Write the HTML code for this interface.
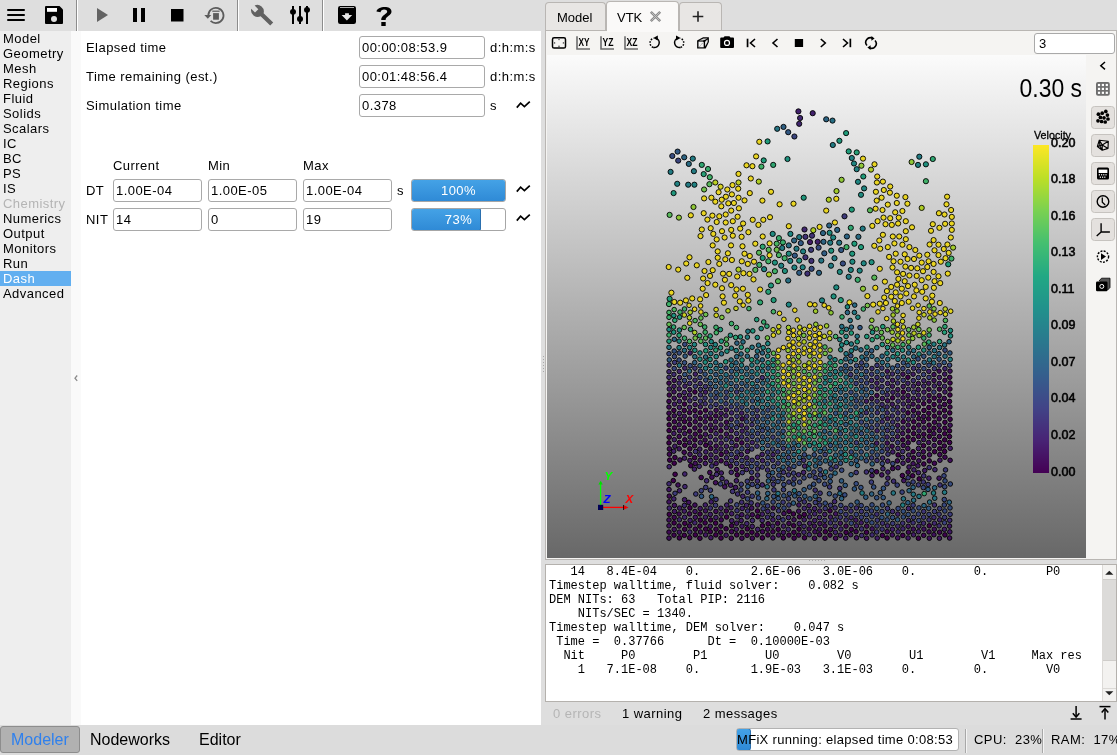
<!DOCTYPE html>
<html><head><meta charset="utf-8">
<style>
*{box-sizing:border-box;margin:0;padding:0}
html,body{width:1117px;height:755px;overflow:hidden;background:#dedede;font-family:"Liberation Sans",sans-serif;font-size:13px;color:#000;letter-spacing:0.45px}
svg,pre{letter-spacing:0}
.a{position:absolute}
#tb{left:0;top:0;width:545px;height:31px;background:#dedede}
.sep{position:absolute;top:0;width:2px;height:31px;border-left:1px solid #8c8c8c;border-right:1px solid #fff}
#nav{left:0;top:31px;width:71px;height:694px;background:#eeeeee}
#nav div{position:absolute;left:3px;height:15px;line-height:15px;white-space:nowrap}
#strip{left:71px;top:31px;width:10px;height:694px;background:#fafafa}
#panel{left:81px;top:31px;width:460px;height:694px;background:#fff}
.lbl{position:absolute;white-space:nowrap;line-height:15px}
.inp{position:absolute;height:23px;border:1px solid #a9a9a9;border-radius:3px;background:#fff;padding-left:2px;line-height:21px;white-space:nowrap}
.pb{position:absolute;height:23px;border:1px solid #a6a6a6;border-radius:3px;background:#fff;overflow:hidden}
.pbf{position:absolute;left:0;top:0;height:21px;background:linear-gradient(#44a2e6,#2f8ad6);border:1px solid #2a6fae;border-radius:2px}
.pbt{position:absolute;left:0;top:0;width:100%;height:21px;line-height:21px;text-align:center;color:#fff}
</style></head><body><div id="root" style="position:absolute;left:0;top:0;width:1117px;height:755px;will-change:transform">
<!-- main toolbar -->
<div id="tb" class="a">
<svg class="a" style="left:0;top:0" width="545" height="31" viewBox="0 0 545 31">
<g fill="#000">
<rect x="7" y="9" width="18" height="2" rx="1"/><rect x="7" y="14" width="18" height="2" rx="1"/><rect x="7" y="19" width="18" height="2" rx="1"/>
</g>
<path d="M46,6 H59.5 L63,9.5 V23 a1,1 0 0 1 -1,1 H46 a1,1 0 0 1 -1,-1 V7 a1,1 0 0 1 1,-1z" fill="#000"/>
<rect x="47" y="8" width="10" height="3.8" fill="#fff"/>
<circle cx="54" cy="18.9" r="3" fill="#dedede"/>
<path d="M97,8 L108,15 L97,22z" fill="#636363"/>
<rect x="133" y="8" width="4" height="14" fill="#000"/><rect x="141" y="8" width="4" height="14" fill="#000"/>
<rect x="171" y="9" width="12.5" height="12.5" fill="#000"/>
<path d="M210.6,20.9 A7.6,7.6 0 1 0 208.3,15.4" fill="none" stroke="#5c5c5c" stroke-width="1.8"/>
<path d="M204.3,15.1 L211.3,15.1 L207.8,18.7z" fill="#5c5c5c"/>
<rect x="213.1" y="13.1" width="5.8" height="6.6" fill="#5c5c5c"/>
<rect x="212.3" y="10.6" width="7.3" height="1.2" fill="#5c5c5c"/>
<path d="M251.2,8.8 L255,12.4 L258.3,9.2 L254.6,5.4 A6.6,6.6 0 0 1 263.6,13.2 L273.2,22.4 L270.2,25.6 L260.6,16.2 A6.6,6.6 0 0 1 251.2,8.8z" fill="#616161"/>
<g fill="#000"><rect x="292" y="6" width="2" height="18"/><rect x="299" y="6" width="2" height="18"/><rect x="306" y="6" width="2" height="18"/>
<ellipse cx="293" cy="11.8" rx="3" ry="2.9"/><ellipse cx="300" cy="18.9" rx="3" ry="2.9"/><ellipse cx="307" cy="9.8" rx="3" ry="2.9"/></g>
<rect x="338" y="6" width="18" height="18" rx="2.2" fill="#000"/>
<rect x="340" y="7.2" width="14" height="0.8" fill="#dedede"/>
<path d="M345.1,13.2 H348.9 V15.1 H352.2 L346.9,20.4 L341.6,15.1 H345.1z" fill="#e6e6e6"/>
<path d="M376.5,11.6 C376.4,6.4 391.5,4.5 391.5,11.6 C391.5,16 385.8,16 385.6,20 L381.2,20 C381.1,15 387.2,14.2 387.2,11.8 C387.2,8.6 380.6,8.8 380.6,12.2z" fill="#000"/>
<rect x="381.3" y="22" width="4.4" height="4" fill="#000"/>
</svg>
</div>
<div class="sep" style="left:76px"></div>
<div class="sep" style="left:237px"></div>
<div class="sep" style="left:322px"></div>

<!-- nav -->
<div id="nav" class="a">
<div style="top:0">Model</div>
<div style="top:15px">Geometry</div>
<div style="top:30px">Mesh</div>
<div style="top:45px">Regions</div>
<div style="top:60px">Fluid</div>
<div style="top:75px">Solids</div>
<div style="top:90px">Scalars</div>
<div style="top:105px">IC</div>
<div style="top:120px">BC</div>
<div style="top:135px">PS</div>
<div style="top:150px">IS</div>
<div style="top:165px;color:#b4b4b4">Chemistry</div>
<div style="top:180px">Numerics</div>
<div style="top:195px">Output</div>
<div style="top:210px">Monitors</div>
<div style="top:225px">Run</div>
<div style="top:240px;left:0;width:71px;padding-left:3px;background:#62aff0;color:#fff">Dash</div>
<div style="top:255px">Advanced</div>
</div>
<div id="strip" class="a"></div>
<div id="panel" class="a"></div>
<div class="lbl" style="left:86px;top:40px">Elapsed time</div>
<div class="lbl" style="left:86px;top:69px">Time remaining (est.)</div>
<div class="lbl" style="left:86px;top:98px">Simulation time</div>
<div class="inp" style="left:359px;top:36px;width:126px">00:00:08:53.9</div>
<div class="inp" style="left:359px;top:65px;width:126px">00:01:48:56.4</div>
<div class="inp" style="left:359px;top:94px;width:126px">0.378</div>
<div class="lbl" style="left:490px;top:40px">d:h:m:s</div>
<div class="lbl" style="left:490px;top:69px">d:h:m:s</div>
<div class="lbl" style="left:490px;top:98px">s</div>
<svg class="a" style="left:516px;top:100px" width="15" height="9" viewBox="0 0 15 9"><path d="M0.8,7.6 L4.6,3.2 L8.4,6.6 L13.8,1.6" fill="none" stroke="#000" stroke-width="1.7"/></svg>
<div class="lbl" style="left:113px;top:158px">Current</div>
<div class="lbl" style="left:208px;top:158px">Min</div>
<div class="lbl" style="left:303px;top:158px">Max</div>
<div class="lbl" style="left:86px;top:183px">DT</div>
<div class="lbl" style="left:86px;top:212px">NIT</div>
<div class="inp" style="left:113px;top:179px;width:89px">1.00E-04</div>
<div class="inp" style="left:208px;top:179px;width:89px">1.00E-05</div>
<div class="inp" style="left:303px;top:179px;width:89px">1.00E-04</div>
<div class="inp" style="left:113px;top:208px;width:89px">14</div>
<div class="inp" style="left:208px;top:208px;width:89px">0</div>
<div class="inp" style="left:303px;top:208px;width:89px">19</div>
<div class="lbl" style="left:397px;top:183px">s</div>
<div class="pb" style="left:411px;top:179px;width:95px"><div class="pbf" style="width:95px;left:-1px;top:-1px;height:23px"></div><div class="pbt">100%</div></div>
<div class="pb" style="left:411px;top:208px;width:95px"><div class="pbf" style="width:70px;left:-1px;top:-1px;height:23px"></div><div class="pbt">73%</div></div>
<svg class="a" style="left:516px;top:184px" width="15" height="9" viewBox="0 0 15 9"><path d="M0.8,7.6 L4.6,3.2 L8.4,6.6 L13.8,1.6" fill="none" stroke="#000" stroke-width="1.7"/></svg><svg class="a" style="left:516px;top:213px" width="15" height="9" viewBox="0 0 15 9"><path d="M0.8,7.6 L4.6,3.2 L8.4,6.6 L13.8,1.6" fill="none" stroke="#000" stroke-width="1.7"/></svg>


<svg class="a" style="left:70px;top:370px" width="12" height="16" viewBox="70 370 12 16"><path d="M77.2,375.5 L75,378.2 L77.2,380.8" fill="none" stroke="#8a8a8a" stroke-width="1.3"/></svg>
<svg class="a" style="left:541px;top:354px" width="5" height="20" viewBox="541 354 5 20"><g fill="#a8a8a8"><rect x="543" y="356" width="1" height="1"/><rect x="543" y="359" width="1" height="1"/><rect x="543" y="362" width="1" height="1"/><rect x="543" y="365" width="1" height="1"/><rect x="543" y="368" width="1" height="1"/><rect x="543" y="371" width="1" height="1"/></g></svg>
<!-- tabs -->
<div class="a" style="left:545px;top:2px;width:61px;height:29px;background:#e8e6e4;border:1px solid #b9b6b3;border-bottom:none;border-radius:4px 4px 0 0"></div>
<div class="lbl" style="left:557px;top:10px;letter-spacing:0">Model</div>
<div class="a" style="left:606px;top:1px;width:73px;height:31px;background:#faf9f8;border:1px solid #b9b6b3;border-bottom:none;border-radius:4px 4px 0 0"></div>
<div class="lbl" style="left:617px;top:10px;letter-spacing:0">VTK</div>
<svg class="a" style="left:649px;top:10px" width="13" height="13" viewBox="0 0 13 13"><path d="M1.8,1.8 L11.2,11.2 M11.2,1.8 L1.8,11.2" stroke="#8c8c8c" stroke-width="2.6" fill="none"/><path d="M2.5,2.5 L10.5,10.5 M10.5,2.5 L2.5,10.5" stroke="#c4c4c4" stroke-width="0.9" fill="none"/></svg>
<div class="a" style="left:679px;top:2px;width:43px;height:29px;background:#e8e6e4;border:1px solid #b9b6b3;border-bottom:none;border-radius:4px 4px 0 0"></div>
<svg class="a" style="left:692px;top:11px" width="12" height="11" viewBox="0 0 12 11"><path d="M0.7,5.5 H11.3 M6,0.2 V10.8" stroke="#222" stroke-width="1.6"/></svg>
<!-- tab frame -->
<div class="a" style="left:545px;top:30px;width:572px;height:530px;border:1px solid #b9b6b3;background:#f5f4f2"></div>
<div class="a" style="left:607px;top:30px;width:71px;height:2px;background:#faf9f8"></div>
<!-- viewport -->
<div id="vp" class="a" style="left:547px;top:55px;width:539px;height:503px;background:linear-gradient(#fbfbfb,#686868);overflow:hidden"></div>
<!-- overlays -->
<svg class="a" style="left:547px;top:55px" width="539" height="503" viewBox="547 55 539 503">
<g id="particles"><g stroke="#000" stroke-width="0.9"><circle cx="759.3" cy="141.8" r="2.6" fill="#e9d522"/><circle cx="677.6" cy="151.6" r="2.6" fill="#315782"/><circle cx="672.3" cy="156.0" r="2.6" fill="#364b7f"/><circle cx="684.2" cy="157.3" r="2.6" fill="#2c6382"/><circle cx="678.2" cy="160.6" r="2.6" fill="#3a447d"/><circle cx="692.8" cy="158.6" r="2.6" fill="#227a82"/><circle cx="688.8" cy="163.9" r="2.6" fill="#296a82"/><circle cx="701.8" cy="164.9" r="2.6" fill="#2fa570"/><circle cx="708.0" cy="169.0" r="2.6" fill="#38ab6b"/><circle cx="693.9" cy="171.2" r="2.6" fill="#227a82"/><circle cx="670.6" cy="171.9" r="2.6" fill="#227a82"/><circle cx="703.7" cy="174.1" r="2.6" fill="#269f76"/><circle cx="709.8" cy="177.2" r="2.6" fill="#3fb067"/><circle cx="677.2" cy="183.8" r="2.6" fill="#208181"/><circle cx="688.2" cy="184.7" r="2.6" fill="#227a82"/><circle cx="694.4" cy="184.7" r="2.6" fill="#208181"/><circle cx="673.6" cy="193.1" r="2.6" fill="#1f967b"/><circle cx="709.4" cy="184.2" r="2.6" fill="#57b859"/><circle cx="715.3" cy="182.5" r="2.6" fill="#bacf23"/><circle cx="720.6" cy="186.7" r="2.6" fill="#d7d222"/><circle cx="704.1" cy="189.5" r="2.6" fill="#70c04b"/><circle cx="727.3" cy="189.5" r="2.6" fill="#e9d522"/><circle cx="718.6" cy="192.2" r="2.6" fill="#e9d522"/><circle cx="732.5" cy="185.1" r="2.6" fill="#e9d522"/><circle cx="738.5" cy="173.9" r="2.6" fill="#e9d522"/><circle cx="738.5" cy="182.5" r="2.6" fill="#c0cf23"/><circle cx="738.2" cy="188.7" r="2.6" fill="#e9d522"/><circle cx="731.9" cy="194.4" r="2.6" fill="#e9d522"/><circle cx="725.9" cy="196.7" r="2.6" fill="#e9d522"/><circle cx="721.7" cy="199.7" r="2.6" fill="#e9d522"/><circle cx="715.3" cy="201.7" r="2.6" fill="#e9d522"/><circle cx="711.4" cy="197.7" r="2.6" fill="#e9d522"/><circle cx="704.1" cy="198.4" r="2.6" fill="#e9d522"/><circle cx="738.5" cy="197.7" r="2.6" fill="#e9d522"/><circle cx="744.5" cy="200.4" r="2.6" fill="#e9d522"/><circle cx="749.8" cy="193.1" r="2.6" fill="#e9d522"/><circle cx="750.8" cy="178.5" r="2.6" fill="#e9d522"/><circle cx="758.8" cy="181.6" r="2.6" fill="#aecd23"/><circle cx="746.5" cy="165.3" r="2.6" fill="#e9d522"/><circle cx="752.4" cy="166.2" r="2.6" fill="#e9d522"/><circle cx="756.1" cy="156.4" r="2.6" fill="#e9d522"/><circle cx="761.4" cy="166.6" r="2.6" fill="#3fb067"/><circle cx="763.7" cy="160.4" r="2.6" fill="#1f9b79"/><circle cx="762.4" cy="200.6" r="2.6" fill="#e9d522"/><circle cx="728.3" cy="203.3" r="2.6" fill="#e9d522"/><circle cx="733.9" cy="203.0" r="2.6" fill="#e9d522"/><circle cx="798.4" cy="111.4" r="2.6" fill="#42216c"/><circle cx="812.7" cy="113.2" r="2.6" fill="#42216c"/><circle cx="800.1" cy="118.0" r="2.6" fill="#41276f"/><circle cx="799.2" cy="123.8" r="2.6" fill="#41276f"/><circle cx="826.2" cy="119.3" r="2.6" fill="#2c6382"/><circle cx="832.5" cy="120.6" r="2.6" fill="#276e83"/><circle cx="777.2" cy="128.8" r="2.6" fill="#257382"/><circle cx="783.5" cy="126.9" r="2.6" fill="#2e5e82"/><circle cx="788.2" cy="132.2" r="2.6" fill="#315782"/><circle cx="794.4" cy="136.5" r="2.6" fill="#3a447d"/><circle cx="767.6" cy="141.4" r="2.6" fill="#1f9b79"/><circle cx="846.1" cy="133.1" r="2.6" fill="#1f9b79"/><circle cx="839.4" cy="140.8" r="2.6" fill="#1f967b"/><circle cx="832.8" cy="145.0" r="2.6" fill="#227a82"/><circle cx="773.2" cy="164.9" r="2.6" fill="#2fa570"/><circle cx="787.5" cy="159.0" r="2.6" fill="#1f907d"/><circle cx="848.7" cy="151.4" r="2.6" fill="#1f9b79"/><circle cx="856.7" cy="152.4" r="2.6" fill="#269f76"/><circle cx="851.8" cy="158.0" r="2.6" fill="#208181"/><circle cx="863.0" cy="158.6" r="2.6" fill="#e9d522"/><circle cx="854.0" cy="163.5" r="2.6" fill="#1e8581"/><circle cx="861.4" cy="165.7" r="2.6" fill="#8fc737"/><circle cx="856.7" cy="169.2" r="2.6" fill="#208181"/><circle cx="863.3" cy="176.5" r="2.6" fill="#1f9b79"/><circle cx="858.0" cy="181.8" r="2.6" fill="#1e8581"/><circle cx="841.6" cy="179.8" r="2.6" fill="#8fc737"/><circle cx="864.1" cy="188.4" r="2.6" fill="#1e8581"/><circle cx="861.0" cy="194.8" r="2.6" fill="#1f8a7f"/><circle cx="836.5" cy="191.1" r="2.6" fill="#a2cb2b"/><circle cx="836.3" cy="198.8" r="2.6" fill="#e9d522"/><circle cx="828.8" cy="199.7" r="2.6" fill="#aecd23"/><circle cx="803.7" cy="197.7" r="2.6" fill="#1f967b"/><circle cx="771.0" cy="191.8" r="2.6" fill="#e9d522"/><circle cx="779.6" cy="204.3" r="2.6" fill="#e9d522"/><circle cx="793.5" cy="203.7" r="2.6" fill="#e9d522"/><circle cx="919.3" cy="156.7" r="2.6" fill="#227a82"/><circle cx="911.6" cy="162.0" r="2.6" fill="#8fc737"/><circle cx="918.0" cy="164.9" r="2.6" fill="#208181"/><circle cx="925.9" cy="164.3" r="2.6" fill="#1f907d"/><circle cx="932.8" cy="159.0" r="2.6" fill="#2fa570"/><circle cx="925.9" cy="181.2" r="2.6" fill="#3fb067"/><circle cx="874.5" cy="164.3" r="2.6" fill="#e9d522"/><circle cx="871.0" cy="169.6" r="2.6" fill="#aecd23"/><circle cx="877.2" cy="176.5" r="2.6" fill="#e9d522"/><circle cx="876.9" cy="182.5" r="2.6" fill="#e9d522"/><circle cx="882.9" cy="181.6" r="2.6" fill="#e9d522"/><circle cx="890.2" cy="186.5" r="2.6" fill="#e9d522"/><circle cx="875.9" cy="191.8" r="2.6" fill="#e9d522"/><circle cx="883.8" cy="190.0" r="2.6" fill="#e9d522"/><circle cx="889.9" cy="192.7" r="2.6" fill="#e9d522"/><circle cx="881.6" cy="197.7" r="2.6" fill="#e9d522"/><circle cx="876.7" cy="200.6" r="2.6" fill="#e9d522"/><circle cx="896.8" cy="195.7" r="2.6" fill="#e9d522"/><circle cx="905.4" cy="197.1" r="2.6" fill="#e9d522"/><circle cx="896.8" cy="203.0" r="2.6" fill="#e9d522"/><circle cx="907.4" cy="203.7" r="2.6" fill="#e9d522"/><circle cx="947.1" cy="196.7" r="2.6" fill="#e9d522"/><circle cx="946.5" cy="204.3" r="2.6" fill="#e9d522"/><circle cx="887.8" cy="204.6" r="2.6" fill="#e9d522"/><circle cx="693.5" cy="207.0" r="2.6" fill="#8fc737"/><circle cx="669.6" cy="214.9" r="2.6" fill="#57b859"/><circle cx="678.9" cy="217.6" r="2.6" fill="#8fc737"/><circle cx="690.8" cy="215.3" r="2.6" fill="#e9d522"/><circle cx="703.7" cy="213.2" r="2.6" fill="#e9d522"/><circle cx="712.4" cy="215.6" r="2.6" fill="#e9d522"/><circle cx="719.3" cy="216.3" r="2.6" fill="#e9d522"/><circle cx="725.7" cy="214.5" r="2.6" fill="#e9d522"/><circle cx="731.2" cy="210.6" r="2.6" fill="#e9d522"/><circle cx="738.9" cy="208.3" r="2.6" fill="#e9d522"/><circle cx="721.3" cy="206.3" r="2.6" fill="#e9d522"/><circle cx="737.6" cy="216.7" r="2.6" fill="#e9d522"/><circle cx="707.4" cy="219.6" r="2.6" fill="#e9d522"/><circle cx="716.7" cy="222.0" r="2.6" fill="#e9d522"/><circle cx="725.7" cy="222.5" r="2.6" fill="#e9d522"/><circle cx="732.8" cy="221.2" r="2.6" fill="#e9d522"/><circle cx="743.1" cy="223.5" r="2.6" fill="#e9d522"/><circle cx="752.7" cy="219.8" r="2.6" fill="#e9d522"/><circle cx="758.4" cy="224.9" r="2.6" fill="#e9d522"/><circle cx="763.3" cy="219.8" r="2.6" fill="#e9d522"/><circle cx="701.8" cy="229.5" r="2.6" fill="#e9d522"/><circle cx="710.7" cy="228.2" r="2.6" fill="#e9d522"/><circle cx="713.3" cy="233.9" r="2.6" fill="#e9d522"/><circle cx="722.0" cy="231.2" r="2.6" fill="#e9d522"/><circle cx="731.2" cy="229.9" r="2.6" fill="#e9d522"/><circle cx="740.2" cy="228.6" r="2.6" fill="#e9d522"/><circle cx="748.4" cy="232.2" r="2.6" fill="#e9d522"/><circle cx="700.5" cy="236.1" r="2.6" fill="#e9d522"/><circle cx="716.7" cy="239.4" r="2.6" fill="#e9d522"/><circle cx="724.6" cy="237.5" r="2.6" fill="#e9d522"/><circle cx="732.8" cy="235.7" r="2.6" fill="#e9d522"/><circle cx="741.6" cy="236.8" r="2.6" fill="#e9d522"/><circle cx="762.7" cy="236.5" r="2.6" fill="#e9d522"/><circle cx="712.7" cy="245.4" r="2.6" fill="#e9d522"/><circle cx="731.0" cy="245.4" r="2.6" fill="#e9d522"/><circle cx="742.5" cy="246.3" r="2.6" fill="#e9d522"/><circle cx="755.3" cy="243.7" r="2.6" fill="#e9d522"/><circle cx="762.7" cy="246.7" r="2.6" fill="#2fa570"/><circle cx="717.7" cy="251.4" r="2.6" fill="#e9d522"/><circle cx="727.9" cy="253.3" r="2.6" fill="#e9d522"/><circle cx="744.5" cy="253.7" r="2.6" fill="#e9d522"/><circle cx="749.8" cy="256.0" r="2.6" fill="#e9d522"/><circle cx="759.0" cy="252.7" r="2.6" fill="#57b859"/><circle cx="762.7" cy="258.0" r="2.6" fill="#1f9b79"/><circle cx="689.5" cy="257.3" r="2.6" fill="#e9d522"/><circle cx="686.2" cy="263.5" r="2.6" fill="#e9d522"/><circle cx="696.8" cy="265.3" r="2.6" fill="#e9d522"/><circle cx="708.4" cy="262.0" r="2.6" fill="#e9d522"/><circle cx="717.7" cy="257.7" r="2.6" fill="#e9d522"/><circle cx="719.3" cy="263.9" r="2.6" fill="#e9d522"/><circle cx="725.3" cy="259.3" r="2.6" fill="#e9d522"/><circle cx="731.9" cy="260.0" r="2.6" fill="#e9d522"/><circle cx="741.8" cy="261.3" r="2.6" fill="#e9d522"/><circle cx="747.8" cy="263.9" r="2.6" fill="#e9d522"/><circle cx="754.0" cy="261.7" r="2.6" fill="#e9d522"/><circle cx="759.3" cy="264.9" r="2.6" fill="#3fb067"/><circle cx="764.1" cy="269.2" r="2.6" fill="#1e8581"/><circle cx="668.7" cy="267.0" r="2.6" fill="#e9d522"/><circle cx="678.2" cy="269.6" r="2.6" fill="#e9d522"/><circle cx="704.5" cy="271.0" r="2.6" fill="#e9d522"/><circle cx="712.7" cy="270.2" r="2.6" fill="#e9d522"/><circle cx="723.0" cy="273.6" r="2.6" fill="#e9d522"/><circle cx="729.2" cy="273.9" r="2.6" fill="#e9d522"/><circle cx="738.5" cy="269.6" r="2.6" fill="#aecd23"/><circle cx="743.4" cy="273.2" r="2.6" fill="#e9d522"/><circle cx="749.5" cy="273.9" r="2.6" fill="#e9d522"/><circle cx="755.3" cy="269.9" r="2.6" fill="#57b859"/><circle cx="737.2" cy="276.5" r="2.6" fill="#e9d522"/><circle cx="687.3" cy="277.8" r="2.6" fill="#e9d522"/><circle cx="703.1" cy="278.5" r="2.6" fill="#e9d522"/><circle cx="710.0" cy="275.9" r="2.6" fill="#e9d522"/><circle cx="724.9" cy="279.8" r="2.6" fill="#e9d522"/><circle cx="753.5" cy="279.4" r="2.6" fill="#e9d522"/><circle cx="707.6" cy="283.1" r="2.6" fill="#e9d522"/><circle cx="715.3" cy="284.7" r="2.6" fill="#e9d522"/><circle cx="722.0" cy="288.2" r="2.6" fill="#e9d522"/><circle cx="731.2" cy="285.1" r="2.6" fill="#e9d522"/><circle cx="736.5" cy="289.5" r="2.6" fill="#e9d522"/><circle cx="742.9" cy="288.7" r="2.6" fill="#e9d522"/><circle cx="702.7" cy="288.7" r="2.6" fill="#e9d522"/><circle cx="760.1" cy="289.5" r="2.6" fill="#e9d522"/><circle cx="671.4" cy="292.7" r="2.6" fill="#e9d522"/><circle cx="706.1" cy="295.1" r="2.6" fill="#e9d522"/><circle cx="722.6" cy="296.4" r="2.6" fill="#e9d522"/><circle cx="735.2" cy="295.7" r="2.6" fill="#e9d522"/><circle cx="747.8" cy="294.8" r="2.6" fill="#e9d522"/><circle cx="669.6" cy="298.8" r="2.6" fill="#1f9b79"/><circle cx="674.3" cy="302.0" r="2.6" fill="#e9d522"/><circle cx="680.2" cy="302.7" r="2.6" fill="#e9d522"/><circle cx="685.9" cy="300.4" r="2.6" fill="#e9d522"/><circle cx="692.2" cy="298.4" r="2.6" fill="#e9d522"/><circle cx="700.1" cy="299.3" r="2.6" fill="#e9d522"/><circle cx="723.9" cy="302.7" r="2.6" fill="#e9d522"/><circle cx="739.8" cy="301.4" r="2.6" fill="#e9d522"/><circle cx="748.4" cy="300.6" r="2.6" fill="#e9d522"/><circle cx="760.1" cy="302.4" r="2.6" fill="#2fa570"/><circle cx="669.0" cy="304.1" r="2.6" fill="#3fb067"/><circle cx="826.2" cy="210.6" r="2.6" fill="#e9d522"/><circle cx="851.8" cy="209.6" r="2.6" fill="#1f9b79"/><circle cx="844.5" cy="216.3" r="2.6" fill="#3d3979"/><circle cx="770.0" cy="217.2" r="2.6" fill="#e9d522"/><circle cx="788.8" cy="226.2" r="2.6" fill="#e9d522"/><circle cx="804.5" cy="229.5" r="2.6" fill="#41276f"/><circle cx="813.3" cy="230.2" r="2.6" fill="#aecd23"/><circle cx="819.6" cy="226.9" r="2.6" fill="#e9d522"/><circle cx="829.2" cy="225.5" r="2.6" fill="#2c6382"/><circle cx="834.9" cy="222.5" r="2.6" fill="#e9d522"/><circle cx="837.2" cy="229.9" r="2.6" fill="#2c6382"/><circle cx="850.8" cy="227.8" r="2.6" fill="#2fa570"/><circle cx="862.7" cy="228.6" r="2.6" fill="#227a82"/><circle cx="772.7" cy="233.9" r="2.6" fill="#1f8a7f"/><circle cx="790.4" cy="233.9" r="2.6" fill="#1e8581"/><circle cx="799.2" cy="237.1" r="2.6" fill="#227a82"/><circle cx="805.4" cy="236.8" r="2.6" fill="#3f3074"/><circle cx="812.0" cy="235.7" r="2.6" fill="#3f3074"/><circle cx="823.0" cy="233.1" r="2.6" fill="#2c6382"/><circle cx="829.6" cy="232.8" r="2.6" fill="#1f8a7f"/><circle cx="833.2" cy="237.5" r="2.6" fill="#1e8581"/><circle cx="846.9" cy="236.5" r="2.6" fill="#2c6382"/><circle cx="858.4" cy="236.8" r="2.6" fill="#296a82"/><circle cx="778.9" cy="238.1" r="2.6" fill="#38ab6b"/><circle cx="769.6" cy="243.4" r="2.6" fill="#e9d522"/><circle cx="776.7" cy="243.7" r="2.6" fill="#48b361"/><circle cx="782.9" cy="242.4" r="2.6" fill="#38ab6b"/><circle cx="794.1" cy="240.5" r="2.6" fill="#2c6382"/><circle cx="800.8" cy="243.1" r="2.6" fill="#315782"/><circle cx="810.0" cy="242.1" r="2.6" fill="#421b66"/><circle cx="817.7" cy="241.8" r="2.6" fill="#42216c"/><circle cx="823.5" cy="241.8" r="2.6" fill="#2c6382"/><circle cx="830.2" cy="242.7" r="2.6" fill="#227a82"/><circle cx="839.2" cy="242.7" r="2.6" fill="#257382"/><circle cx="854.4" cy="243.7" r="2.6" fill="#1f9b79"/><circle cx="861.0" cy="247.1" r="2.6" fill="#1f9b79"/><circle cx="768.7" cy="249.8" r="2.6" fill="#57b859"/><circle cx="776.7" cy="249.8" r="2.6" fill="#70c04b"/><circle cx="782.2" cy="248.0" r="2.6" fill="#227a82"/><circle cx="788.8" cy="245.4" r="2.6" fill="#296a82"/><circle cx="796.5" cy="248.7" r="2.6" fill="#227a82"/><circle cx="803.1" cy="251.4" r="2.6" fill="#208181"/><circle cx="811.1" cy="249.8" r="2.6" fill="#3d3979"/><circle cx="818.6" cy="247.6" r="2.6" fill="#364b7f"/><circle cx="831.2" cy="250.7" r="2.6" fill="#1f907d"/><circle cx="841.2" cy="250.0" r="2.6" fill="#315782"/><circle cx="846.5" cy="247.1" r="2.6" fill="#3fb067"/><circle cx="769.6" cy="255.3" r="2.6" fill="#e9d522"/><circle cx="778.9" cy="255.1" r="2.6" fill="#48b361"/><circle cx="788.8" cy="253.7" r="2.6" fill="#1f8a7f"/><circle cx="794.8" cy="255.6" r="2.6" fill="#315782"/><circle cx="805.4" cy="257.3" r="2.6" fill="#3f3074"/><circle cx="811.4" cy="260.9" r="2.6" fill="#3f3074"/><circle cx="824.3" cy="253.3" r="2.6" fill="#2f5c82"/><circle cx="834.5" cy="258.2" r="2.6" fill="#227a82"/><circle cx="852.2" cy="253.7" r="2.6" fill="#1f967b"/><circle cx="768.3" cy="261.3" r="2.6" fill="#3fb067"/><circle cx="774.9" cy="262.6" r="2.6" fill="#1f907d"/><circle cx="784.6" cy="258.2" r="2.6" fill="#3fb067"/><circle cx="790.2" cy="260.9" r="2.6" fill="#208181"/><circle cx="799.2" cy="260.6" r="2.6" fill="#1f907d"/><circle cx="821.3" cy="260.6" r="2.6" fill="#257382"/><circle cx="842.9" cy="263.5" r="2.6" fill="#364b7f"/><circle cx="852.4" cy="261.7" r="2.6" fill="#1f8a7f"/><circle cx="863.7" cy="263.3" r="2.6" fill="#1e8581"/><circle cx="781.2" cy="265.7" r="2.6" fill="#208181"/><circle cx="794.4" cy="267.5" r="2.6" fill="#1e8581"/><circle cx="802.7" cy="267.3" r="2.6" fill="#208181"/><circle cx="811.6" cy="268.8" r="2.6" fill="#364b7f"/><circle cx="831.0" cy="265.7" r="2.6" fill="#227a82"/><circle cx="850.8" cy="269.9" r="2.6" fill="#1e8581"/><circle cx="859.7" cy="270.6" r="2.6" fill="#1e8581"/><circle cx="769.0" cy="274.5" r="2.6" fill="#aecd23"/><circle cx="774.9" cy="271.2" r="2.6" fill="#3fb067"/><circle cx="784.9" cy="271.0" r="2.6" fill="#1f907d"/><circle cx="799.2" cy="272.8" r="2.6" fill="#2f5c82"/><circle cx="807.4" cy="273.6" r="2.6" fill="#3f3074"/><circle cx="819.0" cy="272.8" r="2.6" fill="#2c6382"/><circle cx="839.8" cy="271.9" r="2.6" fill="#1f8a7f"/><circle cx="848.7" cy="276.8" r="2.6" fill="#227a82"/><circle cx="857.7" cy="279.8" r="2.6" fill="#38ab6b"/><circle cx="778.0" cy="281.2" r="2.6" fill="#57b859"/><circle cx="788.2" cy="280.5" r="2.6" fill="#276e83"/><circle cx="771.0" cy="285.5" r="2.6" fill="#1f967b"/><circle cx="768.3" cy="291.8" r="2.6" fill="#269f76"/><circle cx="836.3" cy="287.4" r="2.6" fill="#1f8a7f"/><circle cx="863.0" cy="288.7" r="2.6" fill="#8fc737"/><circle cx="773.6" cy="300.1" r="2.6" fill="#1f9b79"/><circle cx="822.0" cy="300.4" r="2.6" fill="#1e8581"/><circle cx="833.6" cy="296.4" r="2.6" fill="#1f907d"/><circle cx="840.8" cy="300.1" r="2.6" fill="#1f9b79"/><circle cx="849.5" cy="302.4" r="2.6" fill="#e9d522"/><circle cx="810.0" cy="304.3" r="2.6" fill="#e9d522"/><circle cx="788.8" cy="304.6" r="2.6" fill="#1e8581"/><circle cx="870.0" cy="210.3" r="2.6" fill="#57b859"/><circle cx="875.6" cy="208.7" r="2.6" fill="#e9d522"/><circle cx="882.5" cy="210.0" r="2.6" fill="#e9d522"/><circle cx="895.2" cy="212.3" r="2.6" fill="#e9d522"/><circle cx="902.4" cy="211.0" r="2.6" fill="#e9d522"/><circle cx="921.7" cy="207.9" r="2.6" fill="#aecd23"/><circle cx="951.1" cy="210.0" r="2.6" fill="#e9d522"/><circle cx="938.9" cy="213.2" r="2.6" fill="#e9d522"/><circle cx="944.5" cy="214.5" r="2.6" fill="#e9d522"/><circle cx="951.8" cy="216.9" r="2.6" fill="#e9d522"/><circle cx="877.6" cy="221.2" r="2.6" fill="#e9d522"/><circle cx="883.5" cy="217.6" r="2.6" fill="#e9d522"/><circle cx="890.2" cy="218.2" r="2.6" fill="#e9d522"/><circle cx="898.8" cy="217.6" r="2.6" fill="#e9d522"/><circle cx="905.8" cy="221.2" r="2.6" fill="#e9d522"/><circle cx="872.3" cy="225.9" r="2.6" fill="#e9d522"/><circle cx="885.5" cy="224.2" r="2.6" fill="#e9d522"/><circle cx="891.8" cy="224.9" r="2.6" fill="#e9d522"/><circle cx="898.1" cy="223.5" r="2.6" fill="#e9d522"/><circle cx="912.0" cy="227.3" r="2.6" fill="#e9d522"/><circle cx="932.8" cy="224.2" r="2.6" fill="#e9d522"/><circle cx="939.4" cy="227.8" r="2.6" fill="#e9d522"/><circle cx="945.1" cy="223.8" r="2.6" fill="#e9d522"/><circle cx="951.8" cy="223.5" r="2.6" fill="#e9d522"/><circle cx="931.0" cy="230.8" r="2.6" fill="#e9d522"/><circle cx="951.8" cy="229.9" r="2.6" fill="#e9d522"/><circle cx="882.9" cy="234.8" r="2.6" fill="#e9d522"/><circle cx="892.8" cy="236.5" r="2.6" fill="#e9d522"/><circle cx="899.2" cy="236.5" r="2.6" fill="#e9d522"/><circle cx="905.8" cy="231.2" r="2.6" fill="#e9d522"/><circle cx="950.8" cy="237.5" r="2.6" fill="#e9d522"/><circle cx="879.3" cy="240.5" r="2.6" fill="#e9d522"/><circle cx="905.8" cy="239.2" r="2.6" fill="#e9d522"/><circle cx="933.6" cy="240.1" r="2.6" fill="#e9d522"/><circle cx="874.3" cy="245.8" r="2.6" fill="#e9d522"/><circle cx="880.2" cy="248.7" r="2.6" fill="#e9d522"/><circle cx="887.8" cy="247.1" r="2.6" fill="#e9d522"/><circle cx="894.4" cy="243.4" r="2.6" fill="#e9d522"/><circle cx="902.4" cy="244.7" r="2.6" fill="#e9d522"/><circle cx="909.4" cy="247.1" r="2.6" fill="#e9d522"/><circle cx="915.3" cy="250.0" r="2.6" fill="#e9d522"/><circle cx="929.6" cy="244.5" r="2.6" fill="#e9d522"/><circle cx="938.5" cy="244.7" r="2.6" fill="#e9d522"/><circle cx="947.4" cy="244.5" r="2.6" fill="#e9d522"/><circle cx="953.1" cy="247.6" r="2.6" fill="#a2cb2b"/><circle cx="934.5" cy="250.3" r="2.6" fill="#e9d522"/><circle cx="943.8" cy="249.0" r="2.6" fill="#e9d522"/><circle cx="889.1" cy="256.9" r="2.6" fill="#e9d522"/><circle cx="895.7" cy="253.7" r="2.6" fill="#e9d522"/><circle cx="904.7" cy="254.3" r="2.6" fill="#e9d522"/><circle cx="919.3" cy="255.6" r="2.6" fill="#e9d522"/><circle cx="927.3" cy="254.7" r="2.6" fill="#e9d522"/><circle cx="938.5" cy="255.1" r="2.6" fill="#e9d522"/><circle cx="948.7" cy="252.9" r="2.6" fill="#e9d522"/><circle cx="871.6" cy="262.2" r="2.6" fill="#1f907d"/><circle cx="879.8" cy="268.8" r="2.6" fill="#e9d522"/><circle cx="893.5" cy="261.3" r="2.6" fill="#e9d522"/><circle cx="900.5" cy="261.7" r="2.6" fill="#e9d522"/><circle cx="907.6" cy="259.0" r="2.6" fill="#e9d522"/><circle cx="914.0" cy="259.0" r="2.6" fill="#e9d522"/><circle cx="921.7" cy="262.6" r="2.6" fill="#e9d522"/><circle cx="928.6" cy="261.3" r="2.6" fill="#e9d522"/><circle cx="933.6" cy="263.9" r="2.6" fill="#e9d522"/><circle cx="940.8" cy="261.7" r="2.6" fill="#e9d522"/><circle cx="945.5" cy="258.2" r="2.6" fill="#e9d522"/><circle cx="951.4" cy="258.6" r="2.6" fill="#3fb067"/><circle cx="948.2" cy="264.3" r="2.6" fill="#1f9b79"/><circle cx="874.3" cy="277.6" r="2.6" fill="#57b859"/><circle cx="884.9" cy="281.6" r="2.6" fill="#e9d522"/><circle cx="892.5" cy="267.5" r="2.6" fill="#e9d522"/><circle cx="897.1" cy="272.3" r="2.6" fill="#e9d522"/><circle cx="903.1" cy="273.9" r="2.6" fill="#e9d522"/><circle cx="905.4" cy="266.6" r="2.6" fill="#e9d522"/><circle cx="911.1" cy="267.9" r="2.6" fill="#e9d522"/><circle cx="917.3" cy="268.3" r="2.6" fill="#e9d522"/><circle cx="923.0" cy="271.2" r="2.6" fill="#e9d522"/><circle cx="927.3" cy="267.0" r="2.6" fill="#e9d522"/><circle cx="933.6" cy="271.9" r="2.6" fill="#e9d522"/><circle cx="938.5" cy="276.3" r="2.6" fill="#e9d522"/><circle cx="947.8" cy="273.6" r="2.6" fill="#e9d522"/><circle cx="875.3" cy="287.8" r="2.6" fill="#e9d522"/><circle cx="867.4" cy="296.1" r="2.6" fill="#e9d522"/><circle cx="891.2" cy="286.9" r="2.6" fill="#e9d522"/><circle cx="897.1" cy="284.7" r="2.6" fill="#e9d522"/><circle cx="901.8" cy="288.7" r="2.6" fill="#e9d522"/><circle cx="908.0" cy="286.1" r="2.6" fill="#e9d522"/><circle cx="914.7" cy="284.7" r="2.6" fill="#e9d522"/><circle cx="916.4" cy="290.4" r="2.6" fill="#e9d522"/><circle cx="922.2" cy="291.8" r="2.6" fill="#e9d522"/><circle cx="925.7" cy="286.9" r="2.6" fill="#e9d522"/><circle cx="933.9" cy="287.8" r="2.6" fill="#e9d522"/><circle cx="940.2" cy="283.1" r="2.6" fill="#e9d522"/><circle cx="898.4" cy="278.9" r="2.6" fill="#e9d522"/><circle cx="904.7" cy="281.2" r="2.6" fill="#e9d522"/><circle cx="909.4" cy="275.5" r="2.6" fill="#e9d522"/><circle cx="916.7" cy="275.9" r="2.6" fill="#e9d522"/><circle cx="921.7" cy="280.2" r="2.6" fill="#e9d522"/><circle cx="928.3" cy="277.6" r="2.6" fill="#e9d522"/><circle cx="934.5" cy="281.2" r="2.6" fill="#e9d522"/><circle cx="886.9" cy="291.1" r="2.6" fill="#e9d522"/><circle cx="895.7" cy="292.4" r="2.6" fill="#e9d522"/><circle cx="906.3" cy="293.5" r="2.6" fill="#e9d522"/><circle cx="914.0" cy="296.4" r="2.6" fill="#e9d522"/><circle cx="925.7" cy="298.4" r="2.6" fill="#e9d522"/><circle cx="932.3" cy="295.7" r="2.6" fill="#e9d522"/><circle cx="884.2" cy="297.5" r="2.6" fill="#e9d522"/><circle cx="891.2" cy="296.7" r="2.6" fill="#e9d522"/><circle cx="900.5" cy="296.4" r="2.6" fill="#e9d522"/><circle cx="879.8" cy="303.7" r="2.6" fill="#e9d522"/><circle cx="885.9" cy="303.0" r="2.6" fill="#e9d522"/><circle cx="894.8" cy="301.0" r="2.6" fill="#e9d522"/><circle cx="901.8" cy="303.0" r="2.6" fill="#e9d522"/><circle cx="908.7" cy="301.7" r="2.6" fill="#e9d522"/><circle cx="931.9" cy="301.7" r="2.6" fill="#e9d522"/><circle cx="939.8" cy="303.0" r="2.6" fill="#e9d522"/><circle cx="873.2" cy="304.6" r="2.6" fill="#e9d522"/><circle cx="669.0" cy="538.1" r="2.3" fill="#40125d"/><circle cx="669.0" cy="532.1" r="2.3" fill="#400b56"/><circle cx="669.0" cy="525.8" r="2.3" fill="#41135e"/><circle cx="669.0" cy="520.0" r="2.3" fill="#41135e"/><circle cx="669.3" cy="514.3" r="2.3" fill="#3f014d"/><circle cx="669.3" cy="508.1" r="2.3" fill="#41266f"/><circle cx="669.0" cy="501.9" r="2.3" fill="#411560"/><circle cx="669.3" cy="496.1" r="2.3" fill="#400955"/><circle cx="669.0" cy="489.6" r="2.3" fill="#411964"/><circle cx="669.0" cy="483.8" r="2.3" fill="#412970"/><circle cx="669.2" cy="466.7" r="2.3" fill="#42226c"/><circle cx="669.7" cy="460.1" r="2.3" fill="#3f014d"/><circle cx="669.4" cy="454.2" r="2.3" fill="#3f0854"/><circle cx="669.4" cy="448.9" r="2.3" fill="#400b57"/><circle cx="669.0" cy="442.9" r="2.3" fill="#3f014d"/><circle cx="669.2" cy="437.2" r="2.3" fill="#3f014d"/><circle cx="669.1" cy="430.6" r="2.3" fill="#3f014d"/><circle cx="669.2" cy="424.8" r="2.3" fill="#3f014d"/><circle cx="669.1" cy="418.7" r="2.3" fill="#3f014d"/><circle cx="669.0" cy="413.2" r="2.3" fill="#3f0854"/><circle cx="669.0" cy="407.0" r="2.3" fill="#400e5a"/><circle cx="669.0" cy="401.4" r="2.3" fill="#400b57"/><circle cx="669.3" cy="395.0" r="2.3" fill="#3f0652"/><circle cx="669.3" cy="389.0" r="2.3" fill="#42206a"/><circle cx="669.0" cy="383.1" r="2.3" fill="#400b57"/><circle cx="669.0" cy="377.3" r="2.3" fill="#402d72"/><circle cx="669.0" cy="371.7" r="2.3" fill="#41286f"/><circle cx="669.1" cy="365.1" r="2.3" fill="#402b71"/><circle cx="669.3" cy="359.9" r="2.3" fill="#305982"/><circle cx="669.0" cy="353.7" r="2.3" fill="#39467e"/><circle cx="669.0" cy="347.3" r="2.3" fill="#247582"/><circle cx="669.0" cy="341.2" r="2.3" fill="#1f997a"/><circle cx="669.0" cy="335.0" r="2.3" fill="#3bad69"/><circle cx="669.0" cy="329.5" r="2.3" fill="#1e8780"/><circle cx="669.0" cy="324.3" r="2.3" fill="#63bc52"/><circle cx="669.0" cy="317.3" r="2.3" fill="#3bad69"/><circle cx="669.0" cy="312.4" r="2.3" fill="#45b264"/><circle cx="674.0" cy="535.1" r="2.3" fill="#3f0551"/><circle cx="674.2" cy="529.4" r="2.3" fill="#41125e"/><circle cx="674.1" cy="522.9" r="2.3" fill="#3f014d"/><circle cx="674.2" cy="517.4" r="2.3" fill="#3f0753"/><circle cx="674.5" cy="511.5" r="2.3" fill="#411661"/><circle cx="674.4" cy="505.4" r="2.3" fill="#41125d"/><circle cx="673.8" cy="498.9" r="2.3" fill="#42246d"/><circle cx="675.0" cy="493.3" r="2.3" fill="#3c3b7a"/><circle cx="673.3" cy="480.6" r="2.3" fill="#3f014d"/><circle cx="675.1" cy="474.3" r="2.3" fill="#3f014d"/><circle cx="674.2" cy="463.2" r="2.3" fill="#3f014d"/><circle cx="674.9" cy="457.5" r="2.3" fill="#3f014d"/><circle cx="673.7" cy="451.2" r="2.3" fill="#42216b"/><circle cx="674.8" cy="446.2" r="2.3" fill="#411a65"/><circle cx="674.3" cy="439.7" r="2.3" fill="#421c67"/><circle cx="673.9" cy="433.5" r="2.3" fill="#411a65"/><circle cx="674.5" cy="427.9" r="2.3" fill="#3f024e"/><circle cx="674.4" cy="421.8" r="2.3" fill="#3f0652"/><circle cx="674.3" cy="415.9" r="2.3" fill="#40115d"/><circle cx="673.9" cy="410.4" r="2.3" fill="#3f014d"/><circle cx="674.5" cy="404.1" r="2.3" fill="#411a65"/><circle cx="674.2" cy="398.2" r="2.3" fill="#400f5a"/><circle cx="674.0" cy="391.9" r="2.3" fill="#41145f"/><circle cx="674.0" cy="386.3" r="2.3" fill="#411a65"/><circle cx="674.2" cy="380.4" r="2.3" fill="#40105c"/><circle cx="673.9" cy="374.4" r="2.3" fill="#402c72"/><circle cx="674.2" cy="368.5" r="2.3" fill="#38467e"/><circle cx="674.6" cy="362.4" r="2.3" fill="#3d3979"/><circle cx="674.4" cy="356.5" r="2.3" fill="#38487e"/><circle cx="674.2" cy="351.1" r="2.3" fill="#335281"/><circle cx="674.3" cy="339.3" r="2.3" fill="#2b6582"/><circle cx="673.7" cy="332.2" r="2.3" fill="#1f917d"/><circle cx="673.6" cy="327.0" r="2.3" fill="#2ea471"/><circle cx="674.8" cy="320.3" r="2.3" fill="#2ea471"/><circle cx="673.8" cy="315.5" r="2.3" fill="#1f907d"/><circle cx="674.2" cy="309.6" r="2.3" fill="#4eb55e"/><circle cx="679.4" cy="537.9" r="2.3" fill="#3f014d"/><circle cx="679.3" cy="532.2" r="2.3" fill="#411460"/><circle cx="679.1" cy="526.0" r="2.3" fill="#3f0955"/><circle cx="679.4" cy="519.8" r="2.3" fill="#41256e"/><circle cx="679.1" cy="514.0" r="2.3" fill="#400b56"/><circle cx="679.6" cy="508.1" r="2.3" fill="#411b65"/><circle cx="679.5" cy="490.8" r="2.3" fill="#42236c"/><circle cx="678.0" cy="485.0" r="2.3" fill="#40105b"/><circle cx="679.9" cy="460.0" r="2.3" fill="#40105c"/><circle cx="679.2" cy="448.8" r="2.3" fill="#411560"/><circle cx="679.4" cy="442.6" r="2.3" fill="#3f0350"/><circle cx="679.2" cy="436.5" r="2.3" fill="#400a56"/><circle cx="679.6" cy="430.8" r="2.3" fill="#41125e"/><circle cx="679.2" cy="424.8" r="2.3" fill="#40115d"/><circle cx="679.6" cy="419.0" r="2.3" fill="#3f0854"/><circle cx="679.4" cy="413.4" r="2.3" fill="#421b66"/><circle cx="679.4" cy="407.3" r="2.3" fill="#421c67"/><circle cx="679.4" cy="401.3" r="2.3" fill="#421f6a"/><circle cx="679.5" cy="395.3" r="2.3" fill="#41135e"/><circle cx="679.3" cy="388.9" r="2.3" fill="#421e68"/><circle cx="679.2" cy="383.1" r="2.3" fill="#412970"/><circle cx="679.6" cy="377.6" r="2.3" fill="#41256e"/><circle cx="679.3" cy="371.4" r="2.3" fill="#42246d"/><circle cx="679.4" cy="365.3" r="2.3" fill="#257282"/><circle cx="679.1" cy="360.0" r="2.3" fill="#374a7f"/><circle cx="679.2" cy="353.0" r="2.3" fill="#364c7f"/><circle cx="679.1" cy="347.6" r="2.3" fill="#208081"/><circle cx="679.1" cy="341.1" r="2.3" fill="#1e8780"/><circle cx="679.1" cy="335.3" r="2.3" fill="#28a074"/><circle cx="679.4" cy="330.1" r="2.3" fill="#1f8e7e"/><circle cx="679.6" cy="317.2" r="2.3" fill="#1f977b"/><circle cx="680.0" cy="312.1" r="2.3" fill="#44b264"/><circle cx="684.3" cy="535.3" r="2.3" fill="#3f014d"/><circle cx="684.7" cy="529.2" r="2.3" fill="#3f014d"/><circle cx="684.8" cy="523.3" r="2.3" fill="#3f014d"/><circle cx="684.6" cy="517.3" r="2.3" fill="#41256e"/><circle cx="684.3" cy="511.1" r="2.3" fill="#421b66"/><circle cx="684.4" cy="505.4" r="2.3" fill="#402a71"/><circle cx="684.6" cy="499.7" r="2.3" fill="#421c67"/><circle cx="684.9" cy="486.6" r="2.3" fill="#41276f"/><circle cx="684.8" cy="474.0" r="2.3" fill="#42246d"/><circle cx="684.5" cy="458.1" r="2.3" fill="#421d68"/><circle cx="684.2" cy="452.3" r="2.3" fill="#3f0955"/><circle cx="684.7" cy="445.3" r="2.3" fill="#3f014d"/><circle cx="684.8" cy="439.8" r="2.3" fill="#3f0450"/><circle cx="684.7" cy="433.7" r="2.3" fill="#411661"/><circle cx="684.3" cy="427.9" r="2.3" fill="#3f014d"/><circle cx="684.5" cy="421.7" r="2.3" fill="#3f024e"/><circle cx="684.3" cy="416.2" r="2.3" fill="#41135f"/><circle cx="684.3" cy="410.4" r="2.3" fill="#3f0450"/><circle cx="684.5" cy="404.1" r="2.3" fill="#3f014d"/><circle cx="684.7" cy="398.1" r="2.3" fill="#400c57"/><circle cx="684.3" cy="392.5" r="2.3" fill="#42206b"/><circle cx="684.9" cy="386.1" r="2.3" fill="#42216c"/><circle cx="684.5" cy="380.6" r="2.3" fill="#3a427d"/><circle cx="684.8" cy="374.5" r="2.3" fill="#335381"/><circle cx="684.8" cy="368.1" r="2.3" fill="#41286f"/><circle cx="684.5" cy="362.7" r="2.3" fill="#354e80"/><circle cx="685.1" cy="356.1" r="2.3" fill="#305a82"/><circle cx="684.4" cy="350.4" r="2.3" fill="#276d83"/><circle cx="684.8" cy="344.3" r="2.3" fill="#37497f"/><circle cx="684.5" cy="338.2" r="2.3" fill="#39ac6a"/><circle cx="684.2" cy="327.4" r="2.3" fill="#69be4f"/><circle cx="684.3" cy="315.0" r="2.3" fill="#cbd122"/><circle cx="684.5" cy="309.0" r="2.3" fill="#40b066"/><circle cx="689.7" cy="537.7" r="2.3" fill="#3f014d"/><circle cx="689.8" cy="532.1" r="2.3" fill="#41266e"/><circle cx="689.6" cy="525.9" r="2.3" fill="#3f0955"/><circle cx="690.1" cy="520.4" r="2.3" fill="#421f69"/><circle cx="689.5" cy="513.9" r="2.3" fill="#400955"/><circle cx="689.9" cy="507.9" r="2.3" fill="#3f014d"/><circle cx="688.8" cy="502.4" r="2.3" fill="#41135e"/><circle cx="690.8" cy="465.7" r="2.3" fill="#3f014d"/><circle cx="689.9" cy="460.5" r="2.3" fill="#411863"/><circle cx="690.0" cy="454.3" r="2.3" fill="#411460"/><circle cx="689.8" cy="448.8" r="2.3" fill="#3f0450"/><circle cx="689.5" cy="442.7" r="2.3" fill="#41125e"/><circle cx="690.1" cy="437.0" r="2.3" fill="#411863"/><circle cx="689.6" cy="431.2" r="2.3" fill="#3f014d"/><circle cx="689.7" cy="424.6" r="2.3" fill="#3f014d"/><circle cx="689.6" cy="419.1" r="2.3" fill="#400b57"/><circle cx="689.6" cy="412.7" r="2.3" fill="#3f0350"/><circle cx="689.6" cy="407.3" r="2.3" fill="#421f6a"/><circle cx="689.8" cy="400.9" r="2.3" fill="#41276f"/><circle cx="689.6" cy="395.0" r="2.3" fill="#411b65"/><circle cx="689.7" cy="389.6" r="2.3" fill="#411762"/><circle cx="689.7" cy="383.4" r="2.3" fill="#402d72"/><circle cx="689.6" cy="377.3" r="2.3" fill="#3b407c"/><circle cx="689.5" cy="371.1" r="2.3" fill="#2a6782"/><circle cx="690.1" cy="365.7" r="2.3" fill="#354d7f"/><circle cx="690.1" cy="353.0" r="2.3" fill="#421e69"/><circle cx="689.7" cy="347.5" r="2.3" fill="#1e8581"/><circle cx="689.5" cy="341.4" r="2.3" fill="#45b263"/><circle cx="690.5" cy="329.3" r="2.3" fill="#2aa273"/><circle cx="689.7" cy="323.2" r="2.3" fill="#e0d322"/><circle cx="689.4" cy="317.7" r="2.3" fill="#b9cf23"/><circle cx="690.2" cy="312.3" r="2.3" fill="#a9cc26"/><circle cx="689.1" cy="305.3" r="2.3" fill="#dcd322"/><circle cx="695.3" cy="534.9" r="2.3" fill="#3f014d"/><circle cx="695.3" cy="529.2" r="2.3" fill="#3f0450"/><circle cx="694.8" cy="522.8" r="2.3" fill="#42246d"/><circle cx="695.3" cy="517.3" r="2.3" fill="#411561"/><circle cx="695.0" cy="511.5" r="2.3" fill="#411460"/><circle cx="694.9" cy="505.1" r="2.3" fill="#400f5b"/><circle cx="695.8" cy="494.0" r="2.3" fill="#3d3a7a"/><circle cx="694.4" cy="469.1" r="2.3" fill="#42206b"/><circle cx="695.2" cy="463.4" r="2.3" fill="#400f5a"/><circle cx="694.6" cy="457.7" r="2.3" fill="#3f014d"/><circle cx="695.5" cy="451.5" r="2.3" fill="#3f3074"/><circle cx="694.6" cy="445.8" r="2.3" fill="#3f0854"/><circle cx="694.9" cy="439.9" r="2.3" fill="#3f014d"/><circle cx="695.2" cy="434.1" r="2.3" fill="#3f0854"/><circle cx="694.9" cy="428.0" r="2.3" fill="#3f0652"/><circle cx="695.2" cy="421.8" r="2.3" fill="#400c58"/><circle cx="695.3" cy="416.1" r="2.3" fill="#411762"/><circle cx="694.9" cy="410.4" r="2.3" fill="#3f0450"/><circle cx="695.1" cy="404.5" r="2.3" fill="#411762"/><circle cx="695.0" cy="398.4" r="2.3" fill="#3f3175"/><circle cx="694.9" cy="392.0" r="2.3" fill="#3f014d"/><circle cx="695.3" cy="386.3" r="2.3" fill="#3d3879"/><circle cx="695.0" cy="380.2" r="2.3" fill="#402b71"/><circle cx="695.3" cy="374.1" r="2.3" fill="#42216c"/><circle cx="694.9" cy="368.2" r="2.3" fill="#3d3a7a"/><circle cx="694.7" cy="362.6" r="2.3" fill="#2e5f82"/><circle cx="694.8" cy="356.7" r="2.3" fill="#266f83"/><circle cx="694.8" cy="350.3" r="2.3" fill="#1f8e7e"/><circle cx="694.4" cy="344.5" r="2.3" fill="#1e8581"/><circle cx="695.2" cy="338.1" r="2.3" fill="#77c246"/><circle cx="694.7" cy="332.5" r="2.3" fill="#abcd25"/><circle cx="695.1" cy="320.6" r="2.3" fill="#4cb45f"/><circle cx="694.6" cy="309.2" r="2.3" fill="#e9d522"/><circle cx="699.9" cy="538.2" r="2.3" fill="#3f014d"/><circle cx="700.5" cy="532.0" r="2.3" fill="#400f5b"/><circle cx="699.9" cy="526.1" r="2.3" fill="#3f014d"/><circle cx="700.3" cy="520.1" r="2.3" fill="#3f014d"/><circle cx="700.0" cy="514.0" r="2.3" fill="#3f014d"/><circle cx="700.2" cy="508.5" r="2.3" fill="#411763"/><circle cx="701.5" cy="496.3" r="2.3" fill="#315782"/><circle cx="701.3" cy="490.7" r="2.3" fill="#3c3f7c"/><circle cx="701.2" cy="477.5" r="2.3" fill="#3f0652"/><circle cx="699.2" cy="466.3" r="2.3" fill="#402b71"/><circle cx="700.1" cy="460.3" r="2.3" fill="#40125d"/><circle cx="699.8" cy="454.8" r="2.3" fill="#41256e"/><circle cx="699.8" cy="449.1" r="2.3" fill="#421c67"/><circle cx="700.3" cy="442.7" r="2.3" fill="#421b66"/><circle cx="700.3" cy="436.8" r="2.3" fill="#3f0451"/><circle cx="699.9" cy="431.0" r="2.3" fill="#3f014d"/><circle cx="700.0" cy="425.1" r="2.3" fill="#40115c"/><circle cx="700.2" cy="418.7" r="2.3" fill="#3f014d"/><circle cx="700.2" cy="412.8" r="2.3" fill="#3f014d"/><circle cx="700.3" cy="406.8" r="2.3" fill="#421e69"/><circle cx="700.4" cy="401.2" r="2.3" fill="#3e3577"/><circle cx="700.5" cy="394.9" r="2.3" fill="#3f2e73"/><circle cx="700.5" cy="389.4" r="2.3" fill="#3f3175"/><circle cx="700.2" cy="383.6" r="2.3" fill="#402b71"/><circle cx="700.0" cy="377.6" r="2.3" fill="#39457e"/><circle cx="700.4" cy="371.2" r="2.3" fill="#3a437d"/><circle cx="700.0" cy="365.7" r="2.3" fill="#286c83"/><circle cx="699.9" cy="359.2" r="2.3" fill="#1f8c7f"/><circle cx="700.0" cy="353.0" r="2.3" fill="#1e8780"/><circle cx="700.8" cy="341.2" r="2.3" fill="#51b65c"/><circle cx="699.7" cy="335.7" r="2.3" fill="#37ab6b"/><circle cx="700.3" cy="324.3" r="2.3" fill="#68bd4f"/><circle cx="700.9" cy="318.0" r="2.3" fill="#66bd50"/><circle cx="700.9" cy="312.0" r="2.3" fill="#e9d522"/><circle cx="700.6" cy="305.9" r="2.3" fill="#e9d522"/><circle cx="705.6" cy="534.9" r="2.3" fill="#411762"/><circle cx="705.7" cy="529.1" r="2.3" fill="#3f014d"/><circle cx="705.1" cy="522.9" r="2.3" fill="#3f0450"/><circle cx="705.4" cy="517.2" r="2.3" fill="#421c67"/><circle cx="705.5" cy="510.9" r="2.3" fill="#41145f"/><circle cx="705.3" cy="505.0" r="2.3" fill="#42206a"/><circle cx="705.7" cy="487.4" r="2.3" fill="#3d3b7a"/><circle cx="706.6" cy="480.8" r="2.3" fill="#412970"/><circle cx="705.3" cy="463.4" r="2.3" fill="#421b66"/><circle cx="705.5" cy="457.7" r="2.3" fill="#3f034f"/><circle cx="705.8" cy="451.9" r="2.3" fill="#42216c"/><circle cx="705.8" cy="445.3" r="2.3" fill="#3f014d"/><circle cx="705.1" cy="440.0" r="2.3" fill="#400d58"/><circle cx="705.4" cy="434.2" r="2.3" fill="#411661"/><circle cx="705.4" cy="428.0" r="2.3" fill="#411964"/><circle cx="705.2" cy="421.8" r="2.3" fill="#40115c"/><circle cx="705.6" cy="416.2" r="2.3" fill="#411863"/><circle cx="705.6" cy="410.2" r="2.3" fill="#3f014d"/><circle cx="705.2" cy="403.8" r="2.3" fill="#3f2f73"/><circle cx="705.1" cy="398.1" r="2.3" fill="#3e3677"/><circle cx="705.5" cy="392.1" r="2.3" fill="#421b66"/><circle cx="705.4" cy="386.5" r="2.3" fill="#3e3376"/><circle cx="705.7" cy="380.1" r="2.3" fill="#374a7f"/><circle cx="705.1" cy="374.2" r="2.3" fill="#335381"/><circle cx="705.6" cy="368.3" r="2.3" fill="#217e81"/><circle cx="705.2" cy="362.2" r="2.3" fill="#1f8d7e"/><circle cx="705.6" cy="357.0" r="2.3" fill="#267182"/><circle cx="705.8" cy="350.8" r="2.3" fill="#1f9a79"/><circle cx="705.5" cy="344.4" r="2.3" fill="#1f8d7e"/><circle cx="705.6" cy="338.1" r="2.3" fill="#5ab957"/><circle cx="705.2" cy="332.2" r="2.3" fill="#3eb067"/><circle cx="704.7" cy="327.0" r="2.3" fill="#3aad6a"/><circle cx="705.7" cy="314.5" r="2.3" fill="#6cbf4d"/><circle cx="710.9" cy="537.7" r="2.3" fill="#411762"/><circle cx="710.3" cy="531.8" r="2.3" fill="#3f014d"/><circle cx="710.3" cy="526.3" r="2.3" fill="#41145f"/><circle cx="710.7" cy="520.0" r="2.3" fill="#3f014d"/><circle cx="710.3" cy="514.4" r="2.3" fill="#421d67"/><circle cx="710.3" cy="508.1" r="2.3" fill="#3f3174"/><circle cx="711.2" cy="501.9" r="2.3" fill="#421e69"/><circle cx="711.6" cy="496.7" r="2.3" fill="#2b6582"/><circle cx="710.4" cy="490.2" r="2.3" fill="#3c3c7b"/><circle cx="711.9" cy="477.2" r="2.3" fill="#400e59"/><circle cx="709.8" cy="472.5" r="2.3" fill="#3f0854"/><circle cx="711.8" cy="466.0" r="2.3" fill="#3f2f74"/><circle cx="710.8" cy="460.6" r="2.3" fill="#41256e"/><circle cx="710.9" cy="454.9" r="2.3" fill="#42206b"/><circle cx="710.7" cy="448.6" r="2.3" fill="#3f0551"/><circle cx="710.3" cy="443.1" r="2.3" fill="#421b66"/><circle cx="710.4" cy="436.7" r="2.3" fill="#42216b"/><circle cx="710.9" cy="430.7" r="2.3" fill="#3f0854"/><circle cx="710.6" cy="425.1" r="2.3" fill="#411560"/><circle cx="710.5" cy="418.8" r="2.3" fill="#3f014d"/><circle cx="710.7" cy="413.2" r="2.3" fill="#42226c"/><circle cx="710.7" cy="406.8" r="2.3" fill="#3d3979"/><circle cx="710.9" cy="401.0" r="2.3" fill="#3a437d"/><circle cx="710.8" cy="395.0" r="2.3" fill="#315681"/><circle cx="710.4" cy="389.1" r="2.3" fill="#3b417d"/><circle cx="710.4" cy="383.6" r="2.3" fill="#325581"/><circle cx="710.3" cy="377.7" r="2.3" fill="#276e83"/><circle cx="710.8" cy="371.6" r="2.3" fill="#276e83"/><circle cx="710.4" cy="365.5" r="2.3" fill="#217e81"/><circle cx="710.1" cy="359.4" r="2.3" fill="#1f8d7e"/><circle cx="710.8" cy="353.6" r="2.3" fill="#237982"/><circle cx="710.7" cy="347.5" r="2.3" fill="#1f8481"/><circle cx="711.2" cy="341.6" r="2.3" fill="#1e8780"/><circle cx="710.2" cy="336.0" r="2.3" fill="#28a074"/><circle cx="715.8" cy="534.9" r="2.3" fill="#3f014d"/><circle cx="716.0" cy="529.2" r="2.3" fill="#3f034f"/><circle cx="715.6" cy="523.1" r="2.3" fill="#3f014d"/><circle cx="715.9" cy="517.5" r="2.3" fill="#421f69"/><circle cx="715.9" cy="511.4" r="2.3" fill="#400e59"/><circle cx="715.5" cy="505.3" r="2.3" fill="#3d3979"/><circle cx="716.0" cy="499.4" r="2.3" fill="#3e3678"/><circle cx="715.6" cy="482.7" r="2.3" fill="#400e5a"/><circle cx="716.5" cy="474.5" r="2.3" fill="#412870"/><circle cx="717.0" cy="469.6" r="2.3" fill="#411662"/><circle cx="716.1" cy="463.5" r="2.3" fill="#411762"/><circle cx="716.1" cy="457.8" r="2.3" fill="#421b66"/><circle cx="715.9" cy="451.5" r="2.3" fill="#42216c"/><circle cx="716.1" cy="446.1" r="2.3" fill="#400f5b"/><circle cx="715.7" cy="439.9" r="2.3" fill="#41276f"/><circle cx="716.0" cy="433.7" r="2.3" fill="#41276f"/><circle cx="715.6" cy="427.9" r="2.3" fill="#411560"/><circle cx="715.6" cy="421.8" r="2.3" fill="#411863"/><circle cx="715.8" cy="416.0" r="2.3" fill="#400955"/><circle cx="716.1" cy="410.3" r="2.3" fill="#400e5a"/><circle cx="716.0" cy="404.4" r="2.3" fill="#3d3a7a"/><circle cx="715.9" cy="397.8" r="2.3" fill="#3b3f7c"/><circle cx="716.1" cy="392.3" r="2.3" fill="#354e80"/><circle cx="715.6" cy="386.5" r="2.3" fill="#2d5f82"/><circle cx="715.6" cy="380.6" r="2.3" fill="#2c6382"/><circle cx="715.9" cy="374.6" r="2.3" fill="#315882"/><circle cx="716.1" cy="368.6" r="2.3" fill="#247582"/><circle cx="715.8" cy="362.7" r="2.3" fill="#267182"/><circle cx="716.2" cy="356.6" r="2.3" fill="#1f8980"/><circle cx="715.8" cy="350.1" r="2.3" fill="#28a075"/><circle cx="715.3" cy="344.6" r="2.3" fill="#1f8381"/><circle cx="716.3" cy="332.7" r="2.3" fill="#42b165"/><circle cx="716.0" cy="327.3" r="2.3" fill="#3bad69"/><circle cx="716.2" cy="315.3" r="2.3" fill="#d0d122"/><circle cx="716.1" cy="309.5" r="2.3" fill="#d4d222"/><circle cx="721.0" cy="538.0" r="2.3" fill="#3f014d"/><circle cx="720.7" cy="532.2" r="2.3" fill="#3f014d"/><circle cx="720.9" cy="526.1" r="2.3" fill="#3f0450"/><circle cx="721.2" cy="519.9" r="2.3" fill="#3f0955"/><circle cx="721.2" cy="514.1" r="2.3" fill="#42246d"/><circle cx="720.9" cy="508.3" r="2.3" fill="#42236d"/><circle cx="720.5" cy="483.9" r="2.3" fill="#3c3e7c"/><circle cx="722.0" cy="478.6" r="2.3" fill="#402970"/><circle cx="721.3" cy="473.0" r="2.3" fill="#421d68"/><circle cx="721.1" cy="460.8" r="2.3" fill="#3f0551"/><circle cx="721.2" cy="454.4" r="2.3" fill="#3f0450"/><circle cx="721.0" cy="449.0" r="2.3" fill="#421e69"/><circle cx="721.2" cy="443.1" r="2.3" fill="#421c67"/><circle cx="720.9" cy="437.1" r="2.3" fill="#421b66"/><circle cx="720.9" cy="430.8" r="2.3" fill="#3f024e"/><circle cx="721.0" cy="425.0" r="2.3" fill="#421e68"/><circle cx="720.7" cy="418.7" r="2.3" fill="#411863"/><circle cx="721.1" cy="413.3" r="2.3" fill="#411a65"/><circle cx="721.1" cy="407.4" r="2.3" fill="#3f3175"/><circle cx="721.0" cy="401.1" r="2.3" fill="#2f5c82"/><circle cx="720.8" cy="394.9" r="2.3" fill="#2c6382"/><circle cx="721.1" cy="389.0" r="2.3" fill="#2d5f82"/><circle cx="720.7" cy="383.0" r="2.3" fill="#2e5d82"/><circle cx="720.8" cy="377.5" r="2.3" fill="#296882"/><circle cx="721.1" cy="371.6" r="2.3" fill="#267083"/><circle cx="720.7" cy="365.5" r="2.3" fill="#266f83"/><circle cx="721.5" cy="353.8" r="2.3" fill="#266f83"/><circle cx="720.5" cy="347.8" r="2.3" fill="#1f967b"/><circle cx="721.3" cy="341.2" r="2.3" fill="#1f967b"/><circle cx="720.4" cy="329.6" r="2.3" fill="#1f9a7a"/><circle cx="721.9" cy="317.4" r="2.3" fill="#7dc342"/><circle cx="726.1" cy="535.2" r="2.3" fill="#411964"/><circle cx="726.1" cy="528.8" r="2.3" fill="#3f014d"/><circle cx="726.6" cy="517.0" r="2.3" fill="#3f014d"/><circle cx="726.3" cy="511.0" r="2.3" fill="#3f0753"/><circle cx="726.7" cy="505.1" r="2.3" fill="#42226c"/><circle cx="724.8" cy="486.8" r="2.3" fill="#411460"/><circle cx="726.4" cy="482.1" r="2.3" fill="#42246d"/><circle cx="726.3" cy="463.4" r="2.3" fill="#411863"/><circle cx="726.5" cy="457.8" r="2.3" fill="#412970"/><circle cx="726.3" cy="452.0" r="2.3" fill="#41145f"/><circle cx="726.4" cy="446.2" r="2.3" fill="#421e69"/><circle cx="726.2" cy="439.6" r="2.3" fill="#3f3275"/><circle cx="726.4" cy="434.1" r="2.3" fill="#411560"/><circle cx="726.4" cy="427.7" r="2.3" fill="#421f69"/><circle cx="726.5" cy="422.2" r="2.3" fill="#400a56"/><circle cx="726.0" cy="415.8" r="2.3" fill="#421c67"/><circle cx="726.3" cy="410.0" r="2.3" fill="#411863"/><circle cx="726.0" cy="403.8" r="2.3" fill="#3c3d7b"/><circle cx="726.1" cy="397.9" r="2.3" fill="#3b417d"/><circle cx="726.3" cy="392.1" r="2.3" fill="#3a427d"/><circle cx="725.9" cy="385.9" r="2.3" fill="#1f8c7f"/><circle cx="726.2" cy="380.2" r="2.3" fill="#2a6682"/><circle cx="726.1" cy="374.7" r="2.3" fill="#267083"/><circle cx="726.0" cy="368.1" r="2.3" fill="#38467e"/><circle cx="725.7" cy="361.8" r="2.3" fill="#1f977b"/><circle cx="726.9" cy="351.2" r="2.3" fill="#1f8f7e"/><circle cx="726.5" cy="344.3" r="2.3" fill="#4bb460"/><circle cx="726.4" cy="339.1" r="2.3" fill="#53b75b"/><circle cx="728.0" cy="310.8" r="2.3" fill="#accd24"/><circle cx="731.3" cy="538.2" r="2.3" fill="#3f0652"/><circle cx="731.6" cy="531.7" r="2.3" fill="#400a56"/><circle cx="731.7" cy="525.8" r="2.3" fill="#3f014d"/><circle cx="731.7" cy="520.7" r="2.3" fill="#421d68"/><circle cx="731.7" cy="513.7" r="2.3" fill="#421c67"/><circle cx="731.1" cy="507.8" r="2.3" fill="#42206b"/><circle cx="730.6" cy="501.0" r="2.3" fill="#402d73"/><circle cx="732.6" cy="491.4" r="2.3" fill="#3f3275"/><circle cx="730.7" cy="485.2" r="2.3" fill="#421c67"/><circle cx="731.3" cy="472.3" r="2.3" fill="#42226c"/><circle cx="730.7" cy="466.1" r="2.3" fill="#400b57"/><circle cx="731.6" cy="460.7" r="2.3" fill="#3e3476"/><circle cx="731.3" cy="454.4" r="2.3" fill="#3c3b7a"/><circle cx="731.7" cy="448.6" r="2.3" fill="#402b71"/><circle cx="731.7" cy="442.5" r="2.3" fill="#3f3275"/><circle cx="731.1" cy="437.1" r="2.3" fill="#421b66"/><circle cx="731.3" cy="430.7" r="2.3" fill="#411762"/><circle cx="731.3" cy="425.3" r="2.3" fill="#39467e"/><circle cx="731.3" cy="419.3" r="2.3" fill="#42216c"/><circle cx="731.6" cy="412.9" r="2.3" fill="#41276f"/><circle cx="731.3" cy="406.8" r="2.3" fill="#3c3c7b"/><circle cx="731.6" cy="401.2" r="2.3" fill="#2d6182"/><circle cx="731.2" cy="395.2" r="2.3" fill="#227b82"/><circle cx="731.2" cy="389.4" r="2.3" fill="#2b6582"/><circle cx="731.1" cy="383.4" r="2.3" fill="#2e5e82"/><circle cx="731.2" cy="377.1" r="2.3" fill="#325481"/><circle cx="731.5" cy="371.2" r="2.3" fill="#305a82"/><circle cx="731.6" cy="365.4" r="2.3" fill="#247582"/><circle cx="731.1" cy="360.0" r="2.3" fill="#247582"/><circle cx="731.4" cy="348.2" r="2.3" fill="#217e81"/><circle cx="730.4" cy="335.3" r="2.3" fill="#1f917d"/><circle cx="731.5" cy="323.6" r="2.3" fill="#3bad69"/><circle cx="736.7" cy="534.9" r="2.3" fill="#3f024e"/><circle cx="736.3" cy="529.3" r="2.3" fill="#421c67"/><circle cx="736.6" cy="523.2" r="2.3" fill="#411762"/><circle cx="737.2" cy="516.8" r="2.3" fill="#402d72"/><circle cx="737.0" cy="510.7" r="2.3" fill="#3e3376"/><circle cx="736.8" cy="504.9" r="2.3" fill="#3a437d"/><circle cx="737.6" cy="494.0" r="2.3" fill="#3f2e73"/><circle cx="735.6" cy="487.4" r="2.3" fill="#411863"/><circle cx="736.4" cy="480.8" r="2.3" fill="#421e69"/><circle cx="737.3" cy="474.9" r="2.3" fill="#3f014d"/><circle cx="736.4" cy="469.4" r="2.3" fill="#400f5a"/><circle cx="736.6" cy="463.5" r="2.3" fill="#3d3979"/><circle cx="736.4" cy="457.5" r="2.3" fill="#411762"/><circle cx="737.1" cy="452.0" r="2.3" fill="#3c3d7b"/><circle cx="736.2" cy="445.8" r="2.3" fill="#40125d"/><circle cx="736.9" cy="439.6" r="2.3" fill="#400d58"/><circle cx="736.6" cy="433.6" r="2.3" fill="#3f2e73"/><circle cx="736.6" cy="427.6" r="2.3" fill="#3c3f7c"/><circle cx="736.9" cy="422.1" r="2.3" fill="#39447d"/><circle cx="736.9" cy="416.3" r="2.3" fill="#3d3a7a"/><circle cx="736.7" cy="409.9" r="2.3" fill="#3e3577"/><circle cx="736.9" cy="404.2" r="2.3" fill="#354d7f"/><circle cx="736.9" cy="398.0" r="2.3" fill="#217e81"/><circle cx="736.7" cy="392.0" r="2.3" fill="#3d3979"/><circle cx="736.4" cy="386.3" r="2.3" fill="#364c7f"/><circle cx="736.4" cy="380.1" r="2.3" fill="#227b82"/><circle cx="736.5" cy="374.2" r="2.3" fill="#217e81"/><circle cx="736.6" cy="368.7" r="2.3" fill="#2f5c82"/><circle cx="736.1" cy="362.8" r="2.3" fill="#2b6682"/><circle cx="736.7" cy="356.7" r="2.3" fill="#296982"/><circle cx="736.2" cy="350.6" r="2.3" fill="#208281"/><circle cx="736.9" cy="343.1" r="2.3" fill="#2d6182"/><circle cx="735.6" cy="337.4" r="2.3" fill="#2aa273"/><circle cx="736.4" cy="327.5" r="2.3" fill="#3fb067"/><circle cx="736.0" cy="308.4" r="2.3" fill="#c8d023"/><circle cx="741.9" cy="538.2" r="2.3" fill="#400a55"/><circle cx="742.0" cy="532.2" r="2.3" fill="#3f014d"/><circle cx="742.0" cy="526.2" r="2.3" fill="#411964"/><circle cx="741.2" cy="520.5" r="2.3" fill="#421c67"/><circle cx="741.8" cy="514.7" r="2.3" fill="#411661"/><circle cx="742.2" cy="508.4" r="2.3" fill="#42226c"/><circle cx="741.7" cy="502.2" r="2.3" fill="#402d72"/><circle cx="742.8" cy="496.3" r="2.3" fill="#42246d"/><circle cx="740.9" cy="489.9" r="2.3" fill="#3b3f7c"/><circle cx="741.3" cy="484.3" r="2.3" fill="#3d3b7a"/><circle cx="742.3" cy="472.6" r="2.3" fill="#3e3476"/><circle cx="742.1" cy="466.4" r="2.3" fill="#42226c"/><circle cx="741.9" cy="460.5" r="2.3" fill="#3c3d7b"/><circle cx="741.4" cy="454.6" r="2.3" fill="#421e69"/><circle cx="741.9" cy="448.8" r="2.3" fill="#38467e"/><circle cx="741.8" cy="442.9" r="2.3" fill="#3f0854"/><circle cx="741.7" cy="436.9" r="2.3" fill="#3f2f73"/><circle cx="742.1" cy="431.1" r="2.3" fill="#42216b"/><circle cx="741.5" cy="425.2" r="2.3" fill="#421e69"/><circle cx="742.1" cy="418.9" r="2.3" fill="#400a56"/><circle cx="741.7" cy="413.1" r="2.3" fill="#42216b"/><circle cx="741.9" cy="407.2" r="2.3" fill="#3a437d"/><circle cx="742.1" cy="401.2" r="2.3" fill="#267182"/><circle cx="741.7" cy="395.3" r="2.3" fill="#267182"/><circle cx="741.7" cy="389.5" r="2.3" fill="#354f80"/><circle cx="741.8" cy="383.3" r="2.3" fill="#2f5b82"/><circle cx="741.9" cy="377.4" r="2.3" fill="#1f897f"/><circle cx="741.5" cy="371.2" r="2.3" fill="#276d83"/><circle cx="741.5" cy="365.2" r="2.3" fill="#208081"/><circle cx="742.0" cy="360.0" r="2.3" fill="#1f907d"/><circle cx="741.1" cy="354.0" r="2.3" fill="#296982"/><circle cx="741.3" cy="347.2" r="2.3" fill="#209b79"/><circle cx="743.0" cy="341.9" r="2.3" fill="#276d83"/><circle cx="740.4" cy="336.9" r="2.3" fill="#1f927c"/><circle cx="743.2" cy="305.2" r="2.3" fill="#e9d522"/><circle cx="747.1" cy="535.3" r="2.3" fill="#3f014d"/><circle cx="747.3" cy="528.9" r="2.3" fill="#3f014d"/><circle cx="746.8" cy="523.6" r="2.3" fill="#41256e"/><circle cx="747.3" cy="516.9" r="2.3" fill="#41266e"/><circle cx="747.6" cy="511.0" r="2.3" fill="#3f3174"/><circle cx="746.5" cy="505.3" r="2.3" fill="#42216b"/><circle cx="747.5" cy="498.9" r="2.3" fill="#38477e"/><circle cx="747.6" cy="492.2" r="2.3" fill="#3d3979"/><circle cx="747.8" cy="486.5" r="2.3" fill="#315882"/><circle cx="747.3" cy="481.3" r="2.3" fill="#3d3a7a"/><circle cx="746.6" cy="469.5" r="2.3" fill="#41276f"/><circle cx="747.2" cy="463.4" r="2.3" fill="#3c3e7c"/><circle cx="746.8" cy="457.8" r="2.3" fill="#421e68"/><circle cx="747.4" cy="451.4" r="2.3" fill="#411561"/><circle cx="747.3" cy="445.7" r="2.3" fill="#3f2e73"/><circle cx="747.0" cy="439.7" r="2.3" fill="#3f2e73"/><circle cx="747.2" cy="433.7" r="2.3" fill="#3d3b7a"/><circle cx="746.7" cy="428.0" r="2.3" fill="#41276f"/><circle cx="746.7" cy="421.8" r="2.3" fill="#39467e"/><circle cx="746.7" cy="416.2" r="2.3" fill="#3f3275"/><circle cx="747.2" cy="410.3" r="2.3" fill="#345180"/><circle cx="746.7" cy="404.0" r="2.3" fill="#257382"/><circle cx="746.9" cy="398.1" r="2.3" fill="#267083"/><circle cx="747.1" cy="392.0" r="2.3" fill="#237982"/><circle cx="746.8" cy="386.0" r="2.3" fill="#2f5b82"/><circle cx="747.2" cy="380.5" r="2.3" fill="#266f83"/><circle cx="746.8" cy="374.2" r="2.3" fill="#296a82"/><circle cx="746.7" cy="368.3" r="2.3" fill="#2c6282"/><circle cx="747.3" cy="356.2" r="2.3" fill="#296a82"/><circle cx="747.3" cy="350.3" r="2.3" fill="#27a075"/><circle cx="747.4" cy="337.1" r="2.3" fill="#217d81"/><circle cx="747.9" cy="331.3" r="2.3" fill="#237982"/><circle cx="748.9" cy="308.6" r="2.3" fill="#41b066"/><circle cx="752.3" cy="538.2" r="2.3" fill="#400c57"/><circle cx="751.9" cy="532.2" r="2.3" fill="#3f014d"/><circle cx="752.2" cy="526.4" r="2.3" fill="#421e69"/><circle cx="752.4" cy="520.5" r="2.3" fill="#402970"/><circle cx="752.3" cy="514.8" r="2.3" fill="#400d58"/><circle cx="751.7" cy="508.1" r="2.3" fill="#411560"/><circle cx="751.2" cy="502.9" r="2.3" fill="#3e3376"/><circle cx="752.2" cy="496.2" r="2.3" fill="#3d3979"/><circle cx="752.3" cy="484.4" r="2.3" fill="#3c3f7c"/><circle cx="751.9" cy="478.3" r="2.3" fill="#400d59"/><circle cx="751.6" cy="472.2" r="2.3" fill="#3d3979"/><circle cx="751.7" cy="466.4" r="2.3" fill="#37497f"/><circle cx="752.1" cy="460.3" r="2.3" fill="#3e3376"/><circle cx="751.8" cy="449.0" r="2.3" fill="#3e3577"/><circle cx="752.2" cy="442.5" r="2.3" fill="#41256e"/><circle cx="752.2" cy="436.5" r="2.3" fill="#3b3f7c"/><circle cx="752.3" cy="431.0" r="2.3" fill="#325581"/><circle cx="752.0" cy="424.7" r="2.3" fill="#3e3376"/><circle cx="752.4" cy="419.2" r="2.3" fill="#3d3b7a"/><circle cx="752.4" cy="413.3" r="2.3" fill="#364b7f"/><circle cx="752.4" cy="407.3" r="2.3" fill="#344f80"/><circle cx="752.4" cy="401.0" r="2.3" fill="#335280"/><circle cx="752.2" cy="395.1" r="2.3" fill="#237882"/><circle cx="752.2" cy="389.3" r="2.3" fill="#2d5f82"/><circle cx="752.3" cy="383.6" r="2.3" fill="#208081"/><circle cx="752.0" cy="377.2" r="2.3" fill="#2e5d82"/><circle cx="751.9" cy="371.5" r="2.3" fill="#267182"/><circle cx="751.9" cy="365.1" r="2.3" fill="#217e81"/><circle cx="751.7" cy="359.8" r="2.3" fill="#1f997a"/><circle cx="752.1" cy="347.3" r="2.3" fill="#247682"/><circle cx="752.8" cy="330.9" r="2.3" fill="#1f957c"/><circle cx="757.1" cy="534.9" r="2.3" fill="#3f014d"/><circle cx="757.7" cy="529.4" r="2.3" fill="#42216c"/><circle cx="757.8" cy="516.7" r="2.3" fill="#3f014d"/><circle cx="757.5" cy="511.0" r="2.3" fill="#3f014d"/><circle cx="757.6" cy="505.0" r="2.3" fill="#421d68"/><circle cx="758.5" cy="498.0" r="2.3" fill="#354d7f"/><circle cx="757.6" cy="493.1" r="2.3" fill="#2d6082"/><circle cx="757.5" cy="486.4" r="2.3" fill="#374a7f"/><circle cx="757.4" cy="481.1" r="2.3" fill="#402d72"/><circle cx="757.5" cy="475.1" r="2.3" fill="#402a71"/><circle cx="757.5" cy="469.0" r="2.3" fill="#3f2e73"/><circle cx="757.0" cy="463.6" r="2.3" fill="#3b417d"/><circle cx="757.6" cy="457.3" r="2.3" fill="#42206b"/><circle cx="757.0" cy="446.1" r="2.3" fill="#3f3074"/><circle cx="757.4" cy="440.0" r="2.3" fill="#39467e"/><circle cx="757.6" cy="433.6" r="2.3" fill="#3a427d"/><circle cx="757.5" cy="427.7" r="2.3" fill="#335281"/><circle cx="757.5" cy="421.9" r="2.3" fill="#325481"/><circle cx="757.4" cy="416.3" r="2.3" fill="#3f3074"/><circle cx="757.2" cy="410.2" r="2.3" fill="#3e3778"/><circle cx="757.6" cy="403.9" r="2.3" fill="#237982"/><circle cx="757.6" cy="398.5" r="2.3" fill="#286c83"/><circle cx="757.1" cy="392.3" r="2.3" fill="#296a82"/><circle cx="757.1" cy="386.6" r="2.3" fill="#2b6482"/><circle cx="757.4" cy="380.6" r="2.3" fill="#305882"/><circle cx="757.1" cy="374.0" r="2.3" fill="#208281"/><circle cx="757.4" cy="368.3" r="2.3" fill="#208181"/><circle cx="757.2" cy="361.9" r="2.3" fill="#208181"/><circle cx="756.7" cy="356.3" r="2.3" fill="#2e5d82"/><circle cx="757.4" cy="351.1" r="2.3" fill="#247582"/><circle cx="758.5" cy="345.2" r="2.3" fill="#257282"/><circle cx="757.3" cy="337.5" r="2.3" fill="#1f8b7f"/><circle cx="756.7" cy="319.6" r="2.3" fill="#229c78"/><circle cx="762.4" cy="537.9" r="2.3" fill="#3f014d"/><circle cx="762.5" cy="531.7" r="2.3" fill="#3f0955"/><circle cx="762.5" cy="525.8" r="2.3" fill="#3f014d"/><circle cx="762.2" cy="520.4" r="2.3" fill="#41276f"/><circle cx="762.3" cy="514.2" r="2.3" fill="#421e69"/><circle cx="763.1" cy="508.8" r="2.3" fill="#3a427d"/><circle cx="762.8" cy="503.0" r="2.3" fill="#325481"/><circle cx="762.3" cy="484.9" r="2.3" fill="#412870"/><circle cx="762.3" cy="467.0" r="2.3" fill="#3d3778"/><circle cx="762.5" cy="460.7" r="2.3" fill="#42226c"/><circle cx="762.2" cy="454.5" r="2.3" fill="#421f69"/><circle cx="762.5" cy="448.5" r="2.3" fill="#296982"/><circle cx="762.5" cy="442.5" r="2.3" fill="#2a6682"/><circle cx="762.6" cy="436.9" r="2.3" fill="#37497f"/><circle cx="762.4" cy="430.6" r="2.3" fill="#3a447d"/><circle cx="762.6" cy="425.3" r="2.3" fill="#2f5b82"/><circle cx="762.9" cy="419.1" r="2.3" fill="#305a82"/><circle cx="762.9" cy="412.9" r="2.3" fill="#315782"/><circle cx="762.5" cy="407.4" r="2.3" fill="#267182"/><circle cx="762.4" cy="401.0" r="2.3" fill="#247682"/><circle cx="762.4" cy="395.0" r="2.3" fill="#267083"/><circle cx="762.4" cy="389.3" r="2.3" fill="#2b6382"/><circle cx="762.7" cy="383.1" r="2.3" fill="#296982"/><circle cx="762.3" cy="377.6" r="2.3" fill="#3f2f73"/><circle cx="762.5" cy="371.1" r="2.3" fill="#237782"/><circle cx="762.7" cy="365.7" r="2.3" fill="#1f8b7f"/><circle cx="762.3" cy="359.9" r="2.3" fill="#296982"/><circle cx="762.4" cy="352.9" r="2.3" fill="#2a6682"/><circle cx="763.2" cy="347.7" r="2.3" fill="#1e8581"/><circle cx="761.2" cy="328.6" r="2.3" fill="#1f8e7e"/><circle cx="763.7" cy="322.0" r="2.3" fill="#35a96d"/><circle cx="767.9" cy="534.9" r="2.3" fill="#3f014d"/><circle cx="767.6" cy="529.2" r="2.3" fill="#400e5a"/><circle cx="768.1" cy="523.7" r="2.3" fill="#3f014d"/><circle cx="767.5" cy="517.2" r="2.3" fill="#402e73"/><circle cx="767.8" cy="511.4" r="2.3" fill="#41276f"/><circle cx="767.6" cy="505.9" r="2.3" fill="#3b3f7c"/><circle cx="766.9" cy="498.6" r="2.3" fill="#2a6882"/><circle cx="767.8" cy="493.5" r="2.3" fill="#2d6082"/><circle cx="767.2" cy="486.8" r="2.3" fill="#267182"/><circle cx="768.4" cy="481.0" r="2.3" fill="#2c6282"/><circle cx="768.5" cy="475.5" r="2.3" fill="#38477e"/><circle cx="767.6" cy="470.0" r="2.3" fill="#3f3074"/><circle cx="767.4" cy="463.8" r="2.3" fill="#39457e"/><circle cx="767.9" cy="457.6" r="2.3" fill="#39457e"/><circle cx="767.7" cy="452.1" r="2.3" fill="#3c3e7c"/><circle cx="767.9" cy="445.5" r="2.3" fill="#37487e"/><circle cx="767.6" cy="439.6" r="2.3" fill="#2e5e82"/><circle cx="767.9" cy="433.7" r="2.3" fill="#2e5f82"/><circle cx="767.6" cy="428.2" r="2.3" fill="#315681"/><circle cx="767.6" cy="422.2" r="2.3" fill="#2b6582"/><circle cx="767.8" cy="416.3" r="2.3" fill="#335281"/><circle cx="767.9" cy="410.1" r="2.3" fill="#374a7f"/><circle cx="767.6" cy="404.4" r="2.3" fill="#237782"/><circle cx="768.0" cy="398.4" r="2.3" fill="#1f8b7f"/><circle cx="767.7" cy="391.9" r="2.3" fill="#2aa273"/><circle cx="768.1" cy="385.9" r="2.3" fill="#1f8381"/><circle cx="767.5" cy="380.1" r="2.3" fill="#266f83"/><circle cx="767.5" cy="374.3" r="2.3" fill="#1f957c"/><circle cx="768.1" cy="368.1" r="2.3" fill="#2a6782"/><circle cx="768.1" cy="362.7" r="2.3" fill="#1f997a"/><circle cx="767.7" cy="356.1" r="2.3" fill="#1f8a7f"/><circle cx="768.3" cy="350.4" r="2.3" fill="#1f8d7e"/><circle cx="767.8" cy="343.6" r="2.3" fill="#1e8681"/><circle cx="767.4" cy="337.9" r="2.3" fill="#75c147"/><circle cx="766.9" cy="326.2" r="2.3" fill="#2da471"/><circle cx="772.9" cy="537.9" r="2.3" fill="#41135f"/><circle cx="772.9" cy="531.8" r="2.3" fill="#3f0652"/><circle cx="772.7" cy="526.2" r="2.3" fill="#42216b"/><circle cx="772.9" cy="519.8" r="2.3" fill="#421f6a"/><circle cx="772.5" cy="514.6" r="2.3" fill="#3e3376"/><circle cx="773.2" cy="508.0" r="2.3" fill="#400b57"/><circle cx="773.1" cy="502.0" r="2.3" fill="#38477e"/><circle cx="773.7" cy="496.4" r="2.3" fill="#345080"/><circle cx="773.9" cy="489.9" r="2.3" fill="#3d3879"/><circle cx="773.3" cy="484.3" r="2.3" fill="#3e3376"/><circle cx="773.2" cy="478.8" r="2.3" fill="#3c3c7b"/><circle cx="772.6" cy="472.7" r="2.3" fill="#2e5d82"/><circle cx="773.6" cy="466.6" r="2.3" fill="#3a437d"/><circle cx="772.7" cy="460.3" r="2.3" fill="#3f2e73"/><circle cx="773.0" cy="454.7" r="2.3" fill="#42216b"/><circle cx="772.7" cy="449.1" r="2.3" fill="#39457e"/><circle cx="773.1" cy="443.0" r="2.3" fill="#267083"/><circle cx="772.9" cy="437.1" r="2.3" fill="#3c3e7c"/><circle cx="772.7" cy="430.7" r="2.3" fill="#305a82"/><circle cx="773.2" cy="425.0" r="2.3" fill="#276d83"/><circle cx="772.7" cy="418.9" r="2.3" fill="#1f8e7e"/><circle cx="773.0" cy="413.3" r="2.3" fill="#276f83"/><circle cx="772.8" cy="407.2" r="2.3" fill="#2d6182"/><circle cx="772.9" cy="401.0" r="2.3" fill="#1f8f7e"/><circle cx="772.7" cy="395.0" r="2.3" fill="#247682"/><circle cx="773.2" cy="389.1" r="2.3" fill="#237a82"/><circle cx="772.8" cy="383.5" r="2.3" fill="#1f987a"/><circle cx="772.8" cy="377.3" r="2.3" fill="#1f8f7e"/><circle cx="773.1" cy="371.3" r="2.3" fill="#1f967b"/><circle cx="773.1" cy="365.3" r="2.3" fill="#1f947c"/><circle cx="773.2" cy="359.8" r="2.3" fill="#1f927c"/><circle cx="773.5" cy="353.2" r="2.3" fill="#63bc52"/><circle cx="773.4" cy="335.2" r="2.3" fill="#dcd322"/><circle cx="773.1" cy="329.7" r="2.3" fill="#c0cf23"/><circle cx="773.4" cy="311.7" r="2.3" fill="#42b165"/><circle cx="778.5" cy="535.0" r="2.3" fill="#400c58"/><circle cx="778.2" cy="529.3" r="2.3" fill="#3f024e"/><circle cx="777.7" cy="523.3" r="2.3" fill="#3f0551"/><circle cx="778.5" cy="517.5" r="2.3" fill="#3f3275"/><circle cx="778.6" cy="510.8" r="2.3" fill="#3e3778"/><circle cx="778.5" cy="505.4" r="2.3" fill="#315782"/><circle cx="778.2" cy="498.5" r="2.3" fill="#315682"/><circle cx="778.0" cy="493.5" r="2.3" fill="#257382"/><circle cx="778.0" cy="481.5" r="2.3" fill="#37497f"/><circle cx="778.9" cy="475.2" r="2.3" fill="#38467e"/><circle cx="778.7" cy="469.7" r="2.3" fill="#315882"/><circle cx="778.1" cy="463.2" r="2.3" fill="#3d3b7a"/><circle cx="778.5" cy="457.4" r="2.3" fill="#296a82"/><circle cx="777.8" cy="451.8" r="2.3" fill="#3d3a7a"/><circle cx="778.3" cy="445.6" r="2.3" fill="#2d5f82"/><circle cx="778.0" cy="440.1" r="2.3" fill="#335180"/><circle cx="778.2" cy="433.8" r="2.3" fill="#305882"/><circle cx="778.1" cy="427.8" r="2.3" fill="#2a6682"/><circle cx="778.4" cy="422.0" r="2.3" fill="#305a82"/><circle cx="778.5" cy="416.0" r="2.3" fill="#237882"/><circle cx="778.3" cy="409.8" r="2.3" fill="#266f83"/><circle cx="777.9" cy="404.2" r="2.3" fill="#1f907d"/><circle cx="778.4" cy="398.2" r="2.3" fill="#3bae69"/><circle cx="778.3" cy="392.1" r="2.3" fill="#1f8b7f"/><circle cx="778.5" cy="386.1" r="2.3" fill="#3aac6a"/><circle cx="777.9" cy="380.5" r="2.3" fill="#4cb460"/><circle cx="778.0" cy="374.7" r="2.3" fill="#36aa6c"/><circle cx="778.0" cy="368.1" r="2.3" fill="#5eba55"/><circle cx="778.0" cy="362.2" r="2.3" fill="#73c149"/><circle cx="778.0" cy="356.6" r="2.3" fill="#e9d522"/><circle cx="778.6" cy="350.2" r="2.3" fill="#e9d522"/><circle cx="778.6" cy="332.0" r="2.3" fill="#bdcf23"/><circle cx="778.8" cy="326.6" r="2.3" fill="#cfd122"/><circle cx="779.5" cy="313.3" r="2.3" fill="#e9d522"/><circle cx="783.3" cy="537.9" r="2.3" fill="#3f014d"/><circle cx="783.4" cy="532.4" r="2.3" fill="#411560"/><circle cx="783.5" cy="526.1" r="2.3" fill="#421d68"/><circle cx="783.0" cy="519.9" r="2.3" fill="#3d3879"/><circle cx="783.9" cy="513.6" r="2.3" fill="#400f5b"/><circle cx="784.0" cy="508.1" r="2.3" fill="#37487e"/><circle cx="783.1" cy="502.2" r="2.3" fill="#3d3a7a"/><circle cx="783.8" cy="495.8" r="2.3" fill="#335381"/><circle cx="783.5" cy="489.7" r="2.3" fill="#3c3f7c"/><circle cx="783.8" cy="484.6" r="2.3" fill="#38477e"/><circle cx="782.8" cy="478.7" r="2.3" fill="#364b7f"/><circle cx="783.5" cy="472.3" r="2.3" fill="#3e3476"/><circle cx="783.2" cy="467.1" r="2.3" fill="#2e5e82"/><circle cx="783.4" cy="460.3" r="2.3" fill="#286c83"/><circle cx="783.4" cy="454.7" r="2.3" fill="#2c6382"/><circle cx="783.4" cy="448.4" r="2.3" fill="#3d3b7a"/><circle cx="783.2" cy="442.7" r="2.3" fill="#325681"/><circle cx="783.1" cy="436.7" r="2.3" fill="#257382"/><circle cx="783.1" cy="431.2" r="2.3" fill="#335381"/><circle cx="783.6" cy="425.0" r="2.3" fill="#296a82"/><circle cx="783.2" cy="418.8" r="2.3" fill="#286c83"/><circle cx="783.3" cy="413.1" r="2.3" fill="#257382"/><circle cx="783.5" cy="406.9" r="2.3" fill="#43b164"/><circle cx="783.6" cy="401.3" r="2.3" fill="#1f9a7a"/><circle cx="783.7" cy="394.9" r="2.3" fill="#43b165"/><circle cx="783.5" cy="389.5" r="2.3" fill="#3aac6a"/><circle cx="783.7" cy="383.0" r="2.3" fill="#e9d522"/><circle cx="783.3" cy="377.3" r="2.3" fill="#e9d522"/><circle cx="783.5" cy="371.2" r="2.3" fill="#e9d522"/><circle cx="783.1" cy="365.2" r="2.3" fill="#e2d422"/><circle cx="783.4" cy="347.6" r="2.3" fill="#e9d522"/><circle cx="783.9" cy="319.3" r="2.3" fill="#ddd322"/><circle cx="788.9" cy="535.1" r="2.3" fill="#3f014d"/><circle cx="788.3" cy="529.3" r="2.3" fill="#41286f"/><circle cx="788.9" cy="523.4" r="2.3" fill="#3f0854"/><circle cx="788.5" cy="517.5" r="2.3" fill="#42246d"/><circle cx="789.0" cy="511.3" r="2.3" fill="#3f014d"/><circle cx="788.9" cy="505.0" r="2.3" fill="#3c3d7c"/><circle cx="788.5" cy="498.8" r="2.3" fill="#3c3d7b"/><circle cx="789.4" cy="493.7" r="2.3" fill="#37497e"/><circle cx="788.9" cy="482.1" r="2.3" fill="#3d3879"/><circle cx="788.5" cy="474.9" r="2.3" fill="#3e3577"/><circle cx="789.0" cy="468.9" r="2.3" fill="#402c72"/><circle cx="788.1" cy="463.3" r="2.3" fill="#305882"/><circle cx="788.6" cy="457.5" r="2.3" fill="#3b417d"/><circle cx="788.5" cy="452.0" r="2.3" fill="#2e5d82"/><circle cx="788.4" cy="446.0" r="2.3" fill="#237a82"/><circle cx="788.7" cy="440.0" r="2.3" fill="#5ab957"/><circle cx="788.8" cy="433.7" r="2.3" fill="#62bc53"/><circle cx="788.9" cy="427.8" r="2.3" fill="#48b362"/><circle cx="788.9" cy="421.9" r="2.3" fill="#bacf23"/><circle cx="788.9" cy="416.0" r="2.3" fill="#65bc51"/><circle cx="788.4" cy="410.1" r="2.3" fill="#55b75a"/><circle cx="788.4" cy="404.4" r="2.3" fill="#47b362"/><circle cx="788.5" cy="397.9" r="2.3" fill="#e9d522"/><circle cx="788.9" cy="392.2" r="2.3" fill="#6fc04b"/><circle cx="788.7" cy="386.0" r="2.3" fill="#e9d522"/><circle cx="788.6" cy="380.6" r="2.3" fill="#9bc92f"/><circle cx="788.5" cy="374.4" r="2.3" fill="#e9d522"/><circle cx="788.9" cy="368.4" r="2.3" fill="#67bd50"/><circle cx="789.0" cy="362.7" r="2.3" fill="#e9d522"/><circle cx="788.5" cy="356.8" r="2.3" fill="#e9d522"/><circle cx="788.1" cy="350.4" r="2.3" fill="#97c832"/><circle cx="789.2" cy="345.2" r="2.3" fill="#e9d522"/><circle cx="788.0" cy="338.5" r="2.3" fill="#e9d522"/><circle cx="788.8" cy="332.4" r="2.3" fill="#dbd322"/><circle cx="788.5" cy="327.5" r="2.3" fill="#a3cb2a"/><circle cx="794.1" cy="538.1" r="2.3" fill="#3f024e"/><circle cx="793.9" cy="532.3" r="2.3" fill="#3f014d"/><circle cx="793.7" cy="525.8" r="2.3" fill="#3f014d"/><circle cx="794.0" cy="519.8" r="2.3" fill="#41135e"/><circle cx="793.4" cy="514.0" r="2.3" fill="#3f014d"/><circle cx="793.4" cy="503.1" r="2.3" fill="#2e5d82"/><circle cx="794.7" cy="495.9" r="2.3" fill="#315882"/><circle cx="794.4" cy="490.7" r="2.3" fill="#257282"/><circle cx="793.5" cy="484.0" r="2.3" fill="#354d7f"/><circle cx="794.0" cy="478.9" r="2.3" fill="#3e3577"/><circle cx="793.6" cy="473.1" r="2.3" fill="#3c3d7b"/><circle cx="793.9" cy="466.4" r="2.3" fill="#354e80"/><circle cx="793.6" cy="460.4" r="2.3" fill="#286c83"/><circle cx="794.0" cy="454.6" r="2.3" fill="#286b82"/><circle cx="793.4" cy="448.6" r="2.3" fill="#325481"/><circle cx="793.9" cy="443.0" r="2.3" fill="#2a6882"/><circle cx="794.1" cy="437.0" r="2.3" fill="#219c79"/><circle cx="793.7" cy="430.7" r="2.3" fill="#62bc53"/><circle cx="793.8" cy="425.0" r="2.3" fill="#1f997a"/><circle cx="793.7" cy="418.7" r="2.3" fill="#62bc52"/><circle cx="793.8" cy="413.3" r="2.3" fill="#afcd23"/><circle cx="793.9" cy="406.9" r="2.3" fill="#8fc737"/><circle cx="794.0" cy="401.4" r="2.3" fill="#e9d522"/><circle cx="793.8" cy="395.5" r="2.3" fill="#e9d522"/><circle cx="794.0" cy="389.5" r="2.3" fill="#8ac63a"/><circle cx="793.9" cy="383.4" r="2.3" fill="#6ec04c"/><circle cx="793.6" cy="377.0" r="2.3" fill="#79c245"/><circle cx="793.6" cy="371.2" r="2.3" fill="#90c736"/><circle cx="793.9" cy="365.8" r="2.3" fill="#e9d522"/><circle cx="793.3" cy="359.9" r="2.3" fill="#9fca2c"/><circle cx="793.3" cy="353.7" r="2.3" fill="#e9d522"/><circle cx="793.7" cy="347.7" r="2.3" fill="#e9d522"/><circle cx="793.1" cy="342.1" r="2.3" fill="#e9d522"/><circle cx="793.6" cy="335.5" r="2.3" fill="#e9d522"/><circle cx="793.4" cy="330.2" r="2.3" fill="#e9d522"/><circle cx="794.8" cy="310.2" r="2.3" fill="#e9d522"/><circle cx="798.7" cy="535.1" r="2.3" fill="#3f034f"/><circle cx="799.0" cy="529.1" r="2.3" fill="#3f014d"/><circle cx="799.3" cy="523.6" r="2.3" fill="#421f6a"/><circle cx="799.5" cy="516.8" r="2.3" fill="#3f014d"/><circle cx="798.7" cy="511.2" r="2.3" fill="#41135e"/><circle cx="798.9" cy="505.0" r="2.3" fill="#411762"/><circle cx="799.4" cy="499.4" r="2.3" fill="#3d3a7a"/><circle cx="799.1" cy="493.7" r="2.3" fill="#345080"/><circle cx="799.6" cy="482.1" r="2.3" fill="#38467e"/><circle cx="798.6" cy="474.8" r="2.3" fill="#402b71"/><circle cx="799.1" cy="463.4" r="2.3" fill="#354d7f"/><circle cx="799.5" cy="457.5" r="2.3" fill="#2c6282"/><circle cx="798.7" cy="451.6" r="2.3" fill="#1f8c7f"/><circle cx="798.6" cy="445.4" r="2.3" fill="#267083"/><circle cx="799.2" cy="439.8" r="2.3" fill="#a3cb2a"/><circle cx="799.0" cy="434.1" r="2.3" fill="#32a76f"/><circle cx="798.7" cy="428.0" r="2.3" fill="#269f75"/><circle cx="798.7" cy="422.3" r="2.3" fill="#43b164"/><circle cx="799.3" cy="416.4" r="2.3" fill="#78c245"/><circle cx="799.2" cy="410.3" r="2.3" fill="#e9d522"/><circle cx="798.7" cy="403.9" r="2.3" fill="#a3cb2a"/><circle cx="799.2" cy="398.4" r="2.3" fill="#b8ce23"/><circle cx="798.7" cy="392.5" r="2.3" fill="#c0cf23"/><circle cx="799.1" cy="386.5" r="2.3" fill="#d2d222"/><circle cx="799.1" cy="380.1" r="2.3" fill="#ddd322"/><circle cx="798.7" cy="374.4" r="2.3" fill="#e9d522"/><circle cx="798.8" cy="368.4" r="2.3" fill="#8ac63a"/><circle cx="798.9" cy="362.0" r="2.3" fill="#aacc26"/><circle cx="798.5" cy="356.5" r="2.3" fill="#8bc63a"/><circle cx="798.7" cy="350.7" r="2.3" fill="#e9d522"/><circle cx="799.0" cy="344.1" r="2.3" fill="#e9d522"/><circle cx="798.6" cy="338.5" r="2.3" fill="#aacc26"/><circle cx="799.5" cy="332.9" r="2.3" fill="#d6d222"/><circle cx="799.7" cy="327.2" r="2.3" fill="#c6d023"/><circle cx="797.3" cy="319.9" r="2.3" fill="#e9d522"/><circle cx="804.5" cy="537.8" r="2.3" fill="#3f024e"/><circle cx="803.9" cy="532.2" r="2.3" fill="#41256e"/><circle cx="804.0" cy="526.3" r="2.3" fill="#41266e"/><circle cx="804.2" cy="519.8" r="2.3" fill="#421e68"/><circle cx="804.3" cy="514.5" r="2.3" fill="#3f014d"/><circle cx="804.3" cy="508.3" r="2.3" fill="#412870"/><circle cx="804.3" cy="501.9" r="2.3" fill="#3e3375"/><circle cx="804.8" cy="496.3" r="2.3" fill="#305982"/><circle cx="804.1" cy="489.7" r="2.3" fill="#305a82"/><circle cx="804.0" cy="477.9" r="2.3" fill="#39457e"/><circle cx="803.6" cy="472.4" r="2.3" fill="#42226c"/><circle cx="804.6" cy="466.1" r="2.3" fill="#42226c"/><circle cx="803.7" cy="460.3" r="2.3" fill="#3e3476"/><circle cx="804.4" cy="454.8" r="2.3" fill="#37497e"/><circle cx="804.3" cy="448.9" r="2.3" fill="#247782"/><circle cx="804.4" cy="443.0" r="2.3" fill="#5bb957"/><circle cx="803.9" cy="437.0" r="2.3" fill="#1f927d"/><circle cx="804.2" cy="431.2" r="2.3" fill="#6cbf4d"/><circle cx="804.3" cy="424.8" r="2.3" fill="#c0cf23"/><circle cx="804.1" cy="418.9" r="2.3" fill="#e9d522"/><circle cx="804.3" cy="413.4" r="2.3" fill="#e9d522"/><circle cx="804.4" cy="407.4" r="2.3" fill="#d8d222"/><circle cx="804.1" cy="400.8" r="2.3" fill="#a5cb29"/><circle cx="804.5" cy="395.5" r="2.3" fill="#a4cb29"/><circle cx="804.5" cy="389.5" r="2.3" fill="#e9d522"/><circle cx="803.9" cy="383.5" r="2.3" fill="#b5ce23"/><circle cx="804.2" cy="377.7" r="2.3" fill="#e9d522"/><circle cx="804.2" cy="371.5" r="2.3" fill="#4db55f"/><circle cx="804.5" cy="365.6" r="2.3" fill="#b4ce23"/><circle cx="803.9" cy="353.3" r="2.3" fill="#e0d322"/><circle cx="804.4" cy="348.1" r="2.3" fill="#d1d222"/><circle cx="804.1" cy="341.9" r="2.3" fill="#b2ce23"/><circle cx="803.8" cy="335.4" r="2.3" fill="#75c147"/><circle cx="804.5" cy="329.3" r="2.3" fill="#ced122"/><circle cx="809.3" cy="534.7" r="2.3" fill="#412970"/><circle cx="809.1" cy="529.0" r="2.3" fill="#400e5a"/><circle cx="809.7" cy="523.3" r="2.3" fill="#411863"/><circle cx="809.6" cy="516.9" r="2.3" fill="#42246d"/><circle cx="809.5" cy="511.2" r="2.3" fill="#41256e"/><circle cx="809.1" cy="505.6" r="2.3" fill="#411a65"/><circle cx="809.9" cy="498.9" r="2.3" fill="#305982"/><circle cx="809.6" cy="487.1" r="2.3" fill="#345080"/><circle cx="809.7" cy="475.7" r="2.3" fill="#37497f"/><circle cx="808.8" cy="468.9" r="2.3" fill="#237782"/><circle cx="809.5" cy="463.7" r="2.3" fill="#237882"/><circle cx="809.0" cy="457.2" r="2.3" fill="#2a6782"/><circle cx="809.6" cy="445.4" r="2.3" fill="#217f81"/><circle cx="809.2" cy="439.7" r="2.3" fill="#1f9b79"/><circle cx="809.6" cy="433.7" r="2.3" fill="#34a86d"/><circle cx="809.6" cy="427.7" r="2.3" fill="#48b362"/><circle cx="809.3" cy="422.1" r="2.3" fill="#68bd4f"/><circle cx="809.7" cy="415.7" r="2.3" fill="#259e76"/><circle cx="809.1" cy="410.0" r="2.3" fill="#5bb957"/><circle cx="809.4" cy="404.3" r="2.3" fill="#e9d522"/><circle cx="809.2" cy="398.0" r="2.3" fill="#e8d422"/><circle cx="809.1" cy="391.9" r="2.3" fill="#aacc25"/><circle cx="809.4" cy="386.0" r="2.3" fill="#e9d522"/><circle cx="809.6" cy="380.4" r="2.3" fill="#e9d522"/><circle cx="809.1" cy="374.7" r="2.3" fill="#63bc52"/><circle cx="809.2" cy="368.2" r="2.3" fill="#e9d522"/><circle cx="809.1" cy="362.9" r="2.3" fill="#b7ce23"/><circle cx="809.7" cy="356.1" r="2.3" fill="#a3cb2a"/><circle cx="809.6" cy="350.4" r="2.3" fill="#e7d422"/><circle cx="810.1" cy="344.6" r="2.3" fill="#dbd322"/><circle cx="809.4" cy="338.0" r="2.3" fill="#dfd322"/><circle cx="809.7" cy="332.8" r="2.3" fill="#ded322"/><circle cx="809.6" cy="326.3" r="2.3" fill="#e9d522"/><circle cx="814.5" cy="538.2" r="2.3" fill="#400a56"/><circle cx="814.9" cy="531.8" r="2.3" fill="#40105c"/><circle cx="814.3" cy="526.1" r="2.3" fill="#41145f"/><circle cx="814.7" cy="520.5" r="2.3" fill="#421e69"/><circle cx="814.7" cy="513.9" r="2.3" fill="#42246e"/><circle cx="814.6" cy="508.6" r="2.3" fill="#42206b"/><circle cx="815.3" cy="502.5" r="2.3" fill="#3c3c7b"/><circle cx="815.3" cy="496.3" r="2.3" fill="#2d5f82"/><circle cx="815.2" cy="490.2" r="2.3" fill="#3f3175"/><circle cx="813.7" cy="484.2" r="2.3" fill="#354d7f"/><circle cx="815.2" cy="477.6" r="2.3" fill="#3d3b7a"/><circle cx="813.9" cy="472.1" r="2.3" fill="#3b407c"/><circle cx="815.4" cy="466.0" r="2.3" fill="#2c6282"/><circle cx="815.0" cy="460.2" r="2.3" fill="#267182"/><circle cx="814.3" cy="454.8" r="2.3" fill="#354f80"/><circle cx="814.8" cy="449.1" r="2.3" fill="#208281"/><circle cx="814.4" cy="443.1" r="2.3" fill="#1f927c"/><circle cx="814.3" cy="436.5" r="2.3" fill="#39ac6b"/><circle cx="814.5" cy="431.2" r="2.3" fill="#5cb956"/><circle cx="814.8" cy="425.2" r="2.3" fill="#27a075"/><circle cx="814.6" cy="418.7" r="2.3" fill="#4bb460"/><circle cx="814.8" cy="413.3" r="2.3" fill="#9eca2d"/><circle cx="814.4" cy="406.8" r="2.3" fill="#82c43f"/><circle cx="814.7" cy="401.0" r="2.3" fill="#2ba372"/><circle cx="814.5" cy="395.2" r="2.3" fill="#83c43e"/><circle cx="814.7" cy="389.2" r="2.3" fill="#bacf23"/><circle cx="814.8" cy="383.0" r="2.3" fill="#79c245"/><circle cx="814.7" cy="377.1" r="2.3" fill="#e5d422"/><circle cx="814.8" cy="371.2" r="2.3" fill="#4eb55e"/><circle cx="814.5" cy="365.8" r="2.3" fill="#e9d522"/><circle cx="814.3" cy="359.8" r="2.3" fill="#9cc92e"/><circle cx="814.2" cy="353.2" r="2.3" fill="#e9d522"/><circle cx="814.3" cy="347.1" r="2.3" fill="#e9d522"/><circle cx="815.2" cy="341.8" r="2.3" fill="#e9d522"/><circle cx="814.9" cy="335.6" r="2.3" fill="#e9d522"/><circle cx="814.8" cy="329.3" r="2.3" fill="#e9d522"/><circle cx="815.8" cy="324.3" r="2.3" fill="#96c832"/><circle cx="815.6" cy="311.2" r="2.3" fill="#a0ca2c"/><circle cx="814.9" cy="304.8" r="2.3" fill="#e9d522"/><circle cx="819.6" cy="534.7" r="2.3" fill="#3f0753"/><circle cx="819.6" cy="529.2" r="2.3" fill="#411560"/><circle cx="819.9" cy="523.5" r="2.3" fill="#41145f"/><circle cx="819.5" cy="517.5" r="2.3" fill="#42246d"/><circle cx="819.8" cy="511.1" r="2.3" fill="#421e69"/><circle cx="819.8" cy="505.1" r="2.3" fill="#3e3677"/><circle cx="819.2" cy="499.5" r="2.3" fill="#3b407d"/><circle cx="820.1" cy="493.2" r="2.3" fill="#3e3577"/><circle cx="819.0" cy="480.8" r="2.3" fill="#37487e"/><circle cx="820.4" cy="474.8" r="2.3" fill="#3b3f7c"/><circle cx="820.1" cy="469.7" r="2.3" fill="#37487e"/><circle cx="820.0" cy="463.2" r="2.3" fill="#305982"/><circle cx="819.9" cy="457.9" r="2.3" fill="#325681"/><circle cx="820.2" cy="451.4" r="2.3" fill="#2f5c82"/><circle cx="819.5" cy="445.5" r="2.3" fill="#1f937c"/><circle cx="820.0" cy="440.0" r="2.3" fill="#37aa6c"/><circle cx="819.7" cy="434.0" r="2.3" fill="#217f81"/><circle cx="819.9" cy="427.6" r="2.3" fill="#38ab6b"/><circle cx="820.1" cy="422.2" r="2.3" fill="#30a670"/><circle cx="819.6" cy="415.8" r="2.3" fill="#1f8a7f"/><circle cx="820.0" cy="410.1" r="2.3" fill="#2ca372"/><circle cx="819.5" cy="403.8" r="2.3" fill="#1f8f7e"/><circle cx="819.9" cy="398.0" r="2.3" fill="#40b066"/><circle cx="819.8" cy="392.4" r="2.3" fill="#2ba273"/><circle cx="820.1" cy="386.6" r="2.3" fill="#1f987a"/><circle cx="819.5" cy="380.3" r="2.3" fill="#53b65c"/><circle cx="820.1" cy="374.7" r="2.3" fill="#76c247"/><circle cx="819.8" cy="368.5" r="2.3" fill="#c0cf23"/><circle cx="820.1" cy="362.4" r="2.3" fill="#e9d522"/><circle cx="819.7" cy="356.1" r="2.3" fill="#e9d522"/><circle cx="820.1" cy="350.2" r="2.3" fill="#d3d222"/><circle cx="819.8" cy="345.1" r="2.3" fill="#e9d522"/><circle cx="819.7" cy="338.4" r="2.3" fill="#e9d522"/><circle cx="819.4" cy="333.4" r="2.3" fill="#e9d522"/><circle cx="820.4" cy="327.3" r="2.3" fill="#e9d522"/><circle cx="825.0" cy="538.2" r="2.3" fill="#3f0551"/><circle cx="825.3" cy="531.8" r="2.3" fill="#3f014d"/><circle cx="824.9" cy="525.9" r="2.3" fill="#40115d"/><circle cx="824.8" cy="520.4" r="2.3" fill="#3f3074"/><circle cx="824.8" cy="514.4" r="2.3" fill="#421d67"/><circle cx="825.2" cy="508.5" r="2.3" fill="#3e3677"/><circle cx="825.2" cy="503.2" r="2.3" fill="#364b7f"/><circle cx="824.7" cy="484.2" r="2.3" fill="#38467e"/><circle cx="824.7" cy="477.6" r="2.3" fill="#325581"/><circle cx="825.6" cy="472.0" r="2.3" fill="#237982"/><circle cx="825.5" cy="460.9" r="2.3" fill="#2a6682"/><circle cx="825.1" cy="454.6" r="2.3" fill="#3b417d"/><circle cx="824.7" cy="448.8" r="2.3" fill="#2f5a82"/><circle cx="825.2" cy="443.0" r="2.3" fill="#269f76"/><circle cx="824.7" cy="437.2" r="2.3" fill="#1f8381"/><circle cx="824.7" cy="431.2" r="2.3" fill="#2c6282"/><circle cx="825.0" cy="424.8" r="2.3" fill="#1f957b"/><circle cx="824.8" cy="418.9" r="2.3" fill="#286c83"/><circle cx="824.7" cy="412.9" r="2.3" fill="#5dba56"/><circle cx="824.7" cy="406.8" r="2.3" fill="#1f9b79"/><circle cx="824.8" cy="401.1" r="2.3" fill="#267082"/><circle cx="824.9" cy="395.3" r="2.3" fill="#34a96d"/><circle cx="825.0" cy="389.5" r="2.3" fill="#1f917d"/><circle cx="825.1" cy="383.0" r="2.3" fill="#1f8281"/><circle cx="825.2" cy="377.4" r="2.3" fill="#208181"/><circle cx="825.1" cy="371.2" r="2.3" fill="#31a66f"/><circle cx="824.9" cy="365.8" r="2.3" fill="#44b164"/><circle cx="825.1" cy="353.4" r="2.3" fill="#77c246"/><circle cx="824.9" cy="347.0" r="2.3" fill="#4ab361"/><circle cx="824.3" cy="336.3" r="2.3" fill="#c6d023"/><circle cx="826.6" cy="325.9" r="2.3" fill="#9fca2c"/><circle cx="824.2" cy="305.2" r="2.3" fill="#e9d522"/><circle cx="830.0" cy="535.1" r="2.3" fill="#3f014d"/><circle cx="830.5" cy="529.4" r="2.3" fill="#400d59"/><circle cx="830.4" cy="522.9" r="2.3" fill="#3f2e73"/><circle cx="830.5" cy="517.1" r="2.3" fill="#421c66"/><circle cx="830.0" cy="510.9" r="2.3" fill="#3f0450"/><circle cx="830.5" cy="505.3" r="2.3" fill="#3d3979"/><circle cx="829.4" cy="493.7" r="2.3" fill="#345180"/><circle cx="829.6" cy="486.9" r="2.3" fill="#3d3a7a"/><circle cx="830.2" cy="481.4" r="2.3" fill="#325581"/><circle cx="830.7" cy="476.1" r="2.3" fill="#315782"/><circle cx="831.1" cy="468.9" r="2.3" fill="#3c3e7c"/><circle cx="830.4" cy="463.8" r="2.3" fill="#335381"/><circle cx="830.5" cy="458.1" r="2.3" fill="#239d77"/><circle cx="829.8" cy="451.3" r="2.3" fill="#208181"/><circle cx="830.4" cy="445.4" r="2.3" fill="#325681"/><circle cx="830.1" cy="440.0" r="2.3" fill="#1e8681"/><circle cx="830.0" cy="433.6" r="2.3" fill="#2b6382"/><circle cx="830.0" cy="427.7" r="2.3" fill="#1f927c"/><circle cx="830.0" cy="421.8" r="2.3" fill="#257482"/><circle cx="830.2" cy="416.4" r="2.3" fill="#1f8581"/><circle cx="830.5" cy="410.1" r="2.3" fill="#1f8e7e"/><circle cx="830.0" cy="403.8" r="2.3" fill="#28a174"/><circle cx="830.5" cy="398.1" r="2.3" fill="#247482"/><circle cx="830.3" cy="392.1" r="2.3" fill="#1f977b"/><circle cx="830.5" cy="386.3" r="2.3" fill="#3fb067"/><circle cx="830.1" cy="380.4" r="2.3" fill="#1e8780"/><circle cx="830.1" cy="374.3" r="2.3" fill="#217d81"/><circle cx="830.4" cy="368.7" r="2.3" fill="#2da471"/><circle cx="830.0" cy="363.0" r="2.3" fill="#1f967b"/><circle cx="830.0" cy="357.2" r="2.3" fill="#227c82"/><circle cx="830.1" cy="350.1" r="2.3" fill="#8cc639"/><circle cx="829.7" cy="338.6" r="2.3" fill="#bfcf23"/><circle cx="829.8" cy="332.8" r="2.3" fill="#d2d222"/><circle cx="831.0" cy="312.8" r="2.3" fill="#8dc638"/><circle cx="828.7" cy="307.8" r="2.3" fill="#e9d522"/><circle cx="835.6" cy="538.2" r="2.3" fill="#400a55"/><circle cx="835.4" cy="532.3" r="2.3" fill="#42236d"/><circle cx="835.2" cy="526.3" r="2.3" fill="#412970"/><circle cx="835.3" cy="519.9" r="2.3" fill="#3d3979"/><circle cx="835.7" cy="513.9" r="2.3" fill="#411561"/><circle cx="835.1" cy="507.9" r="2.3" fill="#3f2e73"/><circle cx="834.6" cy="501.6" r="2.3" fill="#41276f"/><circle cx="835.2" cy="496.1" r="2.3" fill="#364c7f"/><circle cx="835.1" cy="473.1" r="2.3" fill="#2a6882"/><circle cx="836.1" cy="466.8" r="2.3" fill="#3e3577"/><circle cx="835.2" cy="460.6" r="2.3" fill="#237982"/><circle cx="835.7" cy="455.1" r="2.3" fill="#2b6582"/><circle cx="835.3" cy="448.9" r="2.3" fill="#276f83"/><circle cx="835.6" cy="443.0" r="2.3" fill="#247782"/><circle cx="835.3" cy="437.0" r="2.3" fill="#217d81"/><circle cx="835.6" cy="430.8" r="2.3" fill="#49b361"/><circle cx="835.5" cy="424.8" r="2.3" fill="#276f83"/><circle cx="835.2" cy="419.3" r="2.3" fill="#1e8980"/><circle cx="835.7" cy="413.2" r="2.3" fill="#325481"/><circle cx="835.6" cy="406.9" r="2.3" fill="#257382"/><circle cx="835.4" cy="401.0" r="2.3" fill="#247582"/><circle cx="835.1" cy="395.5" r="2.3" fill="#217e81"/><circle cx="835.5" cy="389.5" r="2.3" fill="#267083"/><circle cx="835.3" cy="383.6" r="2.3" fill="#269f75"/><circle cx="835.2" cy="377.1" r="2.3" fill="#1f927c"/><circle cx="835.4" cy="371.6" r="2.3" fill="#217d81"/><circle cx="835.1" cy="365.4" r="2.3" fill="#33a86e"/><circle cx="835.0" cy="359.7" r="2.3" fill="#1e8681"/><circle cx="835.6" cy="336.5" r="2.3" fill="#3fb067"/><circle cx="840.3" cy="535.2" r="2.3" fill="#41145f"/><circle cx="840.9" cy="529.1" r="2.3" fill="#42226c"/><circle cx="840.3" cy="523.2" r="2.3" fill="#411762"/><circle cx="840.3" cy="517.2" r="2.3" fill="#3e3677"/><circle cx="840.8" cy="511.5" r="2.3" fill="#39447d"/><circle cx="840.8" cy="505.4" r="2.3" fill="#3a437d"/><circle cx="841.6" cy="498.6" r="2.3" fill="#2d6182"/><circle cx="839.9" cy="493.4" r="2.3" fill="#296882"/><circle cx="839.8" cy="488.4" r="2.3" fill="#402c72"/><circle cx="841.5" cy="480.9" r="2.3" fill="#305a82"/><circle cx="841.7" cy="470.2" r="2.3" fill="#37497f"/><circle cx="840.5" cy="463.2" r="2.3" fill="#335281"/><circle cx="840.9" cy="457.8" r="2.3" fill="#276e83"/><circle cx="840.9" cy="452.2" r="2.3" fill="#2d6182"/><circle cx="840.3" cy="445.9" r="2.3" fill="#2e5f82"/><circle cx="840.3" cy="439.8" r="2.3" fill="#267182"/><circle cx="840.4" cy="433.8" r="2.3" fill="#325581"/><circle cx="840.4" cy="428.2" r="2.3" fill="#276e83"/><circle cx="840.9" cy="422.3" r="2.3" fill="#1f8e7e"/><circle cx="840.5" cy="416.1" r="2.3" fill="#1f927c"/><circle cx="840.3" cy="409.9" r="2.3" fill="#1e8880"/><circle cx="840.6" cy="404.4" r="2.3" fill="#1e8780"/><circle cx="840.5" cy="398.5" r="2.3" fill="#2b6482"/><circle cx="840.7" cy="392.1" r="2.3" fill="#2c6282"/><circle cx="840.5" cy="386.6" r="2.3" fill="#237982"/><circle cx="840.3" cy="380.4" r="2.3" fill="#41b166"/><circle cx="840.6" cy="374.1" r="2.3" fill="#1e8880"/><circle cx="840.9" cy="368.8" r="2.3" fill="#2f5b82"/><circle cx="840.9" cy="361.7" r="2.3" fill="#1f967b"/><circle cx="840.7" cy="349.8" r="2.3" fill="#1f8b7f"/><circle cx="841.7" cy="344.9" r="2.3" fill="#1e8780"/><circle cx="839.8" cy="339.6" r="2.3" fill="#1f8381"/><circle cx="841.7" cy="332.1" r="2.3" fill="#1f997a"/><circle cx="841.8" cy="326.5" r="2.3" fill="#276e83"/><circle cx="842.0" cy="316.9" r="2.3" fill="#36aa6c"/><circle cx="845.7" cy="538.1" r="2.3" fill="#411964"/><circle cx="846.1" cy="532.4" r="2.3" fill="#3f014d"/><circle cx="846.0" cy="526.1" r="2.3" fill="#400a56"/><circle cx="846.1" cy="520.0" r="2.3" fill="#3f3275"/><circle cx="845.9" cy="514.4" r="2.3" fill="#3d3b7a"/><circle cx="845.8" cy="508.3" r="2.3" fill="#412970"/><circle cx="844.8" cy="494.9" r="2.3" fill="#364b7f"/><circle cx="845.2" cy="485.4" r="2.3" fill="#315882"/><circle cx="845.9" cy="460.4" r="2.3" fill="#1f8a7f"/><circle cx="845.4" cy="454.5" r="2.3" fill="#1f8b7f"/><circle cx="845.6" cy="448.8" r="2.3" fill="#1f8381"/><circle cx="845.6" cy="442.6" r="2.3" fill="#276d83"/><circle cx="845.9" cy="436.8" r="2.3" fill="#1f8980"/><circle cx="845.5" cy="430.6" r="2.3" fill="#1f8980"/><circle cx="845.9" cy="424.6" r="2.3" fill="#2f5b82"/><circle cx="845.7" cy="418.7" r="2.3" fill="#247482"/><circle cx="845.6" cy="413.2" r="2.3" fill="#345080"/><circle cx="845.9" cy="406.8" r="2.3" fill="#257482"/><circle cx="845.7" cy="400.9" r="2.3" fill="#276d83"/><circle cx="845.9" cy="395.5" r="2.3" fill="#2c6382"/><circle cx="845.6" cy="389.2" r="2.3" fill="#227a82"/><circle cx="845.8" cy="383.1" r="2.3" fill="#208281"/><circle cx="846.1" cy="377.1" r="2.3" fill="#257382"/><circle cx="845.8" cy="371.2" r="2.3" fill="#2e5d82"/><circle cx="845.7" cy="365.8" r="2.3" fill="#315782"/><circle cx="845.8" cy="359.0" r="2.3" fill="#2a6782"/><circle cx="846.1" cy="353.7" r="2.3" fill="#247682"/><circle cx="846.5" cy="342.6" r="2.3" fill="#1f8a7f"/><circle cx="846.1" cy="336.4" r="2.3" fill="#1f897f"/><circle cx="846.4" cy="329.3" r="2.3" fill="#247782"/><circle cx="847.4" cy="312.5" r="2.3" fill="#2b6482"/><circle cx="847.4" cy="306.9" r="2.3" fill="#1e8780"/><circle cx="850.7" cy="534.7" r="2.3" fill="#411560"/><circle cx="851.3" cy="529.4" r="2.3" fill="#3f0652"/><circle cx="851.3" cy="523.2" r="2.3" fill="#38487e"/><circle cx="851.1" cy="517.5" r="2.3" fill="#402970"/><circle cx="851.0" cy="511.1" r="2.3" fill="#3e3476"/><circle cx="851.0" cy="505.3" r="2.3" fill="#37497f"/><circle cx="851.1" cy="474.7" r="2.3" fill="#2f5c82"/><circle cx="851.3" cy="463.6" r="2.3" fill="#2c6382"/><circle cx="850.9" cy="457.5" r="2.3" fill="#269f75"/><circle cx="851.2" cy="452.0" r="2.3" fill="#364b7f"/><circle cx="851.0" cy="445.6" r="2.3" fill="#247582"/><circle cx="850.9" cy="440.0" r="2.3" fill="#267083"/><circle cx="851.2" cy="434.0" r="2.3" fill="#2c6282"/><circle cx="851.1" cy="428.1" r="2.3" fill="#267182"/><circle cx="850.7" cy="422.3" r="2.3" fill="#237a82"/><circle cx="851.1" cy="416.4" r="2.3" fill="#237782"/><circle cx="850.7" cy="410.3" r="2.3" fill="#2d6082"/><circle cx="851.0" cy="404.0" r="2.3" fill="#2b6682"/><circle cx="851.3" cy="398.4" r="2.3" fill="#227b82"/><circle cx="851.0" cy="392.2" r="2.3" fill="#364b7f"/><circle cx="850.8" cy="386.1" r="2.3" fill="#1f917d"/><circle cx="851.2" cy="380.2" r="2.3" fill="#247682"/><circle cx="850.8" cy="374.6" r="2.3" fill="#3d3778"/><circle cx="850.7" cy="368.7" r="2.3" fill="#364b7f"/><circle cx="850.6" cy="361.7" r="2.3" fill="#286c83"/><circle cx="850.8" cy="355.8" r="2.3" fill="#354e80"/><circle cx="851.3" cy="350.8" r="2.3" fill="#1f8381"/><circle cx="851.3" cy="344.0" r="2.3" fill="#227b82"/><circle cx="851.3" cy="333.0" r="2.3" fill="#219c78"/><circle cx="851.4" cy="327.1" r="2.3" fill="#2a6782"/><circle cx="850.2" cy="320.5" r="2.3" fill="#267182"/><circle cx="856.5" cy="537.8" r="2.3" fill="#41135e"/><circle cx="856.1" cy="531.7" r="2.3" fill="#3f0652"/><circle cx="856.4" cy="525.9" r="2.3" fill="#42226c"/><circle cx="855.9" cy="520.1" r="2.3" fill="#421b66"/><circle cx="856.3" cy="514.4" r="2.3" fill="#39447d"/><circle cx="856.4" cy="508.0" r="2.3" fill="#402c72"/><circle cx="857.1" cy="502.1" r="2.3" fill="#315882"/><circle cx="854.4" cy="488.9" r="2.3" fill="#315782"/><circle cx="856.2" cy="483.7" r="2.3" fill="#364b7f"/><circle cx="856.2" cy="472.5" r="2.3" fill="#3e3677"/><circle cx="857.4" cy="465.6" r="2.3" fill="#2a6782"/><circle cx="856.3" cy="460.7" r="2.3" fill="#2f5b82"/><circle cx="855.8" cy="455.1" r="2.3" fill="#296882"/><circle cx="856.2" cy="448.6" r="2.3" fill="#237882"/><circle cx="856.4" cy="442.7" r="2.3" fill="#3c3d7b"/><circle cx="856.1" cy="436.6" r="2.3" fill="#1f8b7f"/><circle cx="856.3" cy="430.9" r="2.3" fill="#2c6282"/><circle cx="856.2" cy="425.2" r="2.3" fill="#237982"/><circle cx="856.4" cy="418.7" r="2.3" fill="#227b82"/><circle cx="856.3" cy="413.0" r="2.3" fill="#2ea571"/><circle cx="856.0" cy="406.9" r="2.3" fill="#325581"/><circle cx="856.3" cy="400.9" r="2.3" fill="#37487e"/><circle cx="856.0" cy="395.2" r="2.3" fill="#325581"/><circle cx="856.2" cy="389.3" r="2.3" fill="#247582"/><circle cx="856.1" cy="383.4" r="2.3" fill="#3c3f7c"/><circle cx="856.3" cy="377.2" r="2.3" fill="#345080"/><circle cx="856.4" cy="371.4" r="2.3" fill="#305a82"/><circle cx="856.5" cy="365.7" r="2.3" fill="#374a7f"/><circle cx="855.6" cy="359.7" r="2.3" fill="#1f917d"/><circle cx="855.8" cy="348.1" r="2.3" fill="#257282"/><circle cx="857.2" cy="341.7" r="2.3" fill="#1f9a7a"/><circle cx="857.2" cy="336.3" r="2.3" fill="#247682"/><circle cx="857.9" cy="317.2" r="2.3" fill="#1e8681"/><circle cx="854.4" cy="312.4" r="2.3" fill="#247582"/><circle cx="854.7" cy="305.1" r="2.3" fill="#296982"/><circle cx="861.7" cy="535.4" r="2.3" fill="#402c72"/><circle cx="861.6" cy="528.9" r="2.3" fill="#3f3074"/><circle cx="861.2" cy="522.8" r="2.3" fill="#421c67"/><circle cx="861.4" cy="517.3" r="2.3" fill="#3b417d"/><circle cx="861.4" cy="511.4" r="2.3" fill="#3e3678"/><circle cx="861.2" cy="505.6" r="2.3" fill="#39457e"/><circle cx="862.1" cy="493.0" r="2.3" fill="#227b82"/><circle cx="860.9" cy="487.5" r="2.3" fill="#345080"/><circle cx="861.3" cy="458.0" r="2.3" fill="#2a6682"/><circle cx="861.2" cy="451.9" r="2.3" fill="#335281"/><circle cx="861.1" cy="445.7" r="2.3" fill="#296a82"/><circle cx="861.6" cy="439.7" r="2.3" fill="#247482"/><circle cx="861.5" cy="433.6" r="2.3" fill="#354f80"/><circle cx="861.3" cy="428.2" r="2.3" fill="#276f83"/><circle cx="861.4" cy="422.1" r="2.3" fill="#38477e"/><circle cx="861.2" cy="415.7" r="2.3" fill="#345180"/><circle cx="861.2" cy="410.3" r="2.3" fill="#257282"/><circle cx="861.2" cy="403.9" r="2.3" fill="#335280"/><circle cx="861.4" cy="398.1" r="2.3" fill="#335180"/><circle cx="861.6" cy="391.9" r="2.3" fill="#2c6282"/><circle cx="861.6" cy="386.3" r="2.3" fill="#344f80"/><circle cx="861.2" cy="380.5" r="2.3" fill="#38487e"/><circle cx="861.5" cy="374.5" r="2.3" fill="#266f83"/><circle cx="861.4" cy="368.1" r="2.3" fill="#3a437d"/><circle cx="861.5" cy="362.8" r="2.3" fill="#3a437d"/><circle cx="861.9" cy="357.1" r="2.3" fill="#267083"/><circle cx="861.0" cy="349.9" r="2.3" fill="#296982"/><circle cx="860.0" cy="327.6" r="2.3" fill="#315681"/><circle cx="863.3" cy="309.0" r="2.3" fill="#3daf68"/><circle cx="866.6" cy="538.2" r="2.3" fill="#411460"/><circle cx="866.5" cy="532.3" r="2.3" fill="#3f014d"/><circle cx="866.7" cy="526.1" r="2.3" fill="#400d59"/><circle cx="866.7" cy="520.5" r="2.3" fill="#3b407c"/><circle cx="866.5" cy="514.6" r="2.3" fill="#39457e"/><circle cx="866.7" cy="508.6" r="2.3" fill="#37497f"/><circle cx="865.8" cy="497.2" r="2.3" fill="#2e5d82"/><circle cx="866.4" cy="472.0" r="2.3" fill="#3f3074"/><circle cx="866.3" cy="460.8" r="2.3" fill="#364c7f"/><circle cx="866.6" cy="455.0" r="2.3" fill="#227c82"/><circle cx="866.8" cy="448.3" r="2.3" fill="#2e5e82"/><circle cx="866.5" cy="442.6" r="2.3" fill="#305882"/><circle cx="866.6" cy="436.8" r="2.3" fill="#286b83"/><circle cx="866.9" cy="430.8" r="2.3" fill="#286b82"/><circle cx="866.4" cy="425.3" r="2.3" fill="#354d7f"/><circle cx="866.5" cy="419.2" r="2.3" fill="#257482"/><circle cx="866.3" cy="412.7" r="2.3" fill="#3f2f73"/><circle cx="866.6" cy="407.3" r="2.3" fill="#2d6082"/><circle cx="866.4" cy="401.2" r="2.3" fill="#421e69"/><circle cx="866.4" cy="395.2" r="2.3" fill="#2f5b82"/><circle cx="866.3" cy="389.2" r="2.3" fill="#325581"/><circle cx="866.7" cy="383.0" r="2.3" fill="#3b417d"/><circle cx="866.3" cy="377.2" r="2.3" fill="#37487e"/><circle cx="866.3" cy="371.4" r="2.3" fill="#38477e"/><circle cx="866.4" cy="365.3" r="2.3" fill="#305a82"/><circle cx="866.6" cy="359.1" r="2.3" fill="#2e5f82"/><circle cx="866.5" cy="353.3" r="2.3" fill="#2d6082"/><circle cx="866.9" cy="347.2" r="2.3" fill="#1f947c"/><circle cx="866.8" cy="336.5" r="2.3" fill="#1f987a"/><circle cx="867.4" cy="305.5" r="2.3" fill="#78c245"/><circle cx="872.1" cy="534.9" r="2.3" fill="#402b71"/><circle cx="872.1" cy="528.9" r="2.3" fill="#411561"/><circle cx="871.9" cy="522.8" r="2.3" fill="#364c7f"/><circle cx="871.9" cy="516.8" r="2.3" fill="#39447d"/><circle cx="871.5" cy="511.0" r="2.3" fill="#3b407c"/><circle cx="872.0" cy="504.9" r="2.3" fill="#364c7f"/><circle cx="871.7" cy="494.0" r="2.3" fill="#2d6082"/><circle cx="873.7" cy="487.0" r="2.3" fill="#344f80"/><circle cx="871.4" cy="482.1" r="2.3" fill="#3c3f7c"/><circle cx="872.0" cy="475.6" r="2.3" fill="#411762"/><circle cx="871.7" cy="470.6" r="2.3" fill="#3d3b7a"/><circle cx="872.2" cy="463.9" r="2.3" fill="#2c6182"/><circle cx="871.6" cy="457.9" r="2.3" fill="#3c3d7b"/><circle cx="872.1" cy="452.0" r="2.3" fill="#335180"/><circle cx="872.0" cy="445.5" r="2.3" fill="#2f5c82"/><circle cx="871.7" cy="439.5" r="2.3" fill="#2c6382"/><circle cx="872.0" cy="433.7" r="2.3" fill="#305982"/><circle cx="871.7" cy="427.8" r="2.3" fill="#3b417d"/><circle cx="871.5" cy="421.9" r="2.3" fill="#364d7f"/><circle cx="871.7" cy="415.7" r="2.3" fill="#345180"/><circle cx="871.6" cy="409.9" r="2.3" fill="#325481"/><circle cx="871.9" cy="404.1" r="2.3" fill="#39457e"/><circle cx="871.7" cy="398.5" r="2.3" fill="#40115c"/><circle cx="871.5" cy="392.5" r="2.3" fill="#2d5f82"/><circle cx="871.9" cy="386.5" r="2.3" fill="#3e3577"/><circle cx="871.6" cy="380.4" r="2.3" fill="#412870"/><circle cx="871.7" cy="374.2" r="2.3" fill="#3d3b7a"/><circle cx="871.9" cy="368.5" r="2.3" fill="#3f2e73"/><circle cx="871.9" cy="356.3" r="2.3" fill="#296a82"/><circle cx="871.6" cy="350.8" r="2.3" fill="#305982"/><circle cx="872.2" cy="339.7" r="2.3" fill="#269f75"/><circle cx="872.4" cy="332.3" r="2.3" fill="#1f8c7e"/><circle cx="871.2" cy="327.2" r="2.3" fill="#70c04b"/><circle cx="871.8" cy="320.3" r="2.3" fill="#96c832"/><circle cx="877.2" cy="538.1" r="2.3" fill="#421f69"/><circle cx="876.7" cy="532.0" r="2.3" fill="#3e3376"/><circle cx="877.0" cy="526.0" r="2.3" fill="#3d3778"/><circle cx="877.3" cy="520.2" r="2.3" fill="#3d3979"/><circle cx="876.8" cy="514.2" r="2.3" fill="#3f3074"/><circle cx="876.8" cy="508.4" r="2.3" fill="#2d6082"/><circle cx="876.7" cy="497.7" r="2.3" fill="#345180"/><circle cx="876.6" cy="471.8" r="2.3" fill="#3f014e"/><circle cx="877.0" cy="460.5" r="2.3" fill="#3f3275"/><circle cx="877.2" cy="455.0" r="2.3" fill="#364c7f"/><circle cx="876.6" cy="448.8" r="2.3" fill="#267083"/><circle cx="876.7" cy="443.1" r="2.3" fill="#421d68"/><circle cx="876.8" cy="437.1" r="2.3" fill="#2e5d82"/><circle cx="877.1" cy="430.8" r="2.3" fill="#42236d"/><circle cx="877.2" cy="425.0" r="2.3" fill="#3b3f7c"/><circle cx="877.0" cy="419.3" r="2.3" fill="#2d5f82"/><circle cx="877.3" cy="412.7" r="2.3" fill="#3f3175"/><circle cx="877.3" cy="407.2" r="2.3" fill="#374a7f"/><circle cx="877.1" cy="401.2" r="2.3" fill="#3f2e73"/><circle cx="876.9" cy="395.5" r="2.3" fill="#3f0854"/><circle cx="877.2" cy="388.9" r="2.3" fill="#42236d"/><circle cx="876.9" cy="383.1" r="2.3" fill="#421f6a"/><circle cx="877.0" cy="377.4" r="2.3" fill="#3e3376"/><circle cx="877.2" cy="371.7" r="2.3" fill="#315782"/><circle cx="877.0" cy="365.4" r="2.3" fill="#3d3778"/><circle cx="877.1" cy="359.8" r="2.3" fill="#257382"/><circle cx="876.8" cy="347.6" r="2.3" fill="#227c82"/><circle cx="877.1" cy="336.7" r="2.3" fill="#28a174"/><circle cx="876.6" cy="329.0" r="2.3" fill="#64bc52"/><circle cx="878.0" cy="311.9" r="2.3" fill="#e9d522"/><circle cx="882.4" cy="535.4" r="2.3" fill="#3f014d"/><circle cx="882.1" cy="529.2" r="2.3" fill="#3e3476"/><circle cx="882.5" cy="523.2" r="2.3" fill="#3f3175"/><circle cx="881.9" cy="517.5" r="2.3" fill="#335381"/><circle cx="882.0" cy="511.4" r="2.3" fill="#39457e"/><circle cx="882.5" cy="505.1" r="2.3" fill="#37497f"/><circle cx="883.2" cy="497.6" r="2.3" fill="#315782"/><circle cx="880.3" cy="492.7" r="2.3" fill="#325581"/><circle cx="883.4" cy="488.3" r="2.3" fill="#335381"/><circle cx="881.8" cy="474.9" r="2.3" fill="#41145f"/><circle cx="882.9" cy="468.7" r="2.3" fill="#41286f"/><circle cx="882.3" cy="463.6" r="2.3" fill="#39457e"/><circle cx="882.6" cy="458.1" r="2.3" fill="#41276f"/><circle cx="882.0" cy="451.5" r="2.3" fill="#37487e"/><circle cx="882.2" cy="446.0" r="2.3" fill="#364c7f"/><circle cx="882.2" cy="439.7" r="2.3" fill="#345180"/><circle cx="882.5" cy="433.8" r="2.3" fill="#335381"/><circle cx="882.5" cy="428.0" r="2.3" fill="#335381"/><circle cx="882.2" cy="421.8" r="2.3" fill="#402c72"/><circle cx="882.5" cy="416.3" r="2.3" fill="#38487e"/><circle cx="882.5" cy="409.8" r="2.3" fill="#325581"/><circle cx="882.1" cy="404.5" r="2.3" fill="#402b71"/><circle cx="882.4" cy="398.4" r="2.3" fill="#411964"/><circle cx="882.4" cy="392.2" r="2.3" fill="#37497e"/><circle cx="882.0" cy="386.5" r="2.3" fill="#3e3476"/><circle cx="882.0" cy="380.2" r="2.3" fill="#3f3175"/><circle cx="882.3" cy="374.6" r="2.3" fill="#335381"/><circle cx="881.9" cy="368.1" r="2.3" fill="#3c3e7c"/><circle cx="882.3" cy="362.4" r="2.3" fill="#276e83"/><circle cx="882.1" cy="356.2" r="2.3" fill="#2c6382"/><circle cx="882.3" cy="344.5" r="2.3" fill="#1f927c"/><circle cx="882.3" cy="338.0" r="2.3" fill="#6abe4e"/><circle cx="881.4" cy="332.4" r="2.3" fill="#66bd51"/><circle cx="882.8" cy="326.6" r="2.3" fill="#229d78"/><circle cx="882.9" cy="308.5" r="2.3" fill="#e9d522"/><circle cx="887.1" cy="538.0" r="2.3" fill="#3f014d"/><circle cx="887.2" cy="531.7" r="2.3" fill="#400c58"/><circle cx="887.5" cy="525.9" r="2.3" fill="#41276f"/><circle cx="887.2" cy="519.9" r="2.3" fill="#364c7f"/><circle cx="887.6" cy="514.1" r="2.3" fill="#2b6582"/><circle cx="887.5" cy="508.4" r="2.3" fill="#3e3678"/><circle cx="889.1" cy="502.9" r="2.3" fill="#2d5f82"/><circle cx="887.0" cy="483.8" r="2.3" fill="#3c3c7b"/><circle cx="887.9" cy="478.1" r="2.3" fill="#42246d"/><circle cx="887.9" cy="472.1" r="2.3" fill="#421f6a"/><circle cx="887.7" cy="461.1" r="2.3" fill="#421d68"/><circle cx="887.9" cy="454.2" r="2.3" fill="#3e3476"/><circle cx="887.3" cy="449.0" r="2.3" fill="#3f2e73"/><circle cx="887.2" cy="443.0" r="2.3" fill="#41125d"/><circle cx="887.1" cy="437.0" r="2.3" fill="#41276f"/><circle cx="887.4" cy="430.6" r="2.3" fill="#3f2f74"/><circle cx="887.5" cy="424.9" r="2.3" fill="#374a7f"/><circle cx="887.5" cy="418.8" r="2.3" fill="#411863"/><circle cx="887.2" cy="412.9" r="2.3" fill="#402b71"/><circle cx="887.1" cy="407.0" r="2.3" fill="#402b71"/><circle cx="887.6" cy="400.9" r="2.3" fill="#41135e"/><circle cx="887.2" cy="394.9" r="2.3" fill="#412970"/><circle cx="887.7" cy="389.6" r="2.3" fill="#3b417d"/><circle cx="887.6" cy="383.4" r="2.3" fill="#42246d"/><circle cx="887.7" cy="377.0" r="2.3" fill="#3f3074"/><circle cx="887.3" cy="371.2" r="2.3" fill="#411560"/><circle cx="887.6" cy="365.3" r="2.3" fill="#296882"/><circle cx="887.8" cy="359.3" r="2.3" fill="#257382"/><circle cx="887.0" cy="353.2" r="2.3" fill="#1e8780"/><circle cx="887.5" cy="347.5" r="2.3" fill="#1f8c7f"/><circle cx="887.7" cy="341.4" r="2.3" fill="#91c735"/><circle cx="887.5" cy="329.7" r="2.3" fill="#7ec341"/><circle cx="886.7" cy="318.6" r="2.3" fill="#e9d522"/><circle cx="892.3" cy="534.9" r="2.3" fill="#41125e"/><circle cx="892.4" cy="529.3" r="2.3" fill="#42206b"/><circle cx="892.7" cy="523.4" r="2.3" fill="#3c3d7b"/><circle cx="892.6" cy="517.5" r="2.3" fill="#354f80"/><circle cx="892.5" cy="511.5" r="2.3" fill="#402a70"/><circle cx="893.3" cy="493.0" r="2.3" fill="#257482"/><circle cx="893.6" cy="481.2" r="2.3" fill="#3f2e73"/><circle cx="892.7" cy="468.5" r="2.3" fill="#400a56"/><circle cx="892.8" cy="463.6" r="2.3" fill="#39467e"/><circle cx="892.8" cy="451.9" r="2.3" fill="#421e68"/><circle cx="892.1" cy="446.2" r="2.3" fill="#400e59"/><circle cx="892.4" cy="439.5" r="2.3" fill="#402d72"/><circle cx="892.4" cy="433.6" r="2.3" fill="#38467e"/><circle cx="892.4" cy="427.7" r="2.3" fill="#364b7f"/><circle cx="892.7" cy="422.0" r="2.3" fill="#3f3074"/><circle cx="892.3" cy="416.0" r="2.3" fill="#3f3175"/><circle cx="892.9" cy="409.8" r="2.3" fill="#3a427d"/><circle cx="892.3" cy="404.3" r="2.3" fill="#411a65"/><circle cx="892.6" cy="397.9" r="2.3" fill="#3f034f"/><circle cx="892.9" cy="392.2" r="2.3" fill="#42226c"/><circle cx="892.4" cy="386.2" r="2.3" fill="#421b66"/><circle cx="892.6" cy="380.3" r="2.3" fill="#421c67"/><circle cx="892.4" cy="374.0" r="2.3" fill="#402b71"/><circle cx="892.5" cy="368.1" r="2.3" fill="#315882"/><circle cx="893.0" cy="356.7" r="2.3" fill="#1f8381"/><circle cx="892.8" cy="350.3" r="2.3" fill="#276d83"/><circle cx="892.7" cy="345.0" r="2.3" fill="#63bc52"/><circle cx="893.0" cy="339.4" r="2.3" fill="#c7d023"/><circle cx="892.2" cy="332.2" r="2.3" fill="#99c931"/><circle cx="893.0" cy="326.8" r="2.3" fill="#5cba56"/><circle cx="893.4" cy="321.1" r="2.3" fill="#aecd23"/><circle cx="893.1" cy="315.0" r="2.3" fill="#a4cb29"/><circle cx="892.5" cy="308.8" r="2.3" fill="#a0ca2c"/><circle cx="897.7" cy="537.9" r="2.3" fill="#41145f"/><circle cx="898.1" cy="531.8" r="2.3" fill="#41286f"/><circle cx="897.8" cy="526.2" r="2.3" fill="#402970"/><circle cx="897.6" cy="519.8" r="2.3" fill="#2f5b82"/><circle cx="897.8" cy="514.1" r="2.3" fill="#42246d"/><circle cx="898.1" cy="508.5" r="2.3" fill="#374a7f"/><circle cx="897.2" cy="485.1" r="2.3" fill="#3b417d"/><circle cx="898.0" cy="467.7" r="2.3" fill="#411863"/><circle cx="897.4" cy="460.9" r="2.3" fill="#400d58"/><circle cx="898.1" cy="454.9" r="2.3" fill="#3f014d"/><circle cx="897.9" cy="448.4" r="2.3" fill="#41276f"/><circle cx="897.7" cy="442.6" r="2.3" fill="#3d3979"/><circle cx="897.6" cy="436.7" r="2.3" fill="#411560"/><circle cx="897.7" cy="430.9" r="2.3" fill="#41256e"/><circle cx="897.7" cy="425.3" r="2.3" fill="#411762"/><circle cx="897.7" cy="419.1" r="2.3" fill="#3f2e73"/><circle cx="897.9" cy="412.9" r="2.3" fill="#402c72"/><circle cx="897.5" cy="407.1" r="2.3" fill="#412870"/><circle cx="898.1" cy="401.2" r="2.3" fill="#3f2e73"/><circle cx="897.9" cy="395.0" r="2.3" fill="#42246d"/><circle cx="897.8" cy="389.5" r="2.3" fill="#421b66"/><circle cx="897.6" cy="383.0" r="2.3" fill="#3f2f74"/><circle cx="898.0" cy="377.3" r="2.3" fill="#3b417d"/><circle cx="897.7" cy="371.6" r="2.3" fill="#37497f"/><circle cx="897.6" cy="365.8" r="2.3" fill="#354e80"/><circle cx="898.0" cy="359.4" r="2.3" fill="#227c82"/><circle cx="897.6" cy="353.8" r="2.3" fill="#1f977b"/><circle cx="897.8" cy="347.3" r="2.3" fill="#3cae69"/><circle cx="897.9" cy="340.9" r="2.3" fill="#a7cc27"/><circle cx="897.7" cy="335.1" r="2.3" fill="#a7cc27"/><circle cx="897.9" cy="329.5" r="2.3" fill="#e0d322"/><circle cx="897.5" cy="324.3" r="2.3" fill="#e6d422"/><circle cx="897.1" cy="311.1" r="2.3" fill="#8ac63a"/><circle cx="897.4" cy="306.0" r="2.3" fill="#e9d522"/><circle cx="902.8" cy="535.4" r="2.3" fill="#3f014d"/><circle cx="902.9" cy="528.8" r="2.3" fill="#41266e"/><circle cx="902.7" cy="523.2" r="2.3" fill="#3f3275"/><circle cx="903.3" cy="517.0" r="2.3" fill="#344f80"/><circle cx="903.3" cy="511.3" r="2.3" fill="#345080"/><circle cx="902.8" cy="505.1" r="2.3" fill="#217d81"/><circle cx="903.4" cy="498.8" r="2.3" fill="#257482"/><circle cx="902.1" cy="492.1" r="2.3" fill="#3a437d"/><circle cx="903.8" cy="480.6" r="2.3" fill="#411762"/><circle cx="902.4" cy="475.6" r="2.3" fill="#3f0450"/><circle cx="903.0" cy="463.2" r="2.3" fill="#421d68"/><circle cx="902.5" cy="457.5" r="2.3" fill="#412870"/><circle cx="902.7" cy="451.5" r="2.3" fill="#402c72"/><circle cx="903.2" cy="445.4" r="2.3" fill="#400f5b"/><circle cx="902.8" cy="439.9" r="2.3" fill="#3f014d"/><circle cx="902.7" cy="433.6" r="2.3" fill="#41145f"/><circle cx="903.0" cy="428.0" r="2.3" fill="#421f6a"/><circle cx="903.2" cy="421.7" r="2.3" fill="#3f0653"/><circle cx="903.3" cy="416.2" r="2.3" fill="#3d3879"/><circle cx="903.2" cy="410.1" r="2.3" fill="#42236c"/><circle cx="903.3" cy="404.0" r="2.3" fill="#42246d"/><circle cx="903.0" cy="397.9" r="2.3" fill="#411460"/><circle cx="903.3" cy="392.1" r="2.3" fill="#3f014d"/><circle cx="903.2" cy="386.4" r="2.3" fill="#421b66"/><circle cx="903.2" cy="380.3" r="2.3" fill="#3c3c7b"/><circle cx="902.9" cy="374.2" r="2.3" fill="#41135f"/><circle cx="902.9" cy="368.6" r="2.3" fill="#39457e"/><circle cx="903.4" cy="362.8" r="2.3" fill="#335381"/><circle cx="903.4" cy="356.9" r="2.3" fill="#247682"/><circle cx="902.5" cy="350.2" r="2.3" fill="#1f917d"/><circle cx="903.0" cy="344.7" r="2.3" fill="#3bad69"/><circle cx="902.9" cy="338.8" r="2.3" fill="#e9d522"/><circle cx="902.5" cy="333.0" r="2.3" fill="#e6d422"/><circle cx="903.4" cy="327.0" r="2.3" fill="#c9d123"/><circle cx="902.5" cy="321.3" r="2.3" fill="#d0d122"/><circle cx="903.1" cy="315.4" r="2.3" fill="#e9d522"/><circle cx="908.1" cy="538.0" r="2.3" fill="#421b66"/><circle cx="908.5" cy="532.2" r="2.3" fill="#400a56"/><circle cx="908.2" cy="526.3" r="2.3" fill="#411964"/><circle cx="908.5" cy="520.3" r="2.3" fill="#41266e"/><circle cx="908.2" cy="514.5" r="2.3" fill="#354f80"/><circle cx="908.5" cy="508.4" r="2.3" fill="#41266e"/><circle cx="907.9" cy="502.7" r="2.3" fill="#2d6082"/><circle cx="909.1" cy="490.7" r="2.3" fill="#2a6782"/><circle cx="908.3" cy="484.1" r="2.3" fill="#3a437d"/><circle cx="908.1" cy="477.7" r="2.3" fill="#3d3b7a"/><circle cx="908.1" cy="472.2" r="2.3" fill="#3f0854"/><circle cx="909.0" cy="467.0" r="2.3" fill="#411964"/><circle cx="908.1" cy="460.3" r="2.3" fill="#400e5a"/><circle cx="908.7" cy="455.0" r="2.3" fill="#421d68"/><circle cx="907.8" cy="448.5" r="2.3" fill="#400f5b"/><circle cx="908.2" cy="442.7" r="2.3" fill="#3f0955"/><circle cx="908.1" cy="437.0" r="2.3" fill="#3f014d"/><circle cx="908.3" cy="430.9" r="2.3" fill="#3f0551"/><circle cx="908.2" cy="425.0" r="2.3" fill="#41135e"/><circle cx="908.5" cy="419.3" r="2.3" fill="#421f6a"/><circle cx="908.0" cy="412.9" r="2.3" fill="#3f014d"/><circle cx="908.5" cy="406.8" r="2.3" fill="#421f6a"/><circle cx="908.3" cy="400.9" r="2.3" fill="#411561"/><circle cx="908.1" cy="395.5" r="2.3" fill="#40105c"/><circle cx="908.5" cy="389.3" r="2.3" fill="#402a70"/><circle cx="907.9" cy="383.3" r="2.3" fill="#41256e"/><circle cx="907.9" cy="377.3" r="2.3" fill="#3f014d"/><circle cx="908.2" cy="371.7" r="2.3" fill="#3c3c7b"/><circle cx="908.0" cy="365.5" r="2.3" fill="#315782"/><circle cx="908.3" cy="360.0" r="2.3" fill="#1f937c"/><circle cx="908.5" cy="353.0" r="2.3" fill="#2b6482"/><circle cx="908.7" cy="347.3" r="2.3" fill="#227c82"/><circle cx="908.5" cy="341.9" r="2.3" fill="#85c53d"/><circle cx="908.8" cy="335.1" r="2.3" fill="#6dbf4c"/><circle cx="908.6" cy="329.7" r="2.3" fill="#5fba55"/><circle cx="913.5" cy="534.8" r="2.3" fill="#411a65"/><circle cx="913.3" cy="529.1" r="2.3" fill="#40115d"/><circle cx="913.1" cy="522.8" r="2.3" fill="#3f3175"/><circle cx="913.6" cy="517.4" r="2.3" fill="#3c3c7b"/><circle cx="913.2" cy="510.9" r="2.3" fill="#364c7f"/><circle cx="913.1" cy="505.2" r="2.3" fill="#3c3e7c"/><circle cx="913.6" cy="500.2" r="2.3" fill="#276d83"/><circle cx="913.3" cy="494.3" r="2.3" fill="#247782"/><circle cx="913.1" cy="487.4" r="2.3" fill="#2d6182"/><circle cx="913.1" cy="482.0" r="2.3" fill="#3b417d"/><circle cx="912.7" cy="475.8" r="2.3" fill="#3f014d"/><circle cx="913.9" cy="469.9" r="2.3" fill="#42216c"/><circle cx="913.1" cy="463.7" r="2.3" fill="#41125e"/><circle cx="913.6" cy="457.8" r="2.3" fill="#3f014d"/><circle cx="913.1" cy="451.7" r="2.3" fill="#3f014d"/><circle cx="913.3" cy="439.6" r="2.3" fill="#3f034f"/><circle cx="913.6" cy="433.7" r="2.3" fill="#3f014d"/><circle cx="913.7" cy="427.9" r="2.3" fill="#3f014d"/><circle cx="913.7" cy="421.8" r="2.3" fill="#3f014d"/><circle cx="913.3" cy="416.0" r="2.3" fill="#41276f"/><circle cx="913.5" cy="410.4" r="2.3" fill="#3f0854"/><circle cx="913.1" cy="404.1" r="2.3" fill="#400d58"/><circle cx="913.4" cy="398.3" r="2.3" fill="#421b66"/><circle cx="913.7" cy="392.1" r="2.3" fill="#3f3275"/><circle cx="913.4" cy="386.1" r="2.3" fill="#42236c"/><circle cx="913.3" cy="380.6" r="2.3" fill="#3f2f74"/><circle cx="913.1" cy="374.2" r="2.3" fill="#421c66"/><circle cx="913.6" cy="368.3" r="2.3" fill="#402d73"/><circle cx="913.3" cy="362.4" r="2.3" fill="#1e8680"/><circle cx="913.7" cy="356.7" r="2.3" fill="#2a6682"/><circle cx="913.6" cy="350.7" r="2.3" fill="#276f83"/><circle cx="912.7" cy="338.4" r="2.3" fill="#8cc639"/><circle cx="914.0" cy="333.2" r="2.3" fill="#b9ce23"/><circle cx="913.7" cy="327.2" r="2.3" fill="#a0ca2c"/><circle cx="912.5" cy="308.2" r="2.3" fill="#e9d522"/><circle cx="918.4" cy="538.2" r="2.3" fill="#3f014d"/><circle cx="918.5" cy="531.7" r="2.3" fill="#42206a"/><circle cx="918.8" cy="526.2" r="2.3" fill="#42246d"/><circle cx="918.8" cy="520.4" r="2.3" fill="#39457e"/><circle cx="918.4" cy="514.1" r="2.3" fill="#39447e"/><circle cx="918.9" cy="507.9" r="2.3" fill="#38487e"/><circle cx="919.0" cy="496.4" r="2.3" fill="#247482"/><circle cx="918.4" cy="484.9" r="2.3" fill="#3d3979"/><circle cx="919.2" cy="478.9" r="2.3" fill="#3f014d"/><circle cx="918.4" cy="472.7" r="2.3" fill="#421f6a"/><circle cx="917.9" cy="465.8" r="2.3" fill="#411762"/><circle cx="918.8" cy="460.8" r="2.3" fill="#411560"/><circle cx="918.7" cy="454.4" r="2.3" fill="#42226c"/><circle cx="918.5" cy="448.5" r="2.3" fill="#421d68"/><circle cx="918.9" cy="442.6" r="2.3" fill="#42236d"/><circle cx="918.6" cy="436.5" r="2.3" fill="#3f0551"/><circle cx="918.9" cy="431.0" r="2.3" fill="#421c67"/><circle cx="918.7" cy="425.1" r="2.3" fill="#3f0854"/><circle cx="918.8" cy="418.7" r="2.3" fill="#3f0652"/><circle cx="918.4" cy="413.2" r="2.3" fill="#3f0753"/><circle cx="918.3" cy="406.9" r="2.3" fill="#400c58"/><circle cx="918.4" cy="400.8" r="2.3" fill="#400e5a"/><circle cx="918.5" cy="395.1" r="2.3" fill="#421e68"/><circle cx="918.3" cy="389.5" r="2.3" fill="#411863"/><circle cx="918.4" cy="383.6" r="2.3" fill="#41135f"/><circle cx="918.4" cy="377.6" r="2.3" fill="#3c3c7b"/><circle cx="918.6" cy="371.1" r="2.3" fill="#3e3476"/><circle cx="918.7" cy="365.6" r="2.3" fill="#3c3c7b"/><circle cx="918.1" cy="359.0" r="2.3" fill="#354d80"/><circle cx="919.0" cy="354.0" r="2.3" fill="#1f8b7f"/><circle cx="918.4" cy="347.3" r="2.3" fill="#1f997a"/><circle cx="919.1" cy="335.5" r="2.3" fill="#94c833"/><circle cx="918.8" cy="329.4" r="2.3" fill="#6bbf4e"/><circle cx="917.9" cy="324.3" r="2.3" fill="#c2d023"/><circle cx="918.9" cy="318.1" r="2.3" fill="#e9d522"/><circle cx="919.2" cy="312.4" r="2.3" fill="#e9d522"/><circle cx="918.1" cy="305.3" r="2.3" fill="#e9d522"/><circle cx="923.7" cy="535.3" r="2.3" fill="#3f0955"/><circle cx="923.9" cy="529.1" r="2.3" fill="#41125e"/><circle cx="923.5" cy="523.2" r="2.3" fill="#412970"/><circle cx="923.6" cy="517.2" r="2.3" fill="#3d3b7a"/><circle cx="923.7" cy="511.5" r="2.3" fill="#3e3577"/><circle cx="924.0" cy="505.6" r="2.3" fill="#2b6582"/><circle cx="924.2" cy="493.6" r="2.3" fill="#2fa570"/><circle cx="923.3" cy="487.6" r="2.3" fill="#37497f"/><circle cx="923.3" cy="482.0" r="2.3" fill="#3d3778"/><circle cx="923.7" cy="475.9" r="2.3" fill="#3f3275"/><circle cx="924.7" cy="470.5" r="2.3" fill="#411a65"/><circle cx="923.8" cy="464.0" r="2.3" fill="#3f0450"/><circle cx="923.7" cy="457.2" r="2.3" fill="#3f014d"/><circle cx="923.4" cy="451.7" r="2.3" fill="#400d58"/><circle cx="923.5" cy="445.7" r="2.3" fill="#3f014d"/><circle cx="923.7" cy="439.6" r="2.3" fill="#411560"/><circle cx="923.8" cy="434.2" r="2.3" fill="#3f0450"/><circle cx="924.0" cy="427.9" r="2.3" fill="#41135e"/><circle cx="923.5" cy="421.7" r="2.3" fill="#3f0854"/><circle cx="923.7" cy="416.4" r="2.3" fill="#40105b"/><circle cx="923.9" cy="410.4" r="2.3" fill="#3f014d"/><circle cx="923.7" cy="403.8" r="2.3" fill="#3f014d"/><circle cx="923.8" cy="398.2" r="2.3" fill="#41266e"/><circle cx="923.9" cy="392.1" r="2.3" fill="#421c67"/><circle cx="923.7" cy="386.1" r="2.3" fill="#41266e"/><circle cx="923.8" cy="380.7" r="2.3" fill="#42226c"/><circle cx="923.6" cy="374.6" r="2.3" fill="#3b407c"/><circle cx="923.9" cy="368.6" r="2.3" fill="#37497e"/><circle cx="924.2" cy="362.3" r="2.3" fill="#2c6382"/><circle cx="923.8" cy="356.3" r="2.3" fill="#325481"/><circle cx="923.8" cy="350.1" r="2.3" fill="#1f8d7e"/><circle cx="924.3" cy="344.1" r="2.3" fill="#5bb957"/><circle cx="923.8" cy="338.1" r="2.3" fill="#38ab6b"/><circle cx="923.8" cy="332.9" r="2.3" fill="#d8d222"/><circle cx="924.0" cy="314.8" r="2.3" fill="#c7d023"/><circle cx="923.9" cy="308.6" r="2.3" fill="#e9d522"/><circle cx="929.3" cy="538.2" r="2.3" fill="#40125d"/><circle cx="929.0" cy="531.9" r="2.3" fill="#400f5a"/><circle cx="929.3" cy="525.8" r="2.3" fill="#3f014d"/><circle cx="929.0" cy="519.9" r="2.3" fill="#3f3275"/><circle cx="929.0" cy="514.4" r="2.3" fill="#3b417d"/><circle cx="928.7" cy="508.3" r="2.3" fill="#315882"/><circle cx="929.6" cy="502.1" r="2.3" fill="#276d83"/><circle cx="928.0" cy="489.4" r="2.3" fill="#2e5f82"/><circle cx="928.1" cy="484.5" r="2.3" fill="#3c3d7b"/><circle cx="928.9" cy="478.2" r="2.3" fill="#42206a"/><circle cx="929.2" cy="467.5" r="2.3" fill="#3f3074"/><circle cx="929.3" cy="460.9" r="2.3" fill="#3f0551"/><circle cx="929.5" cy="454.8" r="2.3" fill="#400e5a"/><circle cx="929.1" cy="448.9" r="2.3" fill="#400d58"/><circle cx="928.7" cy="442.5" r="2.3" fill="#400e5a"/><circle cx="929.3" cy="436.6" r="2.3" fill="#3f014d"/><circle cx="929.3" cy="430.9" r="2.3" fill="#3f014d"/><circle cx="929.1" cy="425.1" r="2.3" fill="#3f014d"/><circle cx="928.7" cy="418.8" r="2.3" fill="#3f014d"/><circle cx="928.8" cy="413.3" r="2.3" fill="#3f014d"/><circle cx="928.9" cy="407.4" r="2.3" fill="#3f014d"/><circle cx="929.2" cy="401.1" r="2.3" fill="#3f0552"/><circle cx="929.1" cy="395.5" r="2.3" fill="#3f0753"/><circle cx="928.9" cy="389.2" r="2.3" fill="#400b57"/><circle cx="928.7" cy="383.3" r="2.3" fill="#411560"/><circle cx="929.0" cy="377.4" r="2.3" fill="#3d3b7a"/><circle cx="928.8" cy="371.4" r="2.3" fill="#42216c"/><circle cx="929.0" cy="365.3" r="2.3" fill="#38487e"/><circle cx="929.4" cy="359.9" r="2.3" fill="#247582"/><circle cx="929.1" cy="353.0" r="2.3" fill="#296982"/><circle cx="929.2" cy="347.4" r="2.3" fill="#2e5e82"/><circle cx="928.8" cy="342.1" r="2.3" fill="#2fa570"/><circle cx="929.1" cy="335.1" r="2.3" fill="#36aa6c"/><circle cx="929.2" cy="329.9" r="2.3" fill="#6ec04c"/><circle cx="929.8" cy="317.8" r="2.3" fill="#accd24"/><circle cx="929.8" cy="311.9" r="2.3" fill="#e3d422"/><circle cx="929.2" cy="306.0" r="2.3" fill="#5eba55"/><circle cx="933.9" cy="534.7" r="2.3" fill="#40115d"/><circle cx="934.3" cy="529.2" r="2.3" fill="#40115d"/><circle cx="934.4" cy="523.2" r="2.3" fill="#412870"/><circle cx="933.9" cy="517.5" r="2.3" fill="#402b71"/><circle cx="934.5" cy="511.5" r="2.3" fill="#3d3a7a"/><circle cx="934.4" cy="505.0" r="2.3" fill="#402d72"/><circle cx="934.7" cy="498.2" r="2.3" fill="#257282"/><circle cx="933.5" cy="493.0" r="2.3" fill="#217d81"/><circle cx="934.6" cy="487.8" r="2.3" fill="#296882"/><circle cx="934.9" cy="469.7" r="2.3" fill="#41266f"/><circle cx="934.4" cy="463.3" r="2.3" fill="#3f0753"/><circle cx="934.6" cy="451.7" r="2.3" fill="#3f014d"/><circle cx="934.2" cy="445.6" r="2.3" fill="#411560"/><circle cx="934.4" cy="439.6" r="2.3" fill="#3f0955"/><circle cx="933.9" cy="433.7" r="2.3" fill="#400c58"/><circle cx="934.0" cy="428.1" r="2.3" fill="#3f014d"/><circle cx="934.5" cy="422.2" r="2.3" fill="#3f0551"/><circle cx="934.3" cy="416.1" r="2.3" fill="#3f014d"/><circle cx="934.0" cy="410.2" r="2.3" fill="#3f0350"/><circle cx="934.1" cy="404.4" r="2.3" fill="#3f014d"/><circle cx="934.2" cy="398.1" r="2.3" fill="#3f0450"/><circle cx="933.9" cy="392.1" r="2.3" fill="#3d3b7a"/><circle cx="934.3" cy="386.0" r="2.3" fill="#42226c"/><circle cx="934.0" cy="380.5" r="2.3" fill="#40115c"/><circle cx="934.0" cy="374.6" r="2.3" fill="#400f5b"/><circle cx="934.4" cy="368.7" r="2.3" fill="#3d3879"/><circle cx="933.7" cy="362.9" r="2.3" fill="#276e83"/><circle cx="934.2" cy="356.6" r="2.3" fill="#247582"/><circle cx="934.4" cy="350.6" r="2.3" fill="#267083"/><circle cx="933.9" cy="344.2" r="2.3" fill="#217e81"/><circle cx="934.2" cy="320.1" r="2.3" fill="#88c53b"/><circle cx="935.0" cy="314.1" r="2.3" fill="#e9d522"/><circle cx="934.0" cy="308.8" r="2.3" fill="#82c43f"/><circle cx="939.4" cy="538.2" r="2.3" fill="#411762"/><circle cx="939.6" cy="532.2" r="2.3" fill="#3f0753"/><circle cx="939.1" cy="525.8" r="2.3" fill="#402b71"/><circle cx="939.7" cy="519.9" r="2.3" fill="#41266e"/><circle cx="939.1" cy="514.2" r="2.3" fill="#3e3778"/><circle cx="939.7" cy="508.5" r="2.3" fill="#3c3b7a"/><circle cx="940.0" cy="485.0" r="2.3" fill="#3e3477"/><circle cx="939.1" cy="478.2" r="2.3" fill="#411863"/><circle cx="939.9" cy="460.2" r="2.3" fill="#411863"/><circle cx="939.8" cy="454.6" r="2.3" fill="#400a56"/><circle cx="939.7" cy="448.8" r="2.3" fill="#3f014d"/><circle cx="939.7" cy="442.6" r="2.3" fill="#3f014d"/><circle cx="939.4" cy="436.6" r="2.3" fill="#3f0955"/><circle cx="939.4" cy="430.6" r="2.3" fill="#400c57"/><circle cx="939.1" cy="425.2" r="2.3" fill="#40115d"/><circle cx="939.2" cy="418.9" r="2.3" fill="#3f0551"/><circle cx="939.4" cy="413.0" r="2.3" fill="#3f014d"/><circle cx="939.7" cy="406.9" r="2.3" fill="#400d59"/><circle cx="939.4" cy="401.0" r="2.3" fill="#3f0854"/><circle cx="939.3" cy="395.5" r="2.3" fill="#3f0753"/><circle cx="939.4" cy="389.1" r="2.3" fill="#3f0450"/><circle cx="939.3" cy="383.4" r="2.3" fill="#411662"/><circle cx="939.4" cy="377.4" r="2.3" fill="#421c66"/><circle cx="939.1" cy="371.1" r="2.3" fill="#400f5a"/><circle cx="939.2" cy="365.2" r="2.3" fill="#3b407d"/><circle cx="939.1" cy="359.2" r="2.3" fill="#315681"/><circle cx="939.0" cy="353.7" r="2.3" fill="#2c6282"/><circle cx="939.6" cy="347.5" r="2.3" fill="#247582"/><circle cx="939.6" cy="341.6" r="2.3" fill="#2aa273"/><circle cx="939.6" cy="329.2" r="2.3" fill="#4cb45f"/><circle cx="940.2" cy="312.6" r="2.3" fill="#e9d522"/><circle cx="944.9" cy="534.9" r="2.3" fill="#3f024f"/><circle cx="944.4" cy="529.3" r="2.3" fill="#421c67"/><circle cx="944.5" cy="522.8" r="2.3" fill="#3b407d"/><circle cx="944.6" cy="517.4" r="2.3" fill="#3d3979"/><circle cx="944.8" cy="511.0" r="2.3" fill="#38477e"/><circle cx="944.3" cy="505.0" r="2.3" fill="#37487e"/><circle cx="944.3" cy="499.5" r="2.3" fill="#38487e"/><circle cx="944.6" cy="492.3" r="2.3" fill="#237982"/><circle cx="944.7" cy="486.7" r="2.3" fill="#37497e"/><circle cx="945.0" cy="480.9" r="2.3" fill="#364b7f"/><circle cx="944.0" cy="475.8" r="2.3" fill="#39457e"/><circle cx="945.5" cy="469.9" r="2.3" fill="#3d3979"/><circle cx="944.9" cy="457.2" r="2.3" fill="#3f0955"/><circle cx="944.6" cy="451.5" r="2.3" fill="#3f014d"/><circle cx="944.3" cy="446.0" r="2.3" fill="#3f0652"/><circle cx="944.7" cy="439.9" r="2.3" fill="#3f014d"/><circle cx="944.7" cy="433.8" r="2.3" fill="#3f014d"/><circle cx="944.8" cy="428.1" r="2.3" fill="#3f014d"/><circle cx="944.9" cy="422.3" r="2.3" fill="#3f014d"/><circle cx="944.8" cy="416.2" r="2.3" fill="#400c58"/><circle cx="944.5" cy="410.3" r="2.3" fill="#3f014d"/><circle cx="944.6" cy="404.4" r="2.3" fill="#3f0753"/><circle cx="944.3" cy="398.4" r="2.3" fill="#3f0955"/><circle cx="944.9" cy="392.0" r="2.3" fill="#411b65"/><circle cx="944.5" cy="386.3" r="2.3" fill="#41256e"/><circle cx="944.9" cy="380.3" r="2.3" fill="#3f0854"/><circle cx="944.7" cy="374.1" r="2.3" fill="#411a65"/><circle cx="944.9" cy="368.6" r="2.3" fill="#41256e"/><circle cx="944.2" cy="362.5" r="2.3" fill="#325481"/><circle cx="945.0" cy="356.2" r="2.3" fill="#276f83"/><circle cx="945.0" cy="350.2" r="2.3" fill="#374a7f"/><circle cx="944.6" cy="344.9" r="2.3" fill="#267182"/><circle cx="944.5" cy="332.3" r="2.3" fill="#249e77"/><circle cx="944.9" cy="326.6" r="2.3" fill="#2ca372"/><circle cx="945.4" cy="320.4" r="2.3" fill="#51b65d"/><circle cx="945.4" cy="314.3" r="2.3" fill="#d8d222"/><circle cx="945.2" cy="309.0" r="2.3" fill="#c2d023"/><circle cx="949.6" cy="538.0" r="2.3" fill="#41125d"/><circle cx="949.8" cy="531.9" r="2.3" fill="#411a65"/><circle cx="949.5" cy="526.1" r="2.3" fill="#411b65"/><circle cx="949.7" cy="520.3" r="2.3" fill="#402a71"/><circle cx="950.1" cy="514.3" r="2.3" fill="#3c3c7b"/><circle cx="950.0" cy="507.9" r="2.3" fill="#364c7f"/><circle cx="949.3" cy="502.2" r="2.3" fill="#2c6382"/><circle cx="950.3" cy="484.0" r="2.3" fill="#364c7f"/><circle cx="950.1" cy="460.3" r="2.3" fill="#400e5a"/><circle cx="950.2" cy="448.3" r="2.3" fill="#421d68"/><circle cx="949.6" cy="442.5" r="2.3" fill="#3f024e"/><circle cx="949.5" cy="436.6" r="2.3" fill="#3f014d"/><circle cx="949.5" cy="430.9" r="2.3" fill="#3f014d"/><circle cx="950.1" cy="425.2" r="2.3" fill="#40115c"/><circle cx="950.1" cy="419.3" r="2.3" fill="#3f014d"/><circle cx="949.7" cy="412.9" r="2.3" fill="#3f014d"/><circle cx="949.9" cy="407.0" r="2.3" fill="#3f0450"/><circle cx="949.5" cy="401.4" r="2.3" fill="#3f014d"/><circle cx="949.9" cy="395.0" r="2.3" fill="#3f024e"/><circle cx="949.9" cy="389.0" r="2.3" fill="#3f014d"/><circle cx="950.0" cy="383.0" r="2.3" fill="#3f0652"/><circle cx="949.7" cy="377.3" r="2.3" fill="#400a56"/><circle cx="950.0" cy="371.1" r="2.3" fill="#411661"/><circle cx="949.6" cy="365.2" r="2.3" fill="#39457e"/><circle cx="950.2" cy="359.4" r="2.3" fill="#217f81"/><circle cx="949.9" cy="353.0" r="2.3" fill="#315882"/><circle cx="949.1" cy="341.7" r="2.3" fill="#2c6382"/><circle cx="950.5" cy="335.9" r="2.3" fill="#1f8f7d"/><circle cx="950.4" cy="330.5" r="2.3" fill="#1f8e7e"/><circle cx="950.7" cy="311.2" r="2.3" fill="#e3d422"/></g></g>
<text x="1019.5" y="96.9" font-family="Liberation Sans" font-size="25" fill="#000" textLength="62.5" lengthAdjust="spacingAndGlyphs">0.30 s</text>
<defs><linearGradient id="vir" x1="0" y1="1" x2="0" y2="0">
<stop offset="0" stop-color="#440154"/><stop offset="0.1" stop-color="#482475"/><stop offset="0.2" stop-color="#414487"/><stop offset="0.3" stop-color="#355f8d"/><stop offset="0.4" stop-color="#2a788e"/><stop offset="0.5" stop-color="#21918c"/><stop offset="0.6" stop-color="#22a884"/><stop offset="0.7" stop-color="#44bf70"/><stop offset="0.8" stop-color="#7ad151"/><stop offset="0.9" stop-color="#bddf26"/><stop offset="1" stop-color="#fde725"/>
</linearGradient></defs>
<rect x="1033" y="145" width="16" height="328" fill="url(#vir)"/>
<text x="1034" y="139" font-family="Liberation Sans" font-size="11" fill="#000" stroke="#000" stroke-width="0.3" textLength="37" lengthAdjust="spacingAndGlyphs">Velocity</text>
<g font-family="Liberation Sans" font-size="12.5" fill="#000" stroke="#000" stroke-width="0.55"><text x="1051" y="146.5">0.20</text><text x="1051" y="183.1">0.18</text><text x="1051" y="219.6">0.16</text><text x="1051" y="256.2">0.13</text><text x="1051" y="292.7">0.11</text><text x="1051" y="329.3">0.09</text><text x="1051" y="365.9">0.07</text><text x="1051" y="402.4">0.04</text><text x="1051" y="439.0">0.02</text><text x="1051" y="475.5">0.00</text></g>
<path d="M600.6,507.4 V482" stroke="#00ff00" stroke-width="1.3"/>
<path d="M598.4,484.5 L600.6,480.8 L602.8,484.5z" fill="#00dd00"/>
<path d="M600.6,507.4 H626" stroke="#ff0000" stroke-width="1.3"/>
<path d="M624,505.2 L628.5,507.4 L624,509.6z" fill="#ee0000"/>
<path d="M623.5,505 V510" stroke="#000" stroke-width="0.8"/>
<rect x="598" y="504.8" width="5.2" height="5.2" fill="#000055"/>
<g font-family="Liberation Sans" font-style="italic" font-weight="bold" font-size="11.5">
<text x="604.6" y="480" fill="#00ff00">Y</text>
<text x="603.6" y="503.2" fill="#0000ff">Z</text>
<text x="625.4" y="503.2" fill="#ff0000">X</text>
</g>
</svg>
<!-- right toolbar -->
<svg class="a" style="left:1086px;top:55px" width="30" height="503" viewBox="1086 55 30 503">
<path d="M1105,62 L1100.8,65.7 L1105,69.4" fill="none" stroke="#000" stroke-width="1.5"/>
<rect x="1096" y="82" width="13.8" height="13.7" rx="2" fill="#6e6e6e"/>
<g fill="#fff"><rect x="1097.9" y="83.9" width="2.2" height="2.2"/><rect x="1101.8" y="83.9" width="2.2" height="2.2"/><rect x="1105.7" y="83.9" width="2.2" height="2.2"/>
<rect x="1097.9" y="87.8" width="2.2" height="2.2"/><rect x="1101.8" y="87.8" width="2.2" height="2.2"/><rect x="1105.7" y="87.8" width="2.2" height="2.2"/>
<rect x="1097.9" y="91.7" width="2.2" height="2.2"/><rect x="1101.8" y="91.7" width="2.2" height="2.2"/><rect x="1105.7" y="91.7" width="2.2" height="2.2"/></g>
<g fill="#e4e1de" stroke="#c6c3bf" stroke-width="1">
<rect x="1091.5" y="106.5" width="23" height="22" rx="3"/><rect x="1091.5" y="134.5" width="23" height="22" rx="3"/><rect x="1091.5" y="162.5" width="23" height="22" rx="3"/><rect x="1091.5" y="190.5" width="23" height="22" rx="3"/><rect x="1091.5" y="218.5" width="23" height="22" rx="3"/>
</g>
<g fill="#000"><circle cx="1098.4" cy="114.2" r="1.85"/><circle cx="1102.2" cy="113.2" r="1.85"/><circle cx="1105.8" cy="111.4" r="1.85"/><circle cx="1107.4" cy="115.1" r="1.85"/><circle cx="1100.4" cy="117.4" r="1.85"/><circle cx="1104" cy="117.8" r="1.85"/><circle cx="1108" cy="119" r="1.85"/><circle cx="1098" cy="120.8" r="1.85"/><circle cx="1101.6" cy="121.5" r="1.85"/><circle cx="1105.2" cy="122" r="1.85"/></g>
<path d="M1099.3,140.2 L1108.3,141.3 L1108,148.4 L1102.2,150.2 L1097.4,146.5z M1099.3,140.2 L1102.2,144.9 L1108.3,141.3 M1102.2,144.9 L1108,148.4 M1102.2,144.9 L1102.2,150.2 M1102.2,144.9 L1097.4,146.5 M1099.3,140.2 L1100,146 L1102.2,150.2" fill="none" stroke="#000" stroke-width="1.15" stroke-linejoin="round"/>
<rect x="1097" y="167.5" width="12" height="12" rx="1.5" fill="#000"/>
<rect x="1098.6" y="169.6" width="8.8" height="3.4" fill="#fff"/>
<g fill="#fff"><rect x="1098.8" y="174.2" width="1.2" height="1.2"/><rect x="1101" y="174.2" width="1.2" height="1.2"/><rect x="1103.2" y="174.2" width="1.2" height="1.2"/><rect x="1105.4" y="174.2" width="1.2" height="1.2"/><rect x="1099.8" y="176.6" width="1.2" height="1.2"/><rect x="1102" y="176.6" width="1.2" height="1.2"/><rect x="1104.2" y="176.6" width="1.2" height="1.2"/></g>
<circle cx="1103" cy="201.5" r="5.8" fill="none" stroke="#000" stroke-width="1.4"/>
<path d="M1102.3,197.5 V202.2 L1105.2,205" fill="none" stroke="#000" stroke-width="1.3"/>
<path d="M1101.1,223.3 V232 H1109.9 M1101.1,232 L1096.7,235.9" fill="none" stroke="#000" stroke-width="1.4"/>
<circle cx="1103" cy="256.6" r="5.6" fill="none" stroke="#000" stroke-width="1.4" stroke-dasharray="2,1.3"/>
<path d="M1101,253.2 L1106,256.6 L1101,260z" fill="#000"/>
<path d="M1099,281 L1101.5,278.2 H1110 V287.5 L1107.5,290.2" fill="#555" stroke="#000" stroke-width="0.8"/>
<rect x="1096" y="281.5" width="11.5" height="9.8" rx="1.2" fill="#000"/>
<circle cx="1101.8" cy="286.4" r="2" fill="none" stroke="#fff" stroke-width="1"/>
</svg>


<!-- vtk toolbar icons -->
<svg class="a" style="left:545px;top:31px" width="340" height="24" viewBox="545 31 340 24">
<rect x="552.5" y="37.8" width="13" height="10.2" rx="1.6" fill="none" stroke="#000" stroke-width="1.5"/>
<g fill="#222"><circle cx="559" cy="39.6" r="0.7"/><circle cx="559" cy="46.3" r="0.7"/><circle cx="554.6" cy="42.9" r="0.7"/><circle cx="563.4" cy="42.9" r="0.7"/></g>
<g fill="none" stroke="#6b6b6b" stroke-width="1.6">
<path d="M577,36.2 V49 H590"/><path d="M601,36.2 V49 H614"/><path d="M625,36.2 V49 H638"/>
</g>
<g font-family="Liberation Sans" font-weight="bold" font-size="10.5" fill="#000">
<text x="578.6" y="46" textLength="11" lengthAdjust="spacingAndGlyphs">XY</text>
<text x="602.6" y="46" textLength="11" lengthAdjust="spacingAndGlyphs">YZ</text>
<text x="626.6" y="46" textLength="11" lengthAdjust="spacingAndGlyphs">XZ</text>
</g>
<path d="M655.5,38 A4.8,4.8 0 1 1 653.2,47.4" fill="none" stroke="#000" stroke-width="1.5"/>
<path d="M653.2,47.4 A4.8,4.8 0 0 1 653.5,38.3" fill="none" stroke="#000" stroke-width="1.5" stroke-dasharray="1.6,1.3"/>
<path d="M657.8,35.6 L653.2,38.1 L657.8,40.6z" fill="#000"/>
<path d="M678.3,38 A4.8,4.8 0 1 0 680.6,47.4" fill="none" stroke="#000" stroke-width="1.5"/>
<path d="M680.6,47.4 A4.8,4.8 0 0 0 680.3,38.3" fill="none" stroke="#000" stroke-width="1.5" stroke-dasharray="1.6,1.3"/>
<path d="M676,35.6 L680.6,38.1 L676,40.6z" fill="#000"/>
<path d="M697.1,40.4 L703.1,37.3 L708.9,37.3 L708.9,42.1 L705.7,48.6 L697.1,48.6z" fill="#000"/>
<path d="M698.5,41.6 H703.7 V47.3 H698.5z" fill="#f4f4f4"/>
<path d="M699.2,40.5 L703.4,38.6 L707.5,38.6 L703.6,40.6z" fill="#d8d8d8"/>
<path d="M705,41.6 L707.6,39.4 L707.6,42 L705.2,46.6z" fill="#e8e8e8"/>
<circle cx="704.3" cy="41.2" r="1.1" fill="#000"/>
<path d="M699.6,46.6 L703,42.6" stroke="#777" stroke-width="0.9" stroke-dasharray="1,0.7"/>
<path d="M720.2,38.6 a1,1 0 0 1 1,-1 H723.5 L724.6,36.3 H729.4 L730.5,37.6 H733 a1,1 0 0 1 1,1 V47 a1,1 0 0 1 -1,1 H721.2 a1,1 0 0 1 -1,-1z" fill="#000"/>
<circle cx="727" cy="42.9" r="2.5" fill="none" stroke="#fff" stroke-width="1.2"/>
<path d="M755,39 L750.5,43 L755,47" fill="none" stroke="#000" stroke-width="1.6"/>
<rect x="746.7" y="38.7" width="1.7" height="8.5" fill="#000"/>
<path d="M777.5,39 L773,43 L777.5,47" fill="none" stroke="#000" stroke-width="1.6"/>
<rect x="794.8" y="39" width="8.3" height="8" fill="#000"/>
<path d="M820.8,39 L825.3,43 L820.8,47" fill="none" stroke="#000" stroke-width="1.6"/>
<path d="M843,39 L847.5,43 L843,47" fill="none" stroke="#000" stroke-width="1.6"/>
<rect x="849.5" y="38.7" width="1.7" height="8.5" fill="#000"/>
<path d="M867,45.5 A4.6,4.6 0 0 1 872.5,38.3" fill="none" stroke="#000" stroke-width="1.6"/>
<path d="M875,40.5 A4.6,4.6 0 0 1 869.5,47.7" fill="none" stroke="#000" stroke-width="1.6"/>
<path d="M871.4,36 L874.6,38.4 L871.4,40.8z" fill="#000"/>
<path d="M870.6,45.2 L867.4,47.6 L870.6,50z" fill="#000"/>
</svg>
<!-- 3 input -->
<div class="inp" style="left:1034px;top:33px;width:81px;height:21px;line-height:19px;padding-left:4px">3</div>

<!-- console -->
<div class="a" style="left:545px;top:564px;width:572px;height:138px;border:1px solid #b4b1ad;background:#fff"></div>
<pre class="a" style="left:549px;top:565px;margin:0;font-family:'Liberation Mono',monospace;font-size:12px;line-height:14px;color:#000">   14   8.4E-04    0.       2.6E-06   3.0E-06    0.        0.        P0
Timestep walltime, fluid solver:    0.082 s
DEM NITs: 63   Total PIP: 2116
    NITs/SEC = 1340.
Timestep walltime, DEM solver:    0.047 s
 Time =  0.37766      Dt =  0.10000E-03
  Nit     P0        P1        U0        V0        U1        V1     Max res
    1   7.1E-08    0.       1.9E-03   3.1E-03    0.        0.        V0</pre>
<div class="a" style="left:1102px;top:565px;width:14px;height:136px;background:#f3f2f0;border-left:1px solid #dcdad7"></div>
<div class="a" style="left:1103px;top:579px;width:13px;height:82px;background:#dcdbd9;border-top:1px solid #cfcdca;border-bottom:1px solid #cfcdca"></div>
<svg class="a" style="left:1102px;top:565px" width="15" height="136" viewBox="1102 565 15 136">
<path d="M1105.2,574.8 L1109.3,570.8 L1113.4,574.8z" fill="#222"/>
<path d="M1105.2,691.2 L1109.3,695.2 L1113.4,691.2z" fill="#222"/>
</svg>
<div class="a" style="left:1103px;top:688px;width:13px;height:1px;background:#dcdad7"></div>
<!-- splitter dots -->
<svg class="a" style="left:808px;top:559px" width="24" height="4" viewBox="0 0 24 4"><g fill="#b0b0b0"><rect x="1" y="1" width="1" height="1"/><rect x="4" y="1" width="1" height="1"/><rect x="7" y="1" width="1" height="1"/><rect x="10" y="1" width="1" height="1"/><rect x="13" y="1" width="1" height="1"/><rect x="16" y="1" width="1" height="1"/></g></svg>
<!-- status row -->
<div class="lbl" style="left:553px;top:706px;color:#b5b5b5">0 errors</div>
<div class="lbl" style="left:622px;top:706px">1 warning</div>
<div class="lbl" style="left:703px;top:706px">2 messages</div>
<svg class="a" style="left:1065px;top:703px" width="52" height="20" viewBox="1065 703 52 20">
<path d="M1076.1,706 V716.2" stroke="#000" stroke-width="1.5"/><path d="M1072.8,713.2 L1076.1,717 L1079.4,713.2" fill="none" stroke="#000" stroke-width="1.5"/><path d="M1070.6,719 H1081.6" stroke="#000" stroke-width="1.5"/>
<path d="M1105,719.5 V709.5" stroke="#000" stroke-width="1.5"/><path d="M1101.7,712.5 L1105,708.7 L1108.3,712.5" fill="none" stroke="#000" stroke-width="1.5"/><path d="M1099.5,706.6 H1110.5" stroke="#000" stroke-width="1.5"/>
</svg>
<!-- bottom bar -->
<div class="a" style="left:0;top:725px;width:1117px;height:30px;background:#dcdcdc"></div>
<div class="a" style="left:0px;top:726px;width:80px;height:27px;background:#b1b1b1;border:1px solid #8d8d8d;border-radius:3px"></div>
<div class="lbl" style="left:11px;top:731px;font-size:16px;line-height:18px;letter-spacing:0;color:#2f80ed">Modeler</div>
<div class="lbl" style="left:90px;top:731px;font-size:16px;line-height:18px;letter-spacing:0">Nodeworks</div>
<div class="lbl" style="left:199px;top:731px;font-size:16px;line-height:18px;letter-spacing:0">Editor</div>
<div class="a" style="left:736px;top:728px;width:223px;height:23px;background:#fff;border:1px solid #b2b2b2;border-radius:3px;overflow:hidden">
<div class="a" style="left:-1px;top:-1px;width:15px;height:23px;background:linear-gradient(#44a2e6,#2f8ad6);border:1px solid #2a6fae;border-radius:3px"></div>
</div>
<div class="lbl" style="left:737px;top:732px;letter-spacing:0.32px">MFiX running: elapsed time 0:08:53</div>
<div class="a" style="left:965px;top:729px;width:2px;height:24px;border-left:1px solid #a8a8a8;border-right:1px solid #f4f4f4"></div>
<div class="lbl" style="left:974px;top:732px;white-space:pre">CPU:  23%</div>
<div class="a" style="left:1042px;top:729px;width:2px;height:24px;border-left:1px solid #a8a8a8;border-right:1px solid #f4f4f4"></div>
<div class="lbl" style="left:1051px;top:732px;white-space:pre">RAM:  17%</div>
</div></body></html>
